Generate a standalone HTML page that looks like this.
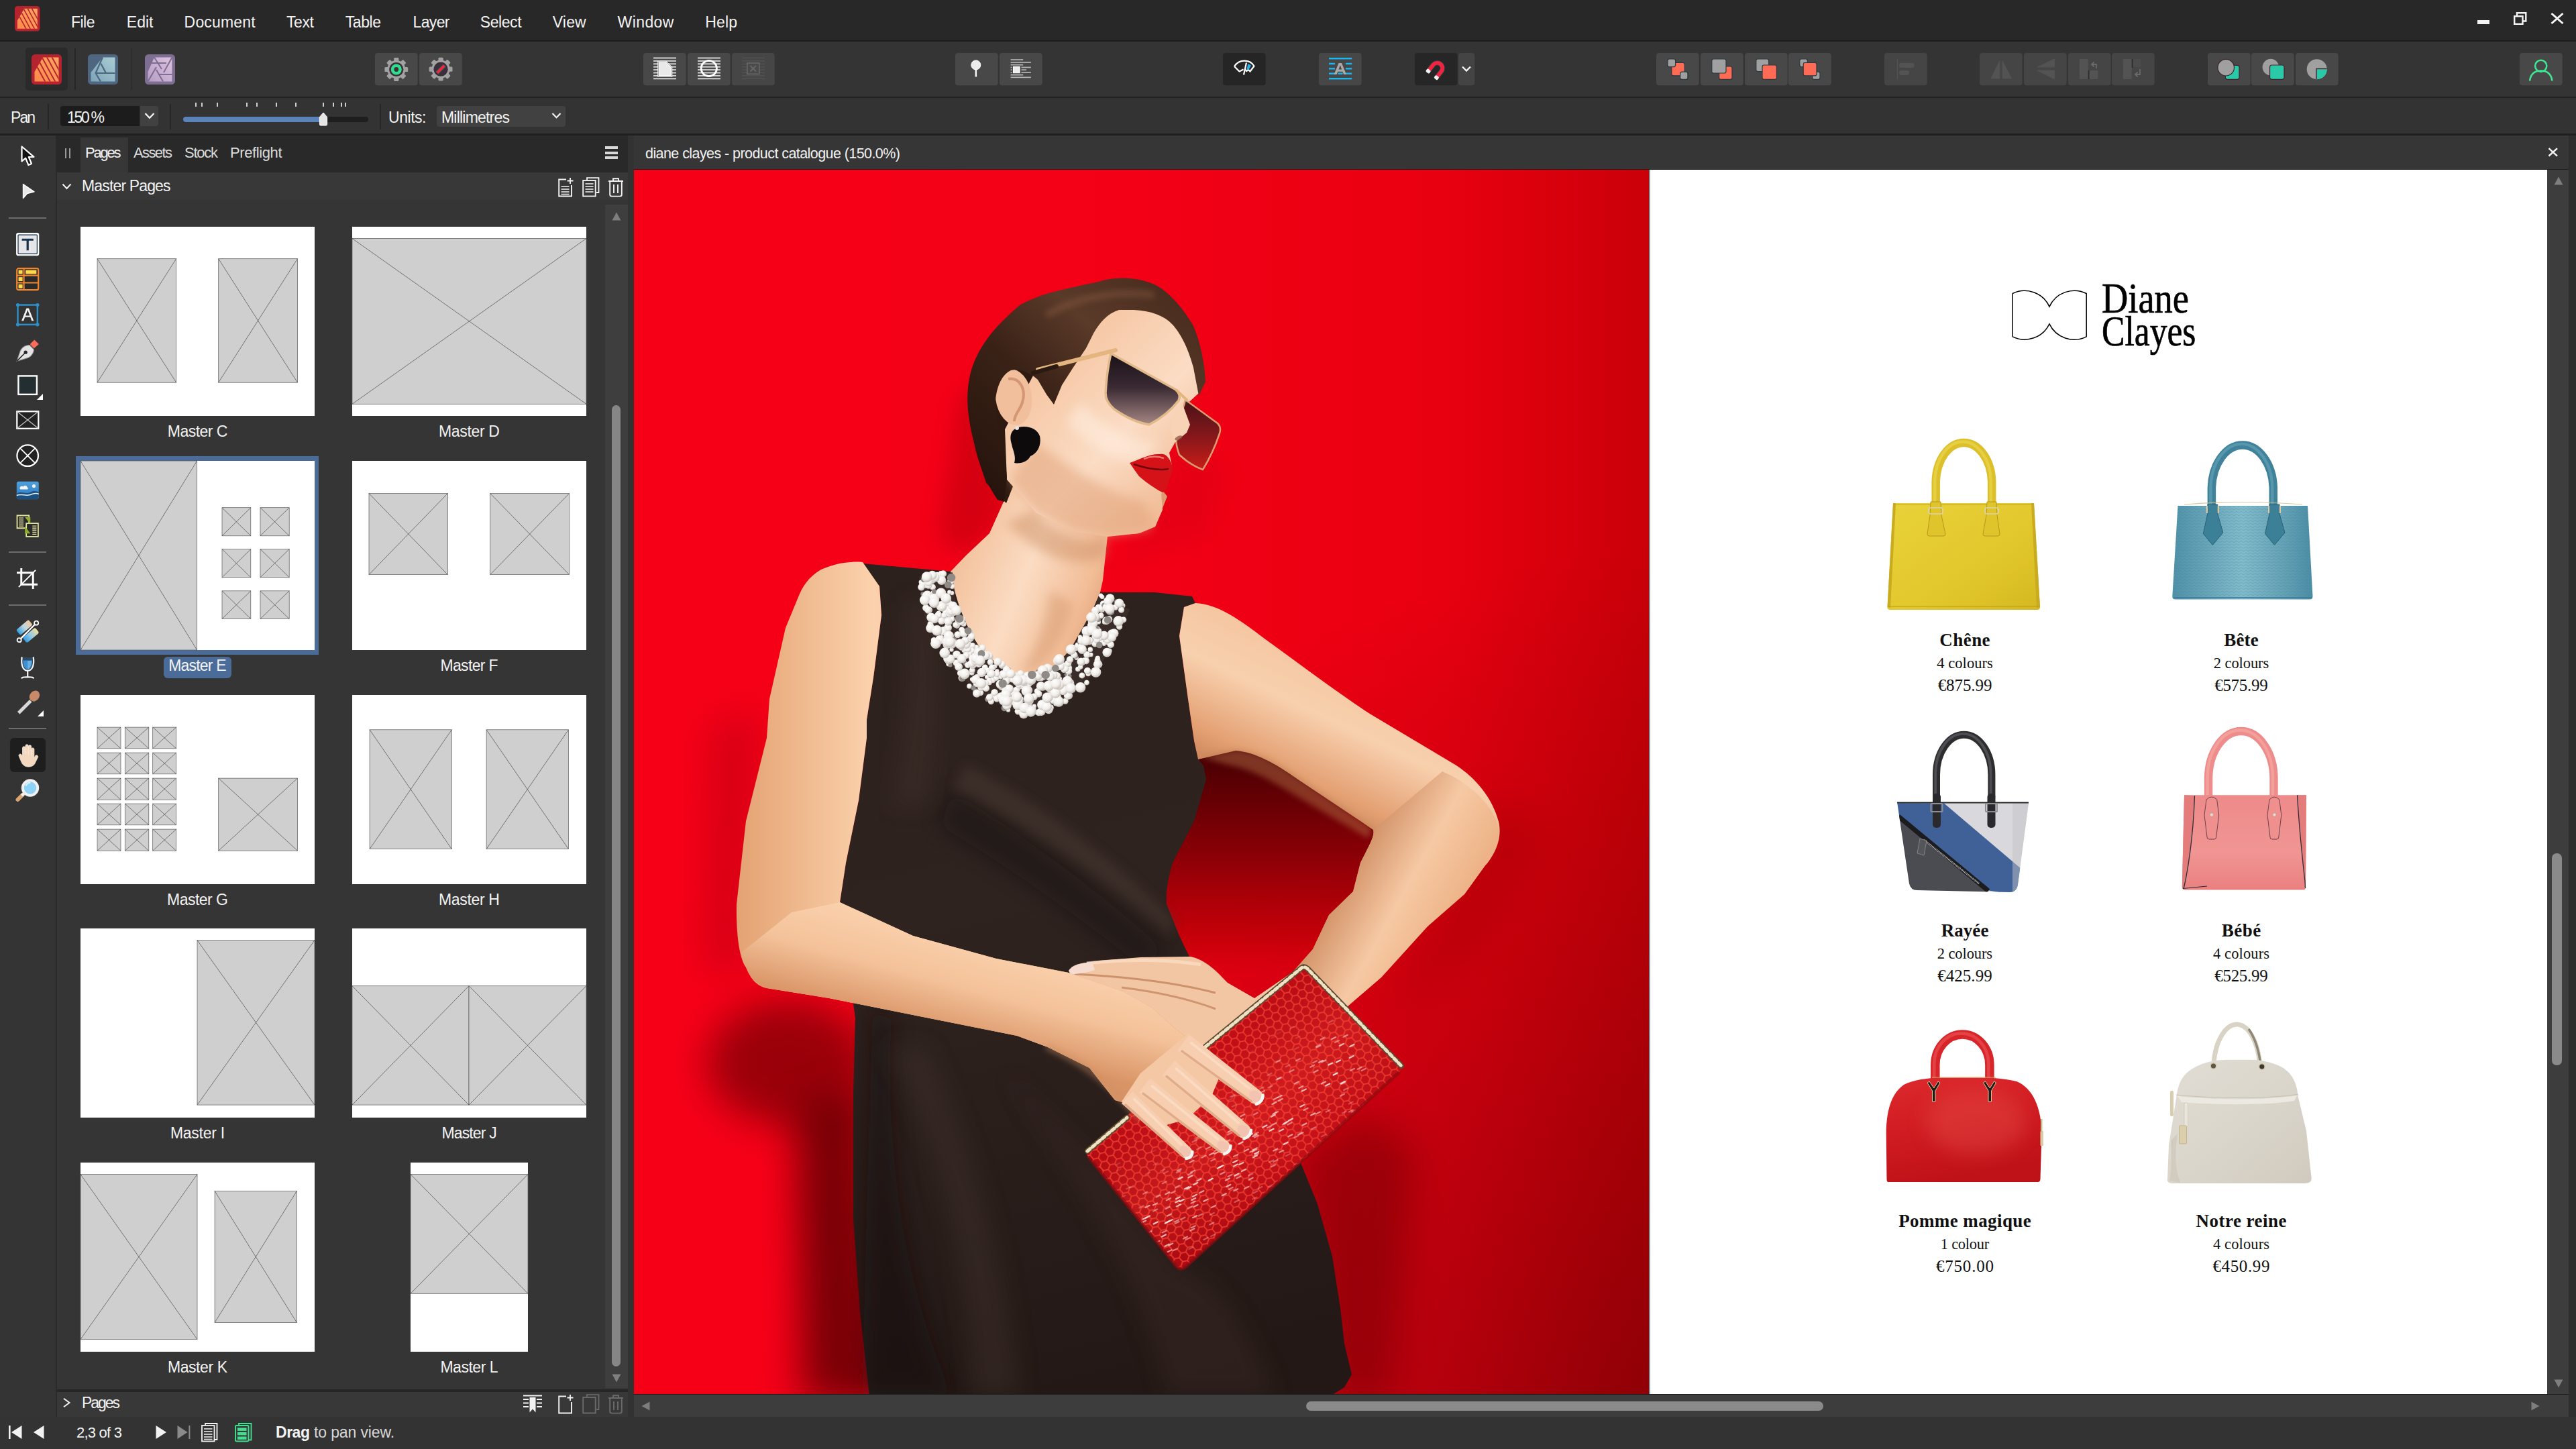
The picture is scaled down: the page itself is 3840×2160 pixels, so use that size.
<!DOCTYPE html>
<html><head><meta charset="utf-8"><title>Affinity Publisher</title>
<style>
html,body{margin:0;padding:0;background:#333;}
body{width:3840px;height:2160px;position:relative;overflow:hidden;font-family:"Liberation Sans",sans-serif;}
.a{position:absolute;}
.t{position:absolute;white-space:nowrap;}
svg{position:absolute;overflow:visible;}
</style></head><body>
<div class="a" style="left:0px;top:0px;width:3840px;height:60px;background:#282828;"></div>
<div class="a" style="left:0px;top:60px;width:3840px;height:2px;background:#1d1d1d;"></div>
<div class="a" style="left:0px;top:62px;width:3840px;height:82px;background:#343434;"></div>
<div class="a" style="left:0px;top:144px;width:3840px;height:2px;background:#202020;"></div>
<div class="a" style="left:0px;top:146px;width:3840px;height:53px;background:#333333;"></div>
<div class="a" style="left:0px;top:199px;width:3840px;height:3px;background:#1f1f1f;"></div>
<div class="a" style="left:0px;top:202px;width:83px;height:1910px;background:#343434;"></div>
<div class="a" style="left:83px;top:202px;width:2px;height:1910px;background:#2a2a2a;"></div>
<div class="a" style="left:85px;top:202px;width:851px;height:55px;background:#292929;"></div>
<div class="a" style="left:120px;top:205px;width:71px;height:52px;background:#373737;"></div>
<div class="a" style="left:85px;top:257px;width:851px;height:41px;background:#383838;"></div>
<div class="a" style="left:85px;top:298px;width:851px;height:1773px;background:#353535;"></div>
<div class="a" style="left:902px;top:305px;width:34px;height:1764px;background:#3e3e3e;"></div>
<div class="a" style="left:85px;top:2071px;width:851px;height:4px;background:#262626;"></div>
<div class="a" style="left:85px;top:2075px;width:851px;height:37px;background:#383838;"></div>
<div class="a" style="left:936px;top:202px;width:9px;height:1910px;background:#323232;"></div>
<div class="a" style="left:945px;top:202px;width:2px;height:50px;background:#2a2a2a;"></div>
<div class="a" style="left:945px;top:202px;width:2884px;height:50px;background:#363636;"></div>
<div class="a" style="left:3829px;top:202px;width:11px;height:1910px;background:#2e2e2e;"></div>
<div class="a" style="left:945px;top:252px;width:2884px;height:1px;background:#1a1f1f;"></div>
<div class="a" style="left:3797px;top:253px;width:32px;height:1825px;background:#3d3d3d;"></div>
<div class="a" style="left:945px;top:2078px;width:2884px;height:1px;background:#1c1c1c;"></div>
<div class="a" style="left:945px;top:2079px;width:2884px;height:33px;background:#3d3d3d;"></div>
<div class="a" style="left:1947px;top:2089px;width:771px;height:14px;background:#8a8a8a;border-radius:7px"></div>
<div class="a" style="left:3804px;top:1272px;width:15px;height:316px;background:#8a8a8a;border-radius:7px"></div>
<div class="a" style="left:912px;top:604px;width:13px;height:1433px;background:#868686;border-radius:7px"></div>
<div class="a" style="left:0px;top:2112px;width:3840px;height:48px;background:#333333;"></div>
<div class="t" style="left:106.0px;top:21.5px;font:400 23px/23px 'Liberation Sans',sans-serif;color:#f2f2f2;letter-spacing:-0.52px;">File</div>
<div class="t" style="left:188.8px;top:21.5px;font:400 23px/23px 'Liberation Sans',sans-serif;color:#f2f2f2;letter-spacing:0.02px;">Edit</div>
<div class="t" style="left:274.6px;top:21.5px;font:400 23px/23px 'Liberation Sans',sans-serif;color:#f2f2f2;letter-spacing:0.18px;">Document</div>
<div class="t" style="left:427.0px;top:21.5px;font:400 23px/23px 'Liberation Sans',sans-serif;color:#f2f2f2;letter-spacing:-0.39px;">Text</div>
<div class="t" style="left:514.7px;top:21.5px;font:400 23px/23px 'Liberation Sans',sans-serif;color:#f2f2f2;letter-spacing:-0.42px;">Table</div>
<div class="t" style="left:615.6px;top:21.5px;font:400 23px/23px 'Liberation Sans',sans-serif;color:#f2f2f2;letter-spacing:-0.68px;">Layer</div>
<div class="t" style="left:715.8px;top:21.5px;font:400 23px/23px 'Liberation Sans',sans-serif;color:#f2f2f2;letter-spacing:-0.43px;">Select</div>
<div class="t" style="left:823.8px;top:21.5px;font:400 23px/23px 'Liberation Sans',sans-serif;color:#f2f2f2;letter-spacing:0.15px;">View</div>
<div class="t" style="left:920.6px;top:21.5px;font:400 23px/23px 'Liberation Sans',sans-serif;color:#f2f2f2;letter-spacing:0.40px;">Window</div>
<div class="t" style="left:1051.3px;top:21.5px;font:400 23px/23px 'Liberation Sans',sans-serif;color:#f2f2f2;letter-spacing:0.17px;">Help</div>
<div class="a" style="left:71px;top:155px;width:2px;height:38px;background:#262626;"></div>
<div class="t" style="left:16.0px;top:163.5px;font:400 23px/23px 'Liberation Sans',sans-serif;color:#f2f2f2;letter-spacing:-1.96px;">Pan</div>
<div class="a" style="left:90px;top:158px;width:118px;height:30px;background:#1c1c1c;border-radius:4px 0 0 4px"></div>
<div class="a" style="left:209px;top:158px;width:27px;height:30px;background:#414141;border-radius:0 4px 4px 0"></div>
<div class="t" style="left:100.0px;top:163.5px;font:400 23px/23px 'Liberation Sans',sans-serif;color:#f2f2f2;letter-spacing:-2.30px;">150 %</div>
<div class="a" style="left:253px;top:155px;width:2px;height:38px;background:#262626;"></div>
<div class="a" style="left:273px;top:174px;width:276px;height:8px;background:#1e1e1e;border-radius:4px"></div>
<div class="a" style="left:273px;top:174px;width:209px;height:8px;background:#5b83b8;border-radius:4px 0 0 4px"></div>
<div class="a" style="left:291px;top:153px;width:2px;height:6px;background:#d0d0d0;"></div>
<div class="a" style="left:300px;top:153px;width:2px;height:6px;background:#d0d0d0;"></div>
<div class="a" style="left:323px;top:153px;width:2px;height:6px;background:#d0d0d0;"></div>
<div class="a" style="left:367px;top:153px;width:2px;height:6px;background:#d0d0d0;"></div>
<div class="a" style="left:382px;top:153px;width:2px;height:6px;background:#d0d0d0;"></div>
<div class="a" style="left:411px;top:153px;width:2px;height:6px;background:#d0d0d0;"></div>
<div class="a" style="left:440px;top:153px;width:2px;height:6px;background:#d0d0d0;"></div>
<div class="a" style="left:481px;top:153px;width:2px;height:6px;background:#d0d0d0;"></div>
<div class="a" style="left:496px;top:153px;width:2px;height:6px;background:#d0d0d0;"></div>
<div class="a" style="left:508px;top:153px;width:2px;height:6px;background:#d0d0d0;"></div>
<div class="a" style="left:514px;top:153px;width:2px;height:6px;background:#d0d0d0;"></div>
<div class="a" style="left:566px;top:155px;width:2px;height:38px;background:#262626;"></div>
<div class="t" style="left:579.0px;top:163.5px;font:400 23px/23px 'Liberation Sans',sans-serif;color:#f2f2f2;letter-spacing:-0.46px;">Units:</div>
<div class="a" style="left:651px;top:158px;width:192px;height:31px;background:#414141;border-radius:4px"></div>
<div class="t" style="left:658.0px;top:163.5px;font:400 23px/23px 'Liberation Sans',sans-serif;color:#f2f2f2;letter-spacing:-0.79px;">Millimetres</div>
<div class="t" style="left:127.0px;top:217.4px;font:400 22px/22px 'Liberation Sans',sans-serif;color:#f2f2f2;letter-spacing:-2.22px;">Pages</div>
<div class="t" style="left:199.0px;top:217.4px;font:400 22px/22px 'Liberation Sans',sans-serif;color:#dcdcdc;letter-spacing:-1.60px;">Assets</div>
<div class="t" style="left:275.0px;top:217.4px;font:400 22px/22px 'Liberation Sans',sans-serif;color:#dcdcdc;letter-spacing:-1.26px;">Stock</div>
<div class="t" style="left:343.0px;top:217.4px;font:400 22px/22px 'Liberation Sans',sans-serif;color:#dcdcdc;letter-spacing:-0.40px;">Preflight</div>
<div class="t" style="left:122.0px;top:265.5px;font:400 23px/23px 'Liberation Sans',sans-serif;color:#f2f2f2;letter-spacing:-0.85px;">Master Pages</div>
<div class="t" style="left:122.0px;top:2079.5px;font:400 23px/23px 'Liberation Sans',sans-serif;color:#f2f2f2;letter-spacing:-2.05px;">Pages</div>
<div class="t" style="left:962.0px;top:219.3px;font:400 21.5px/21.5px 'Liberation Sans',sans-serif;color:#f2f2f2;letter-spacing:-0.57px;">diane clayes - product catalogue (150.0%)</div>
<div class="t" style="left:114.0px;top:2124.9px;font:400 22px/22px 'Liberation Sans',sans-serif;color:#f2f2f2;letter-spacing:-0.77px;">2,3 of 3</div>
<div class="t" style="left:411.0px;top:2124.0px;font:700 23px/23px 'Liberation Sans',sans-serif;color:#f2f2f2;letter-spacing:-0.47px;">Drag</div>
<div class="t" style="left:468.0px;top:2124.0px;font:400 23px/23px 'Liberation Sans',sans-serif;color:#d8d8d8;letter-spacing:-0.13px;">to pan view.</div>
<div class="a" style="left:113px;top:680px;width:362px;height:296px;background:#4b6c99;"></div>
<div class="a" style="left:244px;top:979px;width:101px;height:32px;background:#4b6c99;border-radius:6px;"></div>
<svg style="left:120px;top:338px" width="349" height="282" viewBox="0 0 349 282"><rect width="349" height="282" fill="#fff"/><rect x="25.0" y="47.7" width="117.7" height="184.5" fill="#cfcfcf" stroke="#5a5a5a" stroke-width="0.7"/><path d="M25.0,47.7L142.7,232.2M142.7,47.7L25.0,232.2" stroke="#4a4a4a" stroke-width="0.7" fill="none"/><rect x="205.7" y="47.7" width="117.8" height="184.5" fill="#cfcfcf" stroke="#5a5a5a" stroke-width="0.7"/><path d="M205.7,47.7L323.5,232.2M323.5,47.7L205.7,232.2" stroke="#4a4a4a" stroke-width="0.7" fill="none"/></svg>
<svg style="left:525px;top:338px" width="349" height="282" viewBox="0 0 349 282"><rect width="349" height="282" fill="#fff"/><rect x="0.0" y="17.5" width="349.0" height="246.8" fill="#cfcfcf" stroke="#5a5a5a" stroke-width="0.7"/><path d="M0.0,17.5L349.0,264.3M349.0,17.5L0.0,264.3" stroke="#4a4a4a" stroke-width="0.7" fill="none"/></svg>
<div class="t" style="left:249.8px;top:632.2px;font:400 23px/23px 'Liberation Sans',sans-serif;color:#f2f2f2;letter-spacing:-0.54px;">Master C</div>
<div class="t" style="left:654.0px;top:632.2px;font:400 23px/23px 'Liberation Sans',sans-serif;color:#f2f2f2;letter-spacing:-0.34px;">Master D</div>
<svg style="left:120px;top:687px" width="349" height="282" viewBox="0 0 349 282"><rect width="349" height="282" fill="#fff"/><rect x="0.0" y="0.0" width="173.7" height="282.0" fill="#cfcfcf" stroke="#5a5a5a" stroke-width="0.7"/><path d="M0.0,0.0L173.7,282.0M173.7,0.0L0.0,282.0" stroke="#4a4a4a" stroke-width="0.7" fill="none"/><rect x="211.0" y="69.7" width="42.8" height="42.1" fill="#cfcfcf" stroke="#5a5a5a" stroke-width="0.7"/><path d="M211.0,69.7L253.8,111.8M253.8,69.7L211.0,111.8" stroke="#4a4a4a" stroke-width="0.7" fill="none"/><rect x="211.0" y="131.6" width="42.8" height="42.1" fill="#cfcfcf" stroke="#5a5a5a" stroke-width="0.7"/><path d="M211.0,131.6L253.8,173.7M253.8,131.6L211.0,173.7" stroke="#4a4a4a" stroke-width="0.7" fill="none"/><rect x="211.0" y="193.8" width="42.8" height="41.8" fill="#cfcfcf" stroke="#5a5a5a" stroke-width="0.7"/><path d="M211.0,193.8L253.8,235.6M253.8,193.8L211.0,235.6" stroke="#4a4a4a" stroke-width="0.7" fill="none"/><rect x="268.0" y="69.7" width="43.2" height="42.1" fill="#cfcfcf" stroke="#5a5a5a" stroke-width="0.7"/><path d="M268.0,69.7L311.2,111.8M311.2,69.7L268.0,111.8" stroke="#4a4a4a" stroke-width="0.7" fill="none"/><rect x="268.0" y="131.6" width="43.2" height="42.1" fill="#cfcfcf" stroke="#5a5a5a" stroke-width="0.7"/><path d="M268.0,131.6L311.2,173.7M311.2,131.6L268.0,173.7" stroke="#4a4a4a" stroke-width="0.7" fill="none"/><rect x="268.0" y="193.8" width="43.2" height="41.8" fill="#cfcfcf" stroke="#5a5a5a" stroke-width="0.7"/><path d="M268.0,193.8L311.2,235.6M311.2,193.8L268.0,235.6" stroke="#4a4a4a" stroke-width="0.7" fill="none"/></svg>
<svg style="left:525px;top:687px" width="349" height="282" viewBox="0 0 349 282"><rect width="349" height="282" fill="#fff"/><rect x="25.0" y="48.5" width="117.4" height="121.1" fill="#cfcfcf" stroke="#5a5a5a" stroke-width="0.7"/><path d="M25.0,48.5L142.4,169.6M142.4,48.5L25.0,169.6" stroke="#4a4a4a" stroke-width="0.7" fill="none"/><rect x="205.7" y="48.5" width="117.8" height="121.1" fill="#cfcfcf" stroke="#5a5a5a" stroke-width="0.7"/><path d="M205.7,48.5L323.5,169.6M323.5,48.5L205.7,169.6" stroke="#4a4a4a" stroke-width="0.7" fill="none"/></svg>
<div class="t" style="left:251.2px;top:981.2px;font:400 23px/23px 'Liberation Sans',sans-serif;color:#f2f2f2;letter-spacing:-0.79px;">Master E</div>
<div class="t" style="left:656.4px;top:981.2px;font:400 23px/23px 'Liberation Sans',sans-serif;color:#f2f2f2;letter-spacing:-0.65px;">Master F</div>
<svg style="left:120px;top:1036px" width="349" height="282" viewBox="0 0 349 282"><rect width="349" height="282" fill="#fff"/><rect x="25.0" y="48.1" width="35.0" height="31.7" fill="#cfcfcf" stroke="#5a5a5a" stroke-width="0.7"/><path d="M25.0,48.1L60.0,79.8M60.0,48.1L25.0,79.8" stroke="#4a4a4a" stroke-width="0.7" fill="none"/><rect x="25.0" y="86.1" width="35.0" height="31.7" fill="#cfcfcf" stroke="#5a5a5a" stroke-width="0.7"/><path d="M25.0,86.1L60.0,117.8M60.0,86.1L25.0,117.8" stroke="#4a4a4a" stroke-width="0.7" fill="none"/><rect x="25.0" y="124.1" width="35.0" height="32.1" fill="#cfcfcf" stroke="#5a5a5a" stroke-width="0.7"/><path d="M25.0,124.1L60.0,156.2M60.0,124.1L25.0,156.2" stroke="#4a4a4a" stroke-width="0.7" fill="none"/><rect x="25.0" y="162.1" width="35.0" height="31.7" fill="#cfcfcf" stroke="#5a5a5a" stroke-width="0.7"/><path d="M25.0,162.1L60.0,193.8M60.0,162.1L25.0,193.8" stroke="#4a4a4a" stroke-width="0.7" fill="none"/><rect x="25.0" y="200.1" width="35.0" height="32.1" fill="#cfcfcf" stroke="#5a5a5a" stroke-width="0.7"/><path d="M25.0,200.1L60.0,232.2M60.0,200.1L25.0,232.2" stroke="#4a4a4a" stroke-width="0.7" fill="none"/><rect x="66.3" y="48.1" width="35.5" height="31.7" fill="#cfcfcf" stroke="#5a5a5a" stroke-width="0.7"/><path d="M66.3,48.1L101.8,79.8M101.8,48.1L66.3,79.8" stroke="#4a4a4a" stroke-width="0.7" fill="none"/><rect x="66.3" y="86.1" width="35.5" height="31.7" fill="#cfcfcf" stroke="#5a5a5a" stroke-width="0.7"/><path d="M66.3,86.1L101.8,117.8M101.8,86.1L66.3,117.8" stroke="#4a4a4a" stroke-width="0.7" fill="none"/><rect x="66.3" y="124.1" width="35.5" height="32.1" fill="#cfcfcf" stroke="#5a5a5a" stroke-width="0.7"/><path d="M66.3,124.1L101.8,156.2M101.8,124.1L66.3,156.2" stroke="#4a4a4a" stroke-width="0.7" fill="none"/><rect x="66.3" y="162.1" width="35.5" height="31.7" fill="#cfcfcf" stroke="#5a5a5a" stroke-width="0.7"/><path d="M66.3,162.1L101.8,193.8M101.8,162.1L66.3,193.8" stroke="#4a4a4a" stroke-width="0.7" fill="none"/><rect x="66.3" y="200.1" width="35.5" height="32.1" fill="#cfcfcf" stroke="#5a5a5a" stroke-width="0.7"/><path d="M66.3,200.1L101.8,232.2M101.8,200.1L66.3,232.2" stroke="#4a4a4a" stroke-width="0.7" fill="none"/><rect x="107.7" y="48.1" width="35.0" height="31.7" fill="#cfcfcf" stroke="#5a5a5a" stroke-width="0.7"/><path d="M107.7,48.1L142.7,79.8M142.7,48.1L107.7,79.8" stroke="#4a4a4a" stroke-width="0.7" fill="none"/><rect x="107.7" y="86.1" width="35.0" height="31.7" fill="#cfcfcf" stroke="#5a5a5a" stroke-width="0.7"/><path d="M107.7,86.1L142.7,117.8M142.7,86.1L107.7,117.8" stroke="#4a4a4a" stroke-width="0.7" fill="none"/><rect x="107.7" y="124.1" width="35.0" height="32.1" fill="#cfcfcf" stroke="#5a5a5a" stroke-width="0.7"/><path d="M107.7,124.1L142.7,156.2M142.7,124.1L107.7,156.2" stroke="#4a4a4a" stroke-width="0.7" fill="none"/><rect x="107.7" y="162.1" width="35.0" height="31.7" fill="#cfcfcf" stroke="#5a5a5a" stroke-width="0.7"/><path d="M107.7,162.1L142.7,193.8M142.7,162.1L107.7,193.8" stroke="#4a4a4a" stroke-width="0.7" fill="none"/><rect x="107.7" y="200.1" width="35.0" height="32.1" fill="#cfcfcf" stroke="#5a5a5a" stroke-width="0.7"/><path d="M107.7,200.1L142.7,232.2M142.7,200.1L107.7,232.2" stroke="#4a4a4a" stroke-width="0.7" fill="none"/><rect x="205.7" y="124.1" width="117.8" height="108.1" fill="#cfcfcf" stroke="#5a5a5a" stroke-width="0.7"/><path d="M205.7,124.1L323.5,232.2M323.5,124.1L205.7,232.2" stroke="#4a4a4a" stroke-width="0.7" fill="none"/></svg>
<svg style="left:525px;top:1036px" width="349" height="282" viewBox="0 0 349 282"><rect width="349" height="282" fill="#fff"/><rect x="26.1" y="51.8" width="122.2" height="177.8" fill="#cfcfcf" stroke="#5a5a5a" stroke-width="0.7"/><path d="M26.1,51.8L148.3,229.6M148.3,51.8L26.1,229.6" stroke="#4a4a4a" stroke-width="0.7" fill="none"/><rect x="200.1" y="51.8" width="122.3" height="177.8" fill="#cfcfcf" stroke="#5a5a5a" stroke-width="0.7"/><path d="M200.1,51.8L322.4,229.6M322.4,51.8L200.1,229.6" stroke="#4a4a4a" stroke-width="0.7" fill="none"/></svg>
<div class="t" style="left:249.0px;top:1330.2px;font:400 23px/23px 'Liberation Sans',sans-serif;color:#f2f2f2;letter-spacing:-0.51px;">Master G</div>
<div class="t" style="left:654.0px;top:1330.2px;font:400 23px/23px 'Liberation Sans',sans-serif;color:#f2f2f2;letter-spacing:-0.34px;">Master H</div>
<svg style="left:120px;top:1384px" width="349" height="282" viewBox="0 0 349 282"><rect width="349" height="282" fill="#fff"/><rect x="174.0" y="17.5" width="175.0" height="245.6" fill="#cfcfcf" stroke="#5a5a5a" stroke-width="0.7"/><path d="M174.0,17.5L349.0,263.1M349.0,17.5L174.0,263.1" stroke="#4a4a4a" stroke-width="0.7" fill="none"/></svg>
<svg style="left:525px;top:1384px" width="349" height="282" viewBox="0 0 349 282"><rect width="349" height="282" fill="#fff"/><rect x="0.0" y="85.7" width="174.0" height="177.4" fill="#cfcfcf" stroke="#5a5a5a" stroke-width="0.7"/><path d="M0.0,85.7L174.0,263.1M174.0,85.7L0.0,263.1" stroke="#4a4a4a" stroke-width="0.7" fill="none"/><rect x="174.0" y="85.7" width="175.0" height="177.4" fill="#cfcfcf" stroke="#5a5a5a" stroke-width="0.7"/><path d="M174.0,85.7L349.0,263.1M349.0,85.7L174.0,263.1" stroke="#4a4a4a" stroke-width="0.7" fill="none"/></svg>
<div class="t" style="left:253.9px;top:1678.2px;font:400 23px/23px 'Liberation Sans',sans-serif;color:#f2f2f2;letter-spacing:-0.27px;">Master I</div>
<div class="t" style="left:658.4px;top:1678.2px;font:400 23px/23px 'Liberation Sans',sans-serif;color:#f2f2f2;letter-spacing:-0.84px;">Master J</div>
<svg style="left:120px;top:1733px" width="349" height="282" viewBox="0 0 349 282"><rect width="349" height="282" fill="#fff"/><rect x="0.0" y="17.5" width="174.0" height="246.0" fill="#cfcfcf" stroke="#5a5a5a" stroke-width="0.7"/><path d="M0.0,17.5L174.0,263.5M174.0,17.5L0.0,263.5" stroke="#4a4a4a" stroke-width="0.7" fill="none"/><rect x="200.1" y="42.5" width="122.3" height="196.0" fill="#cfcfcf" stroke="#5a5a5a" stroke-width="0.7"/><path d="M200.1,42.5L322.4,238.5M322.4,42.5L200.1,238.5" stroke="#4a4a4a" stroke-width="0.7" fill="none"/></svg>
<svg style="left:612px;top:1733px" width="175" height="282" viewBox="0 0 175 282"><rect width="175" height="282" fill="#fff"/><rect x="0.0" y="17.5" width="175.0" height="177.8" fill="#cfcfcf" stroke="#5a5a5a" stroke-width="0.7"/><path d="M0.0,17.5L175.0,195.3M175.0,17.5L0.0,195.3" stroke="#4a4a4a" stroke-width="0.7" fill="none"/></svg>
<div class="t" style="left:249.9px;top:2027.2px;font:400 23px/23px 'Liberation Sans',sans-serif;color:#f2f2f2;letter-spacing:-0.42px;">Master K</div>
<div class="t" style="left:656.4px;top:2027.2px;font:400 23px/23px 'Liberation Sans',sans-serif;color:#f2f2f2;letter-spacing:-0.47px;">Master L</div>
<svg style="left:559px;top:79px" width="63.7" height="48.3" viewBox="0 0 63.7 48.3"><rect width="63.7" height="48.3" rx="4" fill="#484848"/><rect x="28.2" y="7.100000000000001" width="7.2" height="8" rx="1.5" fill="#a2a2a2" transform="rotate(0 31.8 24.5)"/><rect x="28.2" y="7.100000000000001" width="7.2" height="8" rx="1.5" fill="#a2a2a2" transform="rotate(45 31.8 24.5)"/><rect x="28.2" y="7.100000000000001" width="7.2" height="8" rx="1.5" fill="#a2a2a2" transform="rotate(90 31.8 24.5)"/><rect x="28.2" y="7.100000000000001" width="7.2" height="8" rx="1.5" fill="#a2a2a2" transform="rotate(135 31.8 24.5)"/><rect x="28.2" y="7.100000000000001" width="7.2" height="8" rx="1.5" fill="#a2a2a2" transform="rotate(180 31.8 24.5)"/><rect x="28.2" y="7.100000000000001" width="7.2" height="8" rx="1.5" fill="#a2a2a2" transform="rotate(225 31.8 24.5)"/><rect x="28.2" y="7.100000000000001" width="7.2" height="8" rx="1.5" fill="#a2a2a2" transform="rotate(270 31.8 24.5)"/><rect x="28.2" y="7.100000000000001" width="7.2" height="8" rx="1.5" fill="#a2a2a2" transform="rotate(315 31.8 24.5)"/><circle cx="31.8" cy="24.5" r="13.6" fill="#a2a2a2"/><circle cx="31.8" cy="24.5" r="10.6" fill="#3a2f3a"/><circle cx="31.8" cy="24.5" r="5.7" fill="none" stroke="#2fe08a" stroke-width="4.6"/></svg>
<svg style="left:624.5px;top:79px" width="63.7" height="48.3" viewBox="0 0 63.7 48.3"><rect width="63.7" height="48.3" rx="4" fill="#484848"/><rect x="28.5" y="6.800000000000001" width="7.2" height="8" rx="1.5" fill="#a2a2a2" transform="rotate(0 32.1 24.2)"/><rect x="28.5" y="6.800000000000001" width="7.2" height="8" rx="1.5" fill="#a2a2a2" transform="rotate(45 32.1 24.2)"/><rect x="28.5" y="6.800000000000001" width="7.2" height="8" rx="1.5" fill="#a2a2a2" transform="rotate(90 32.1 24.2)"/><rect x="28.5" y="6.800000000000001" width="7.2" height="8" rx="1.5" fill="#a2a2a2" transform="rotate(135 32.1 24.2)"/><rect x="28.5" y="6.800000000000001" width="7.2" height="8" rx="1.5" fill="#a2a2a2" transform="rotate(180 32.1 24.2)"/><rect x="28.5" y="6.800000000000001" width="7.2" height="8" rx="1.5" fill="#a2a2a2" transform="rotate(225 32.1 24.2)"/><rect x="28.5" y="6.800000000000001" width="7.2" height="8" rx="1.5" fill="#a2a2a2" transform="rotate(270 32.1 24.2)"/><rect x="28.5" y="6.800000000000001" width="7.2" height="8" rx="1.5" fill="#a2a2a2" transform="rotate(315 32.1 24.2)"/><circle cx="32.1" cy="24.2" r="13.6" fill="#a2a2a2"/><circle cx="32.1" cy="24.2" r="10.6" fill="#3a2f3a"/><path d="M26.4,29.8 L37.8,18.6" stroke="#1f5a55" stroke-width="6.2"/><path d="M26.6,29.6 L37.6,18.8" stroke="#f3263f" stroke-width="4"/></svg>
<svg style="left:959px;top:79px" width="63.7" height="48.3" viewBox="0 0 63.7 48.3"><rect width="63.7" height="48.3" rx="4" fill="#484848"/><rect x="15" y="6.5" width="34" height="2" fill="#d0d0d0"/><rect x="15" y="10.9" width="34" height="2" fill="#d0d0d0"/><rect x="15" y="15.3" width="34" height="2" fill="#d0d0d0"/><rect x="15" y="19.7" width="34" height="2" fill="#d0d0d0"/><rect x="15" y="24.1" width="34" height="2" fill="#d0d0d0"/><rect x="15" y="28.5" width="34" height="2" fill="#d0d0d0"/><rect x="15" y="32.9" width="34" height="2" fill="#d0d0d0"/><rect x="15" y="37.3" width="34" height="2" fill="#d0d0d0"/><path d="M22.5,13 L33.5,13 L42,21.5 L42,34.5 L22.5,34.5 Z" fill="#e9e9e9" stroke="#fff" stroke-width="2.6" stroke-linejoin="miter"/><path d="M22.5,13 L33.5,13 L42,21.5 L42,34.5 L22.5,34.5 Z" fill="none" stroke="#2c2c2c" stroke-width="0.8" transform="translate(0,0)" opacity="0.5"/></svg>
<svg style="left:1025px;top:79px" width="63.7" height="48.3" viewBox="0 0 63.7 48.3"><rect width="63.7" height="48.3" rx="4" fill="#484848"/><rect x="15" y="6.5" width="34" height="2" fill="#d0d0d0"/><rect x="15" y="10.9" width="34" height="2" fill="#d0d0d0"/><rect x="15" y="15.3" width="34" height="2" fill="#d0d0d0"/><rect x="15" y="19.7" width="34" height="2" fill="#d0d0d0"/><rect x="15" y="24.1" width="34" height="2" fill="#d0d0d0"/><rect x="15" y="28.5" width="34" height="2" fill="#d0d0d0"/><rect x="15" y="32.9" width="34" height="2" fill="#d0d0d0"/><rect x="15" y="37.3" width="34" height="2" fill="#d0d0d0"/><circle cx="31.8" cy="23" r="11.6" fill="none" stroke="#fff" stroke-width="2.8"/></svg>
<svg style="left:1090.5px;top:79px" width="63.7" height="48.3" viewBox="0 0 63.7 48.3"><rect width="63.7" height="48.3" rx="4" fill="#464646"/><rect x="15" y="6.9" width="34" height="1.2" fill="#555"/><rect x="15" y="11.3" width="34" height="1.2" fill="#555"/><rect x="15" y="15.7" width="34" height="1.2" fill="#555"/><rect x="15" y="20.1" width="34" height="1.2" fill="#555"/><rect x="15" y="24.5" width="34" height="1.2" fill="#555"/><rect x="15" y="28.9" width="34" height="1.2" fill="#555"/><rect x="15" y="33.3" width="34" height="1.2" fill="#555"/><rect x="15" y="37.7" width="34" height="1.2" fill="#555"/><rect x="22.8" y="15" width="18" height="16.4" fill="#4a4a4a" stroke="#686868" stroke-width="1.6"/><path d="M27.5,19 L36,27.5 M36,19 L27.5,27.5" stroke="#686868" stroke-width="1.8"/></svg>
<svg style="left:1424px;top:79px" width="63.7" height="48.3" viewBox="0 0 63.7 48.3"><rect width="63.7" height="48.3" rx="4" fill="#484848"/><rect x="29.5" y="22" width="2.6" height="13.5" fill="#f2f2f2"/><circle cx="30.8" cy="17.9" r="7" fill="#ececec" stroke="#fff" stroke-width="1"/></svg>
<svg style="left:1490px;top:79px" width="63.7" height="48.3" viewBox="0 0 63.7 48.3"><rect width="63.7" height="48.3" rx="4" fill="#484848"/><rect x="16.6" y="9.2" width="18.6" height="1.7" fill="#b4b4b4"/><rect x="16.6" y="13.1" width="30.299999999999997" height="1.7" fill="#b4b4b4"/><rect x="16.6" y="16.8" width="18.6" height="1.7" fill="#b4b4b4"/><rect x="32.5" y="20.599999999999998" width="14.399999999999999" height="1.7" fill="#b4b4b4"/><rect x="16.6" y="20.599999999999998" width="2" height="1.7" fill="#b4b4b4"/><rect x="32.5" y="24.3" width="7.5" height="1.7" fill="#b4b4b4"/><rect x="16.6" y="24.3" width="2" height="1.7" fill="#b4b4b4"/><rect x="32.5" y="28.099999999999998" width="14.399999999999999" height="1.7" fill="#b4b4b4"/><rect x="16.6" y="28.099999999999998" width="2" height="1.7" fill="#b4b4b4"/><rect x="16.6" y="31.8" width="18.6" height="1.7" fill="#b4b4b4"/><rect x="16.6" y="35.5" width="30.299999999999997" height="1.7" fill="#b4b4b4"/><rect x="20.5" y="20.4" width="9.6" height="9.3" fill="#ececec" stroke="#fff" stroke-width="1"/></svg>
<svg style="left:1823.3px;top:79px" width="63.7" height="48.3" viewBox="0 0 63.7 48.3"><rect width="63.7" height="48.3" rx="4" fill="#252525"/><path d="M17,20 C24,9 40,9 46.5,19.5 L40.5,27.5 L38,25 L35,27 L33,24 M17,20 L24.5,27.5 L30.5,24.5" fill="none" stroke="#fff" stroke-width="2.2" stroke-linejoin="round"/><path d="M35,14.5 L31,32.5" stroke="#fff" stroke-width="2.2"/><path d="M37.5,16 L42,18.5 L38.5,25 L35.5,24 Z" fill="#21b6f2"/></svg>
<svg style="left:1966px;top:79px" width="63.7" height="48.3" viewBox="0 0 63.7 48.3"><rect width="63.7" height="48.3" rx="4" fill="#474747"/><rect x="15" y="7.0" width="34.2" height="2.4" fill="#18b8f2"/><rect x="15" y="37.0" width="34.2" height="2.4" fill="#18b8f2"/><rect x="15" y="14.8" width="9" height="2.4" fill="#18b8f2"/><rect x="40" y="14.8" width="9.2" height="2.4" fill="#18b8f2"/><rect x="15" y="22.1" width="9" height="2.4" fill="#18b8f2"/><rect x="40" y="22.1" width="9.2" height="2.4" fill="#18b8f2"/><rect x="15" y="29.5" width="9" height="2.4" fill="#18b8f2"/><rect x="40" y="29.5" width="9.2" height="2.4" fill="#18b8f2"/><rect x="28.5" y="29.5" width="7" height="2.4" fill="#18b8f2"/><path d="M22.6,32 L29.6,15 L34,15 L41,32 L37,32 L35.4,27.8 L28.2,27.8 L26.6,32 Z M29.4,24.6 L34.2,24.6 L31.8,18.2 Z" fill="#a9a9a9" fill-rule="evenodd"/></svg>
<svg style="left:2108.5px;top:79px" width="63.4" height="48.3" viewBox="0 0 63.4 48.3"><rect width="63.4" height="48.3" rx="4" fill="#262626"/><g transform="rotate(38 32 24)"><path d="M24.5,32 L24.5,22 A7.8,7.8 0 0 1 40.1,22 L40.1,32" fill="none" stroke="#1b3a3a" stroke-width="8.4"/><path d="M24.5,32 L24.5,22 A7.8,7.8 0 0 1 40.1,22 L40.1,32" fill="none" stroke="#ef2440" stroke-width="6"/><rect x="21.2" y="31" width="6.6" height="5.5" rx="2" fill="#f2f2f2"/><rect x="36.8" y="31" width="6.6" height="5.5" rx="2" fill="#f2f2f2"/></g></svg>
<svg style="left:2174px;top:79px" width="24.3" height="48.3" viewBox="0 0 24.3 48.3"><rect width="24.3" height="48.3" rx="4" fill="#444444"/><path d="M6,20.5 L12,26.5 L18,20.5" fill="none" stroke="#f2f2f2" stroke-width="2.4"/></svg>
<svg style="left:2469.2px;top:79px" width="63.7" height="48.3" viewBox="0 0 63.7 48.3"><rect width="63.7" height="48.3" rx="4" fill="#484848"/><rect x="16.9" y="9" width="11.7" height="11.6" rx="2.5" fill="#a0a0a0" stroke="#2a3a40" stroke-width="1.2"/><rect x="35.7" y="28.1" width="11.2" height="11.2" rx="2.5" fill="#a0a0a0" stroke="#2a3a40" stroke-width="1.2"/><rect x="22.8" y="14.4" width="19.4" height="19.4" rx="2.5" fill="#ff6b54" stroke="#2a3a40" stroke-width="1.2"/><rect x="16.9" y="9" width="11.7" height="11.6" rx="2.5" fill="#a0a0a0" stroke="#2a3a40" stroke-width="1.2"/><rect x="35.7" y="28.1" width="11.2" height="11.2" rx="2.5" fill="#a0a0a0" stroke="#2a3a40" stroke-width="1.2"/></svg>
<svg style="left:2535px;top:79px" width="63.7" height="48.3" viewBox="0 0 63.7 48.3"><rect width="63.7" height="48.3" rx="4" fill="#484848"/><rect x="27.6" y="19.9" width="19.4" height="19.4" rx="2.5" fill="#ff6b54" stroke="#2a3a40" stroke-width="1.2"/><rect x="16.8" y="9" width="21.2" height="21.0" rx="2.5" fill="#a0a0a0" stroke="#2a3a40" stroke-width="1.2"/></svg>
<svg style="left:2600.7px;top:79px" width="63.7" height="48.3" viewBox="0 0 63.7 48.3"><rect width="63.7" height="48.3" rx="4" fill="#484848"/><rect x="16.8" y="9" width="18.9" height="18.6" rx="2.5" fill="#a0a0a0" stroke="#2a3a40" stroke-width="1.2"/><rect x="26" y="18" width="21.4" height="21.3" rx="2.5" fill="#ff6b54" stroke="#2a3a40" stroke-width="1.2"/></svg>
<svg style="left:2666.3px;top:79px" width="63.7" height="48.3" viewBox="0 0 63.7 48.3"><rect width="63.7" height="48.3" rx="4" fill="#484848"/><rect x="16.8" y="9" width="11.6" height="11.6" rx="2.5" fill="#a0a0a0" stroke="#2a3a40" stroke-width="1.2"/><rect x="35.7" y="28.1" width="11.3" height="11.2" rx="2.5" fill="#a0a0a0" stroke="#2a3a40" stroke-width="1.2"/><rect x="22.2" y="14.4" width="19.8" height="19.5" rx="2.5" fill="#ff6b54" stroke="#2a3a40" stroke-width="1.2"/></svg>
<svg style="left:2809px;top:79px" width="63.7" height="48.3" viewBox="0 0 63.7 48.3"><rect width="63.7" height="48.3" rx="4" fill="#454545"/><rect x="18.8" y="9" width="1.2" height="30" fill="#535353"/><rect x="22" y="15" width="22.5" height="7" rx="3" fill="#535353"/><rect x="22" y="26" width="15" height="7" rx="3" fill="#535353"/></svg>
<svg style="left:2951.2px;top:79px" width="63.7" height="48.3" viewBox="0 0 63.7 48.3"><rect width="63.7" height="48.3" rx="4" fill="#454545"/><path d="M29.8,12 L29.8,38 L17,38 Z M34,12 L34,38 L47.5,38 Z" fill="#535353" stroke="#535353" stroke-width="1" stroke-linejoin="round"/></svg>
<svg style="left:3017px;top:79px" width="63.7" height="48.3" viewBox="0 0 63.7 48.3"><rect width="63.7" height="48.3" rx="4" fill="#454545"/><path d="M45.5,9 L45.5,21 L20,21 Z M45.5,26 L45.5,39 L20,26 Z" fill="#535353" stroke="#535353" stroke-width="1" stroke-linejoin="round"/></svg>
<svg style="left:3082.7px;top:79px" width="63.7" height="48.3" viewBox="0 0 63.7 48.3"><rect width="63.7" height="48.3" rx="4" fill="#454545"/><rect x="16.8" y="9" width="13" height="30" rx="1.5" fill="#535353"/><rect x="31.5" y="26" width="13" height="13" rx="1.5" fill="#535353"/><rect x="29.8" y="26" width="1.6" height="13" fill="#2c2c2c"/><path d="M42,23 L42,17 L36,17 M38.6,13.5 L35,17 L38.6,20.5" fill="none" stroke="#6a6a6a" stroke-width="1.8"/></svg>
<svg style="left:3148.3px;top:79px" width="63.7" height="48.3" viewBox="0 0 63.7 48.3"><rect width="63.7" height="48.3" rx="4" fill="#454545"/><rect x="16.8" y="9" width="13" height="30" rx="1.5" fill="#535353"/><rect x="31.5" y="9" width="12" height="12" rx="1.5" fill="#4b4b4b"/><rect x="29.8" y="9" width="1.6" height="13" fill="#2c2c2c"/><path d="M42,24 L42,32 L35,32 M38.6,28.5 L35,32 L38.6,35.5" fill="none" stroke="#6a6a6a" stroke-width="1.8"/></svg>
<svg style="left:3290.6px;top:79px" width="63.7" height="48.3" viewBox="0 0 63.7 48.3"><rect width="63.7" height="48.3" rx="4" fill="#484848"/><rect x="26.4" y="18.3" width="20.6" height="21.0" rx="3" fill="#2acaa8" stroke="#4a2030" stroke-width="1.2"/><circle cx="27.2" cy="21.7" r="12.3" fill="#a0a0a0" stroke="#3a2530" stroke-width="1.2"/></svg>
<svg style="left:3356.2px;top:79px" width="63.7" height="48.3" viewBox="0 0 63.7 48.3"><rect width="63.7" height="48.3" rx="4" fill="#484848"/><circle cx="28.9" cy="21.1" r="12.3" fill="#a0a0a0"/><rect x="27.6" y="18" width="21.4" height="21.3" rx="3" fill="#2acaa8" stroke="#4a2030" stroke-width="1.2"/></svg>
<svg style="left:3422px;top:79px" width="63.7" height="48.3" viewBox="0 0 63.7 48.3"><rect width="63.7" height="48.3" rx="4" fill="#484848"/><circle cx="31.7" cy="24.2" r="15" fill="#a0a0a0"/><clipPath id="qc"><circle cx="31.7" cy="24.2" r="15"/></clipPath><rect x="31" y="23.5" width="20" height="20" fill="#2acaa8" stroke="#4a2030" stroke-width="1.4" clip-path="url(#qc)"/></svg>
<svg style="left:3756px;top:79px" width="63.7" height="48.3" viewBox="0 0 63.7 48.3"><rect width="63.7" height="48.3" rx="4" fill="#484848"/><circle cx="31.7" cy="19.3" r="8.6" fill="none" stroke="#40e592" stroke-width="2.6"/><path d="M15.2,40.5 C17,30 24,26.5 31.7,26.5 C39.5,26.5 46.5,30 48.3,40.5" fill="none" stroke="#40e592" stroke-width="2.6" stroke-linecap="round"/></svg>
<svg style="left:30px;top:216px" width="24" height="33" viewBox="0 0 24 33"><path d="M2.5,2.5 L2.5,24.5 L8.2,19.6 L12.4,30 L17,28 L12.8,18 L20.5,17.8 Z" fill="#101010" stroke="#fff" stroke-width="2.2" stroke-linejoin="round"/></svg>
<svg style="left:32px;top:273px" width="22" height="26" viewBox="0 0 22 26"><path d="M2.5,1.5 L2.5,22.5 L8.5,15.5 L19,12.8 Z" fill="#e8e8e8" stroke="#fff" stroke-width="1.4" stroke-linejoin="round"/></svg>
<div class="a" style="left:13px;top:324px;width:56px;height:2px;background:#6c6c6c;"></div>
<svg style="left:24px;top:347px" width="34.4" height="34.4" viewBox="0 0 34 34"><rect x="1.2" y="1.2" width="31.6" height="31.6" rx="2" fill="#e6e6e8" stroke="#fff" stroke-width="2.2"/><rect x="3" y="3" width="28" height="28" rx="1" fill="none" stroke="#16324d" stroke-width="1.2"/><path d="M8.5,8.6 L25.5,8.6 L25.5,11.6 L18.6,11.6 L18.6,26 L15.4,26 L15.4,11.6 L8.5,11.6 Z" fill="#16324d"/></svg>
<svg style="left:24px;top:399.4px" width="34.4" height="34.4" viewBox="0 0 34 34"><rect x="1.2" y="1.2" width="31.6" height="31.6" rx="2.5" fill="#2a2a2a" stroke="#f2852c" stroke-width="2.2"/><path d="M1,11.5 L33,11.5 M1,22.3 L33,22.3 M11.5,1 L11.5,33" stroke="#f2852c" stroke-width="2"/><rect x="3.5" y="3.6" width="6" height="5.6" fill="#ffd84a"/><rect x="3.5" y="14" width="6" height="5.8" fill="#ffd84a"/><rect x="3.5" y="24.6" width="6" height="5.8" fill="#ffd84a"/><rect x="14" y="3.6" width="16" height="5.6" fill="#ffd84a"/></svg>
<svg style="left:24px;top:452px" width="34.4" height="34.4" viewBox="0 0 34 34"><rect x="2.5" y="2.5" width="29" height="29" fill="#333" stroke="#2f8fc8" stroke-width="2.4"/><circle cx="2.5" cy="2.5" r="2.6" fill="#2f8fc8"/><circle cx="31.5" cy="2.5" r="2.6" fill="#2f8fc8"/><circle cx="2.5" cy="31.5" r="2.6" fill="#2f8fc8"/><circle cx="31.5" cy="31.5" r="2.6" fill="#2f8fc8"/><path d="M8,26 L15.3,7.5 L18.7,7.5 L26,26 L23,26 L21,20.6 L13,20.6 L11,26 Z M14,18.2 L20,18.2 L17,10 Z" fill="#f2f2f2" fill-rule="evenodd"/></svg>
<svg style="left:24px;top:504.5px" width="34.4" height="34.4" viewBox="0 0 34 34"><path d="M1,33 L6.5,17 C9,12 15,9 20,9.5 L26,15.5 C26.5,20 23,25.5 18,28 Z" fill="#e3e3e3" stroke="#8c8c8c" stroke-width="1"/><path d="M1,33 L13.5,20.5" stroke="#2a2a2a" stroke-width="1.6"/><circle cx="14" cy="20" r="2.6" fill="#2a2a2a"/><path d="M20,9.5 L26.5,3 L33,9.5 L26,15.5 Z" fill="#ff6b5a" transform="translate(0.5,-1.5)"/></svg>
<svg style="left:26px;top:559px" width="40" height="38" viewBox="0 0 40 38"><rect x="1.4" y="1.4" width="27.5" height="27.5" fill="#232e30" stroke="#fff" stroke-width="2.4"/><path d="M38,28 L38,37 L29,37 Z" fill="#fff"/></svg>
<svg style="left:24px;top:612px" width="35" height="29" viewBox="0 0 35 29"><rect x="1.3" y="1.3" width="32" height="25.5" fill="#222" stroke="#fff" stroke-width="2.2"/><path d="M1.5,1.5 L33,26.5 M33,1.5 L1.5,26.5" stroke="#c4c4c4" stroke-width="1.2"/></svg>
<svg style="left:24px;top:662px" width="34.4" height="34.4" viewBox="0 0 34 34"><circle cx="17" cy="17" r="15.6" fill="#222" stroke="#fff" stroke-width="2.2"/><path d="M6,6 L28,28 M28,6 L6,28" stroke="#fff" stroke-width="1.7"/></svg>
<svg style="left:24px;top:717px" width="35" height="29" viewBox="0 0 35 29"><defs><linearGradient id="imgg" x1="0" y1="0" x2="0" y2="1"><stop offset="0" stop-color="#4f9fdc"/><stop offset="1" stop-color="#2b78bd"/></linearGradient></defs><rect x="0.8" y="0.8" width="33" height="26.5" rx="3" fill="url(#imgg)"/><path d="M0.8,19 C8,14 14,21 22,16.5 C27,14 31,15 33.8,17 L33.8,24 Q33.8,27.3 30.5,27.3 L4,27.3 Q0.8,27.3 0.8,24 Z" fill="#1c4f80"/><path d="M0.8,21.5 C9,18 15,24 24,19.5 C28,18 32,18.5 33.8,19.5" fill="none" stroke="#e8f2fa" stroke-width="1.5"/><circle cx="26.5" cy="7.5" r="2.6" fill="#f3f3f3"/><path d="M5.5,11 a3,3 0 0 1 5,-2.6 a3.4,3.4 0 0 1 6.2,1 a2,2 0 0 1 0.5,3.2 L6.5,12.6 a1.8,1.8 0 0 1 -1,-1.6 Z" fill="#f3f3f3"/></svg>
<svg style="left:24px;top:767px" width="34.4" height="34.4" viewBox="0 0 34 34"><path d="M1.5,1.5 L19,1.5 L19,20 L1.5,20 Z" fill="#2a2a2a" stroke="#e4e4a0" stroke-width="1.8"/><path d="M15,13 L32.5,13 L32.5,32.5 L15,32.5 Z" fill="#2a2a2a" stroke="#e4e4a0" stroke-width="1.8"/><path d="M4,5 h7 M4,8 h7 M4,11 h7 M4,14 h7 M4,17 h7" stroke="#e4e4a0" stroke-width="1.3"/><path d="M24,17 h6 M24,20 h6 M24,23 h6 M24,26 h6 M24,29 h6" stroke="#e4e4a0" stroke-width="1.3"/><path d="M13,4 L21,4 L21,14 Z M13,28 L21,28 L13,17 Z" fill="#8fae2e"/></svg>
<div class="a" style="left:13px;top:822px;width:56px;height:2px;background:#6c6c6c;"></div>
<svg style="left:24px;top:845.5px" width="33" height="33" viewBox="0 0 34 34"><path d="M8,1 L8,26 L33,26 M1,8 L26,8 L26,33" fill="none" stroke="#fff" stroke-width="3"/><path d="M4,30 L30,4" stroke="#fff" stroke-width="2"/></svg>
<div class="a" style="left:13px;top:900.5px;width:56px;height:2px;background:#6c6c6c;"></div>
<svg style="left:24px;top:924px" width="34.4" height="34.4" viewBox="0 0 34 34"><defs><linearGradient id="gtg" x1="0" y1="0" x2="1" y2="0"><stop offset="0" stop-color="#2f9be0"/><stop offset="0.45" stop-color="#8fc8e8"/><stop offset="1" stop-color="#f3dfa0"/></linearGradient><linearGradient id="gtg2" x1="0" y1="0" x2="1" y2="0"><stop offset="0" stop-color="#2f9be0"/><stop offset="0.5" stop-color="#bcd8e0"/><stop offset="1" stop-color="#f0c8a0"/></linearGradient></defs><g transform="rotate(-40 17 17)"><rect x="5" y="4.5" width="24" height="10" rx="2.5" fill="url(#gtg2)"/><rect x="5" y="19.5" width="24" height="10" rx="2.5" fill="url(#gtg)"/></g><path d="M5,29.5 L29.5,5" stroke="#fff" stroke-width="2.2"/><circle cx="4.6" cy="29.8" r="3" fill="#333" stroke="#fff" stroke-width="1.8"/><circle cx="29.8" cy="4.6" r="3" fill="#333" stroke="#fff" stroke-width="1.8"/></svg>
<svg style="left:24px;top:977.5px" width="34.4" height="34.4" viewBox="0 0 34 34"><path d="M8.5,2 C7,13 10,21.5 17,21.5 C24,21.5 27,13 25.5,2" fill="#2c4a66" stroke="#f2f2f2" stroke-width="2.2" stroke-linecap="round"/><path d="M10.3,6.5 L23.7,6.5 C24,13.5 21.5,19.6 17,19.6 C12.5,19.6 10,13.5 10.3,6.5 Z" fill="#3d8fd0"/><path d="M17,7 L17,19.4 C20,19 22.3,14 22.4,7 Z" fill="#74b6e6" opacity="0.8"/><path d="M17,21.5 L17,31 M8.5,32.2 C11.5,30.4 22.5,30.4 25.5,32.2" fill="none" stroke="#f2f2f2" stroke-width="2.2" stroke-linecap="round"/></svg>
<svg style="left:24px;top:1028px" width="42" height="42" viewBox="0 0 42 42"><path d="M2,33 L20,15 L23.5,18.5 L5.5,36.5 Z" fill="#d8d8d8" stroke="#8a8a8a" stroke-width="0.8"/><path d="M19,11 L27,19 L30,16 L22,8 Z" fill="#555"/><ellipse cx="27.5" cy="9.5" rx="7" ry="8.5" fill="#c98a6a" transform="rotate(40 27.5 9.5)"/><path d="M41,31 L41,40 L32,40 Z" fill="#fff"/></svg>
<div class="a" style="left:13px;top:1084.5px;width:56px;height:2px;background:#6c6c6c;"></div>
<div class="a" style="left:15px;top:1100px;width:53px;height:51px;background:#1e1e1e;border-radius:6px;"></div>
<svg style="left:27px;top:1108px" width="30" height="36" viewBox="0 0 30 36"><path d="M6.5,20 L6.5,7 a2.2,2.2 0 0 1 4.4,0 L10.9,16 L10.9,4 a2.2,2.2 0 0 1 4.4,0 L15.3,16 L15.3,5 a2.2,2.2 0 0 1 4.4,0 L19.7,17.5 L19.7,9 a2.1,2.1 0 0 1 4.2,0 L23.9,22 L25.6,18.6 a2.3,2.3 0 0 1 4,2 L25,30 C23,34 19,35 15,35 C9,35 6,31 4.5,27 L1,18.5 a2.2,2.2 0 0 1 4,-1.5 Z" fill="#f4d8c0" stroke="#f9e8da" stroke-width="0.8"/></svg>
<svg style="left:23px;top:1160px" width="37" height="36" viewBox="0 0 37 36"><path d="M3.5,32 L10.5,25" stroke="#d9a470" stroke-width="6" stroke-linecap="round"/><path d="M9.5,26 L13,22.5" stroke="#f2f2f2" stroke-width="4.5"/><circle cx="22" cy="14.5" r="11.2" fill="#8fd2f8" stroke="#f0f0f0" stroke-width="4"/><path d="M15.5,11.5 a7.5,7.5 0 0 1 7,-4.8" fill="none" stroke="#dbf2ff" stroke-width="2"/></svg>
<svg style="left:22px;top:9px" width="37.5" height="37.5" viewBox="0 0 45 45"><defs><linearGradient id="pubg" x1="1" y1="0" x2="0" y2="1"><stop offset="0" stop-color="#ffa865"/><stop offset="1" stop-color="#ff8647"/></linearGradient><linearGradient id="desg" x1="1" y1="0" x2="0" y2="1"><stop offset="0" stop-color="#a8cdd3"/><stop offset="1" stop-color="#7ea5b8"/></linearGradient><linearGradient id="phog" x1="1" y1="0" x2="0" y2="1"><stop offset="0" stop-color="#dcc3df"/><stop offset="1" stop-color="#b79dc4"/></linearGradient></defs><rect width="45" height="45" rx="5.5" fill="#b5232f"/><clipPath id="pubc22"><path d="M17,4.5 L40.5,4.5 L40.5,40.5 L4.5,40.5 L4.5,26 Z"/></clipPath><g clip-path="url(#pubc22)"><rect width="45" height="45" fill="url(#pubg)"/><path d="M12,-2 L36,42 M19.5,-2 L43.5,42 M27,-2 L51,42 M4.5,-2 L28.5,42 M-3,-2 L21,42" stroke="#b5232f" stroke-width="1.9"/></g></svg>
<div class="a" style="left:38px;top:71px;width:63px;height:64px;background:#2a2a2a;border-radius:5px;"></div>
<svg style="left:47px;top:80.5px" width="45" height="45" viewBox="0 0 45 45"><defs><linearGradient id="pubg" x1="1" y1="0" x2="0" y2="1"><stop offset="0" stop-color="#ffa865"/><stop offset="1" stop-color="#ff8647"/></linearGradient><linearGradient id="desg" x1="1" y1="0" x2="0" y2="1"><stop offset="0" stop-color="#a8cdd3"/><stop offset="1" stop-color="#7ea5b8"/></linearGradient><linearGradient id="phog" x1="1" y1="0" x2="0" y2="1"><stop offset="0" stop-color="#dcc3df"/><stop offset="1" stop-color="#b79dc4"/></linearGradient></defs><rect width="45" height="45" rx="5.5" fill="#b5232f"/><clipPath id="pubc47"><path d="M17,4.5 L40.5,4.5 L40.5,40.5 L4.5,40.5 L4.5,26 Z"/></clipPath><g clip-path="url(#pubc47)"><rect width="45" height="45" fill="url(#pubg)"/><path d="M12,-2 L36,42 M19.5,-2 L43.5,42 M27,-2 L51,42 M4.5,-2 L28.5,42 M-3,-2 L21,42" stroke="#b5232f" stroke-width="1.9"/></g></svg>
<div class="a" style="left:111px;top:72px;width:1.5px;height:62px;background:#262626;"></div>
<svg style="left:131px;top:80.5px" width="45" height="45" viewBox="0 0 45 45"><defs><linearGradient id="pubg" x1="1" y1="0" x2="0" y2="1"><stop offset="0" stop-color="#ffa865"/><stop offset="1" stop-color="#ff8647"/></linearGradient><linearGradient id="desg" x1="1" y1="0" x2="0" y2="1"><stop offset="0" stop-color="#a8cdd3"/><stop offset="1" stop-color="#7ea5b8"/></linearGradient><linearGradient id="phog" x1="1" y1="0" x2="0" y2="1"><stop offset="0" stop-color="#dcc3df"/><stop offset="1" stop-color="#b79dc4"/></linearGradient></defs><rect width="45" height="45" rx="5.5" fill="#4f6680"/><path d="M22,4.5 L40.5,4.5 L40.5,40.5 L4.5,40.5 L4.5,27 Z" fill="url(#desg)"/><path d="M22,4.5 L11.5,28 L19,40.5 M11.5,28 L40.5,28 M19.5,14 L27,28" fill="none" stroke="#4f6680" stroke-width="2.2"/></svg>
<div class="a" style="left:195.5px;top:72px;width:1.5px;height:62px;background:#262626;"></div>
<svg style="left:216px;top:80.5px" width="45" height="45" viewBox="0 0 45 45"><defs><linearGradient id="pubg" x1="1" y1="0" x2="0" y2="1"><stop offset="0" stop-color="#ffa865"/><stop offset="1" stop-color="#ff8647"/></linearGradient><linearGradient id="desg" x1="1" y1="0" x2="0" y2="1"><stop offset="0" stop-color="#a8cdd3"/><stop offset="1" stop-color="#7ea5b8"/></linearGradient><linearGradient id="phog" x1="1" y1="0" x2="0" y2="1"><stop offset="0" stop-color="#dcc3df"/><stop offset="1" stop-color="#b79dc4"/></linearGradient></defs><rect width="45" height="45" rx="5.5" fill="#7d6e92"/><path d="M14,4.5 L40.5,4.5 L40.5,40.5 L4.5,40.5 L4.5,26 Z" fill="url(#phog)"/><path d="M14,4.5 L25,22 M40.5,4.5 L28,27 M40.5,30 L20,30 M27,40.5 L17,23 M4.5,40.5 L17,19 M10,13 L32,13" fill="none" stroke="#7d6e92" stroke-width="2"/></svg>
<div class="a" style="left:3693px;top:30px;width:18px;height:6px;background:#f4f4f4;"></div>
<svg style="left:3747px;top:18px" width="20" height="20" viewBox="0 0 20 20"><path d="M5,5 V1.2 H18.3 V13.5 H14" fill="none" stroke="#f4f4f4" stroke-width="2.4"/><rect x="1.2" y="6.2" width="12.3" height="11.6" fill="none" stroke="#f4f4f4" stroke-width="2.4"/></svg>
<svg style="left:3802px;top:19px" width="20" height="17" viewBox="0 0 20 17"><path d="M1.5,1 L18.5,16 M18.5,1 L1.5,16" stroke="#f4f4f4" stroke-width="3"/></svg>
<svg style="left:3798px;top:220px" width="16" height="14" viewBox="0 0 16 14"><path d="M1.5,1.2 L14,12.5 M14,1.2 L1.5,12.5" stroke="#f4f4f4" stroke-width="2.4"/></svg>
<svg style="left:215px;top:167px" width="16" height="12" viewBox="0 0 16 12"><path d="M1.5,2 L8,8.8 L14.5,2" fill="none" stroke="#f2f2f2" stroke-width="2.3"/></svg>
<svg style="left:822px;top:167px" width="15" height="11" viewBox="0 0 15 11"><path d="M1.5,2 L7.5,8.2 L13.5,2" fill="none" stroke="#f2f2f2" stroke-width="2.2"/></svg>
<svg style="left:475px;top:167px" width="14" height="21" viewBox="0 0 14 21"><path d="M7,1 L12.6,7.5 L12.6,18.5 Q12.6,20 11,20 L3,20 Q1.4,20 1.4,18.5 L1.4,7.5 Z" fill="#e6e6e6" stroke="#fff" stroke-width="1"/></svg>
<div class="a" style="left:97px;top:221px;width:2px;height:15px;background:#9a9a9a;"></div><div class="a" style="left:103px;top:221px;width:2px;height:15px;background:#9a9a9a;"></div>
<div class="a" style="left:902px;top:218.0px;width:19px;height:4px;background:#d8d8d8;"></div>
<div class="a" style="left:902px;top:225.5px;width:19px;height:4px;background:#d8d8d8;"></div>
<div class="a" style="left:902px;top:233.0px;width:19px;height:4px;background:#d8d8d8;"></div>
<svg style="left:92px;top:272px" width="15" height="12" viewBox="0 0 15 12"><path d="M1.5,2.5 L7.5,9 L13.5,2.5" fill="none" stroke="#f2f2f2" stroke-width="2"/></svg>
<svg style="left:93px;top:2083px" width="13" height="16" viewBox="0 0 13 16"><path d="M2,1.8 L10.5,8 L2,14.2" fill="none" stroke="#f2f2f2" stroke-width="2"/></svg>
<svg style="left:832px;top:264px" width="26" height="30" viewBox="0 0 26 30"><path d="M12,3.5 L1.2,3.5 L1.2,28.5 L20,28.5 L20,12" fill="none" stroke="#f2f2f2" stroke-width="1.9"/><path d="M13.5,5.5 h9 M18,1 v9" stroke="#f2f2f2" stroke-width="1.9"/></svg><svg style="left:832px;top:264px" width="26" height="30" viewBox="0 0 26 30"><path d="M4.5,14 h12 M4.5,18 h12 M4.5,22 h12 M4.5,25.5 h12" stroke="#f2f2f2" stroke-width="1.5"/></svg>
<svg style="left:867.5px;top:264px" width="26" height="30" viewBox="0 0 26 30"><path d="M7,4 L7,1.2 L24.5,1.2 L24.5,23 L21,23" fill="none" stroke="#f2f2f2" stroke-width="1.8"/><rect x="1.2" y="5" width="18.5" height="23.5" fill="none" stroke="#f2f2f2" stroke-width="1.9"/><path d="M4.5,10 h12 M4.5,14 h12 M4.5,18 h12 M4.5,22 h12" stroke="#f2f2f2" stroke-width="1.5"/></svg>
<svg style="left:906px;top:264px" width="24" height="30" viewBox="0 0 24 30"><path d="M1,6 h22 M8,5.5 v-3.2 h8 v3.2" fill="none" stroke="#f2f2f2" stroke-width="1.9"/><path d="M3.2,6.5 L3.2,26 Q3.2,28.6 6,28.6 L18,28.6 Q20.8,28.6 20.8,26 L20.8,6.5" fill="none" stroke="#f2f2f2" stroke-width="1.9"/><path d="M9,11 v13 M15,11 v13" stroke="#f2f2f2" stroke-width="1.9"/></svg>
<svg style="left:779px;top:2078px" width="30" height="30" viewBox="0 0 30 30"><path d="M1,2.5 h28 M1,8 h8 M21,8 h8 M1,13.5 h8 M21,13.5 h8 M1,19 h8 M21,19 h8" stroke="#f2f2f2" stroke-width="2"/><path d="M10.5,5 L19.5,5 L19.5,27.5 L15,22.5 L10.5,27.5 Z" fill="#f2f2f2"/></svg>
<svg style="left:832px;top:2078px" width="26" height="30" viewBox="0 0 26 30"><path d="M12,3.5 L1.2,3.5 L1.2,28.5 L20,28.5 L20,12" fill="none" stroke="#f2f2f2" stroke-width="1.9"/><path d="M13.5,5.5 h9 M18,1 v9" stroke="#f2f2f2" stroke-width="1.9"/></svg>
<svg style="left:867.5px;top:2078px" width="26" height="30" viewBox="0 0 26 30"><path d="M7,4 L7,1.2 L24.5,1.2 L24.5,23 L21,23" fill="none" stroke="#6a6a6a" stroke-width="1.8"/><rect x="1.2" y="5" width="18.5" height="23.5" fill="none" stroke="#6a6a6a" stroke-width="1.9"/></svg>
<svg style="left:906px;top:2078px" width="24" height="30" viewBox="0 0 24 30"><path d="M1,6 h22 M8,5.5 v-3.2 h8 v3.2" fill="none" stroke="#6a6a6a" stroke-width="1.9"/><path d="M3.2,6.5 L3.2,26 Q3.2,28.6 6,28.6 L18,28.6 Q20.8,28.6 20.8,26 L20.8,6.5" fill="none" stroke="#6a6a6a" stroke-width="1.9"/><path d="M9,11 v13 M15,11 v13" stroke="#6a6a6a" stroke-width="1.9"/></svg>
<svg style="left:912px;top:316px" width="14" height="13" viewBox="0 0 14 13"><path d="M7,0.5 L13.5,12.5 L0.5,12.5 Z" fill="#7e7e7e"/></svg>
<svg style="left:912px;top:2048px" width="14" height="13" viewBox="0 0 14 13"><path d="M7,12.5 L13.5,0.5 L0.5,0.5 Z" fill="#7e7e7e"/></svg>
<svg style="left:3807px;top:263px" width="14" height="13" viewBox="0 0 14 13"><path d="M7,0.5 L13.5,12.5 L0.5,12.5 Z" fill="#7e7e7e"/></svg>
<svg style="left:3807px;top:2056px" width="14" height="13" viewBox="0 0 14 13"><path d="M7,12.5 L13.5,0.5 L0.5,0.5 Z" fill="#7e7e7e"/></svg>
<svg style="left:956px;top:2089px" width="13" height="14" viewBox="0 0 13 14"><path d="M0.5,7 L12.5,0.5 L12.5,13.5 Z" fill="#7e7e7e"/></svg>
<svg style="left:3773px;top:2089px" width="13" height="14" viewBox="0 0 13 14"><path d="M12.5,7 L0.5,0.5 L0.5,13.5 Z" fill="#7e7e7e"/></svg>
<svg style="left:12px;top:2124px" width="22" height="22" viewBox="0 0 22 22"><rect x="1" y="1" width="2.6" height="20" fill="#f2f2f2"/><path d="M20.5,1 L20.5,21 L5,11 Z" fill="#f2f2f2"/></svg>
<svg style="left:49px;top:2124px" width="18" height="22" viewBox="0 0 18 22"><path d="M16.5,1 L16.5,21 L1,11 Z" fill="#f2f2f2"/></svg>
<svg style="left:231px;top:2124px" width="18" height="22" viewBox="0 0 18 22"><path d="M1.5,1 L1.5,21 L17,11 Z" fill="#f2f2f2"/></svg>
<svg style="left:263px;top:2124px" width="22" height="22" viewBox="0 0 22 22"><rect x="18.4" y="1" width="2" height="20" fill="#8a8a8a"/><path d="M1.5,1 L1.5,21 L16.5,11 Z" fill="#8a8a8a"/></svg>
<svg style="left:300px;top:2121px" width="25" height="29" viewBox="0 0 25 29"><path d="M6,3.5 L6,1 L23.5,1 L23.5,25 L20,25" fill="none" stroke="#f2f2f2" stroke-width="1.8"/><rect x="1" y="4" width="18.5" height="23.5" fill="none" stroke="#f2f2f2" stroke-width="1.8"/><path d="M4,9 h12.5 M4,13 h12.5 M4,17 h12.5 M4,21 h12.5 M4,24.5 h12.5" stroke="#f2f2f2" stroke-width="1.6"/></svg>
<svg style="left:350px;top:2121px" width="26" height="29" viewBox="0 0 26 29"><path d="M6,3.5 L6,1 L24.5,1 L24.5,25.5 L21,25.5" fill="none" stroke="#3fe08f" stroke-width="1.8"/><rect x="1" y="4" width="19.5" height="23.5" rx="1.5" fill="#3a3a3a" stroke="#3fe08f" stroke-width="1.9"/><rect x="4" y="7.5" width="13.5" height="4.4" fill="#3fe08f"/><rect x="4" y="14" width="13.5" height="4.4" fill="#3fe08f"/><rect x="4" y="20.5" width="13.5" height="4.4" fill="#3fe08f"/></svg>
<div class="a" style="left:2458px;top:253px;width:2px;height:1825px;background:#8a8f93;"></div>
<div class="a" style="left:2460px;top:253px;width:1337px;height:1825px;background:#fff;"></div>
<svg style="left:2460px;top:253px" width="1337" height="1825" viewBox="2460 253 1337 1825"><path d="M3000.2,437.5 A40.8,40.8 0 0 1 3055,457.1 A40.8,40.8 0 0 1 3110.2,437.5 L3110.2,501.8 A40.8,40.8 0 0 1 3055,482.9 A40.8,40.8 0 0 1 3000.2,501.8 Z" fill="none" stroke="#000" stroke-width="1.5"/><defs>
<linearGradient id="gy" x1="0" y1="0" x2="1" y2="1"><stop offset="0" stop-color="#e9d23a"/><stop offset="0.6" stop-color="#e2c72c"/><stop offset="1" stop-color="#d5b820"/></linearGradient>
<linearGradient id="gb" x1="0" y1="0" x2="1" y2="0"><stop offset="0" stop-color="#4f91a8"/><stop offset="0.22" stop-color="#66a3b7"/><stop offset="0.5" stop-color="#82bccb"/><stop offset="0.78" stop-color="#66a3b7"/><stop offset="1" stop-color="#4b8da5"/></linearGradient>
<linearGradient id="gp" x1="0" y1="0" x2="0" y2="1"><stop offset="0" stop-color="#ee8a8a"/><stop offset="0.6" stop-color="#f09593"/><stop offset="1" stop-color="#ea8080"/></linearGradient>
<linearGradient id="gr" x1="0" y1="0" x2="0.3" y2="1"><stop offset="0" stop-color="#dd2a2e"/><stop offset="0.5" stop-color="#d01c22"/><stop offset="1" stop-color="#bf1218"/></linearGradient>
<linearGradient id="gbe" x1="0" y1="0" x2="1" y2="1"><stop offset="0" stop-color="#e2ddd4"/><stop offset="0.5" stop-color="#dbd6cc"/><stop offset="1" stop-color="#d0cabe"/></linearGradient>
<filter id="bblur" x="-40%" y="-40%" width="180%" height="180%"><feGaussianBlur stdDeviation="14"/></filter><pattern id="snake" width="7" height="4.4" patternUnits="userSpaceOnUse"><path d="M0,2.2 Q1.75,0 3.5,2.2 T7,2.2" stroke="#3f7f96" stroke-width="0.7" fill="none" opacity="0.55"/></pattern>
</defs>
<path d="M2885.7,752.0 L2885.7,717.5 A41.8,60.5 0 0 1 2969.2,717.5 L2969.2,752.0" fill="none" stroke="#dcc02a" stroke-width="12.5" stroke-linecap="butt"/><path d="M2885.7,752.0 L2885.7,717.5 A41.8,60.5 0 0 1 2969.2,717.5 L2969.2,752.0" fill="none" stroke="#efdc55" stroke-width="4.4" stroke-linecap="butt" opacity="0.55" transform="translate(-1.5,-1.5)"/>
<path d="M2822,750 L3032,750 L3041,905 Q3041,909 3037,909 L2818,909 Q2813,909 2813.5,905 Z" fill="url(#gy)"/>
<path d="M2822,750 L2826,750 L2818,906 L2813.5,905 Z" fill="#c9ab1f"/><path d="M3028,750 L3032,750 L3041,905 L3036,906 Z" fill="#c9ab1f"/>
<path d="M2815,904 L3039,904" stroke="#b89a18" stroke-width="1"/><path d="M2823,752.5 L3031,752.5" stroke="#bfa21c" stroke-width="0.8"/>
<path d="M2878,748 L2893,748 L2894,768 L2900,796 Q2900,799 2897,799 L2876,799 Q2873,799 2873,796 L2877,768 Z" fill="#e0c42b" stroke="#a88c14" stroke-width="0.8"/>
<rect x="2875" y="757" width="21" height="9" rx="3" fill="none" stroke="#d9d4b0" stroke-width="1.6"/>
<path d="M2962,748 L2976,748 L2977,768 L2981,796 Q2981,799 2978,799 L2959,799 Q2956,799 2956,796 L2961,768 Z" fill="#e0c42b" stroke="#a88c14" stroke-width="0.8"/>
<rect x="2959" y="757" width="20" height="9" rx="3" fill="none" stroke="#d9d4b0" stroke-width="1.6"/>
<path d="M3296.9,756.0 L3296.9,726.9 A46.0,66.6 0 0 1 3388.8,726.9 L3388.8,756.0" fill="none" stroke="#3f8299" stroke-width="12.5" stroke-linecap="butt"/><path d="M3296.9,756.0 L3296.9,726.9 A46.0,66.6 0 0 1 3388.8,726.9 L3388.8,756.0" fill="none" stroke="#6aa9bd" stroke-width="4.4" stroke-linecap="butt" opacity="0.55" transform="translate(-1.5,-1.5)"/>
<path d="M3246.5,754 L3440,754 L3447.5,889 Q3447.5,893.5 3443,893.5 L3243,893.5 Q3238,893.5 3238.3,889 Z" fill="url(#gb)"/>
<path d="M3246.5,754 L3440,754 L3447.5,889 Q3447.5,893.5 3443,893.5 L3243,893.5 Q3238,893.5 3238.3,889 Z" fill="url(#snake)"/>
<path d="M3256,752 Q3343,745 3432,752" fill="none" stroke="#cdb98a" stroke-width="1.2" opacity="0.8"/>
<path d="M3240,891 L3446,891" stroke="#3a7a92" stroke-width="1.5"/>
<path d="M3290.8,752 L3305.8,752 L3305.8,766 L3313.8,794 L3298.3,812.5 L3284.3,795.5 L3290.8,766 Z" fill="#3c8098" stroke="#2a6076" stroke-width="1"/>
<rect x="3288.8" y="754" width="2.2" height="11" fill="#d8c9a0"/><rect x="3305.6000000000004" y="754" width="2.2" height="11" fill="#d8c9a0"/>
<path d="M3383.0,752 L3398.0,752 L3398.0,766 L3406.0,794 L3390.5,812.5 L3376.5,795.5 L3383.0,766 Z" fill="#3c8098" stroke="#2a6076" stroke-width="1"/>
<rect x="3381.0" y="754" width="2.2" height="11" fill="#d8c9a0"/><rect x="3397.8" y="754" width="2.2" height="11" fill="#d8c9a0"/>
<path d="M2886.5,1188.0 L2886.5,1154.9 A41.2,59.7 0 0 1 2968.9,1154.9 L2968.9,1188.0" fill="none" stroke="#2d2d30" stroke-width="11" stroke-linecap="butt"/><path d="M2886.5,1188.0 L2886.5,1154.9 A41.2,59.7 0 0 1 2968.9,1154.9 L2968.9,1188.0" fill="none" stroke="#6a6a70" stroke-width="3.8" stroke-linecap="butt" opacity="0.55" transform="translate(-1.3,-1.3)"/>
<clipPath id="cs"><path d="M2828.3,1197.3 L3024,1197.3 L3008,1318 Q3006.5,1330 2996,1330 L2858,1327 Q2848,1327 2846,1317 Z"/></clipPath>
<g clip-path="url(#cs)"><rect x="2820" y="1190" width="215" height="145" fill="#d9d9dd"/><polygon points="2828,1197 2897.7,1197.3 3014,1296 3010,1335 2961.8,1327 2829,1219" fill="#3f6198"/><polygon points="2829,1219 2961.8,1328 2961.8,1335 2820,1335 2820,1212" fill="#4a4c52"/><path d="M2830,1217 L2964,1328" stroke="#1c1c1e" stroke-width="7"/><path d="M2868,1252 L2950,1317" stroke="#b8b8bc" stroke-width="2.6" stroke-dasharray="1.2 1"/><polygon points="2862,1250 2872,1253 2868,1275 2858,1272" fill="#55565a" stroke="#9a9a9e" stroke-width="0.7"/><rect x="3000" y="1190" width="30" height="145" fill="#c2c2c8" opacity="0.5"/></g>
<path d="M2828,1196.5 L3024,1196.5" stroke="#222" stroke-width="2"/>
<rect x="2881" y="1183" width="12" height="51" rx="5" fill="#2a2a2d"/><rect x="2878.5" y="1198" width="17" height="12" rx="1" fill="none" stroke="#8d8d92" stroke-width="2"/>
<rect x="2962.5" y="1183" width="12" height="51" rx="5" fill="#2a2a2d"/><rect x="2960.0" y="1198" width="17" height="12" rx="1" fill="none" stroke="#8d8d92" stroke-width="2"/>
<path d="M3292.1,1196.0 L3292.1,1160.6 A48.7,70.6 0 0 1 3389.5,1160.6 L3389.5,1196.0" fill="none" stroke="#ee8c8c" stroke-width="12.4" stroke-linecap="butt"/><path d="M3292.1,1196.0 L3292.1,1160.6 A48.7,70.6 0 0 1 3389.5,1160.6 L3389.5,1196.0" fill="none" stroke="#f7b0ac" stroke-width="4.3" stroke-linecap="butt" opacity="0.55" transform="translate(-1.5,-1.5)"/>
<path d="M3256,1185.3 L3438,1185.3 L3437,1323 Q3437,1326.5 3433,1326.5 L3257,1326.5 Q3252.5,1326.5 3252.8,1322 Z" fill="url(#gp)"/>
<path d="M3256,1185.3 L3271.5,1186.3 C3270,1230 3266,1270 3258,1312 L3256,1326 L3252.8,1322 Z" fill="#e57c7c"/>
<path d="M3424.5,1185.3 L3438,1185.3 L3437,1323 L3435,1314 C3431,1270 3427,1230 3424.5,1185.3 Z" fill="#e57c7c"/>
<path d="M3271.5,1186.3 C3270,1230 3266,1270 3258,1312 L3255,1325" stroke="#2c2f38" stroke-width="1.3" fill="none"/>
<path d="M3424.5,1185.3 C3427,1230 3431,1270 3436,1314 L3436.5,1324" stroke="#2c2f38" stroke-width="1.3" fill="none"/>
<path d="M3254,1324.5 L3290,1321" stroke="#2c2f38" stroke-width="1.2"/>
<path d="M3289,1192 Q3296.85,1184 3304.7,1192 L3307.7,1215 L3303.7,1248 Q3303.7,1251 3300.7,1251 L3293,1251 Q3290,1251 3290,1248 L3286,1215 Z" fill="#ef8f8e" stroke="#4a3038" stroke-width="0.8"/>
<circle cx="3296.85" cy="1214.5" r="2.6" fill="#e9d8d0" stroke="#b89088" stroke-width="0.6"/>
<path d="M3383,1192 Q3390.4,1184 3397.8,1192 L3400.8,1215 L3396.8,1248 Q3396.8,1251 3393.8,1251 L3387,1251 Q3384,1251 3384,1248 L3380,1215 Z" fill="#ef8f8e" stroke="#4a3038" stroke-width="0.8"/>
<circle cx="3390.4" cy="1214.5" r="2.6" fill="#e9d8d0" stroke="#b89088" stroke-width="0.6"/>
<path d="M2884.8,1617.0 L2884.8,1587.4 A40.5,45.4 0 0 1 2965.9,1587.4 L2965.9,1617.0" fill="none" stroke="#d8252a" stroke-width="13.5" stroke-linecap="butt"/><path d="M2884.8,1617.0 L2884.8,1587.4 A40.5,45.4 0 0 1 2965.9,1587.4 L2965.9,1617.0" fill="none" stroke="#ec5a58" stroke-width="4.7" stroke-linecap="butt" opacity="0.55" transform="translate(-1.6,-1.6)"/>
<path d="M2815,1762 L3038,1762 Q3041,1762 3041.5,1758 L3043.6,1690 C3043,1650 3030,1622 3006,1612 C2980,1606 2960,1606.5 2935,1606.5 L2895,1606.5 C2870,1607 2852,1610 2838,1617 C2822,1628 2812,1650 2811.7,1690 L2812.5,1758 Q2812.5,1762 2815,1762 Z" fill="url(#gr)"/>
<ellipse cx="2945" cy="1672" rx="75" ry="48" fill="#ea5450" opacity="0.36" filter="url(#bblur)"/>
<path d="M2880,1606 L2975,1606" stroke="#c8a86a" stroke-width="1.2"/>
<path d="M2873,1614 L2880.5,1626 L2880.5,1642 L2885,1642 L2885,1626 L2892,1614 L2889,1612 L2882.8,1622 L2876,1612 Z" fill="#1f1a18" stroke="#d9c79a" stroke-width="1"/>
<path d="M2956.5,1614 L2964.0,1626 L2964.0,1642 L2968.5,1642 L2968.5,1626 L2975.5,1614 L2972.5,1612 L2966.3,1622 L2959.5,1612 Z" fill="#1f1a18" stroke="#d9c79a" stroke-width="1"/>
<rect x="3041.5" y="1686" width="4.5" height="22" rx="1" fill="#d9c9a4"/><rect x="3042" y="1668" width="2.5" height="20" fill="#cdbb90"/>
<path d="M3300,1584 C3303,1550 3318,1527 3334,1527 C3352,1527 3365,1552 3368.5,1584" fill="none" stroke="#d9d3c6" stroke-width="7"/>
<path d="M3352,1534 C3362,1548 3367,1566 3369.5,1584" fill="none" stroke="#8f8776" stroke-width="3.5"/>
<path d="M3231,1757 Q3229,1764 3240,1764 L3436,1764 Q3447,1764 3445.5,1755 L3438,1686 L3425.7,1634.6 C3424,1612 3415,1598 3400,1590 C3385,1583 3372,1580 3355,1579.7 L3320,1579.7 C3300,1580 3285,1584 3270,1592 C3254,1601 3247,1614 3244.5,1634.6 L3233,1707 Z" fill="url(#gbe)"/>
<path d="M3246,1634 C3300,1640 3380,1640 3424,1633 L3420,1641 C3380,1648 3300,1647 3252,1643 Z" fill="#ece9e2"/>
<path d="M3244,1632 C3300,1638 3385,1638 3426,1631" stroke="#c4bdb0" stroke-width="0.9" fill="none"/>
<rect x="3256" y="1644" width="5.5" height="36" rx="2" fill="#e9e5dc" stroke="#c9c2b4" stroke-width="0.6"/>
<rect x="3248.5" y="1678" width="11" height="27" rx="1.2" fill="#dccfae" stroke="#b8a880" stroke-width="0.7"/>
<rect x="3235" y="1626" width="5" height="38" rx="2" fill="#d9cdb0"/>
<circle cx="3299.5" cy="1589" r="4.2" fill="#5c5548" stroke="#cfc4a2" stroke-width="1.3"/><circle cx="3371.8" cy="1590" r="4.2" fill="#3c372f" stroke="#cfc4a2" stroke-width="1.3"/>
<path d="M3236,1700 C3238,1730 3236,1750 3234,1760 L3250,1763 C3242,1740 3242,1720 3246,1690 Z" fill="#c9c3b7" opacity="0.6"/></svg>
<div class="t" style="left:3133px;top:414.2px;font:400 63px/63px 'Liberation Serif',serif;color:#000;-webkit-text-stroke:0.7px #000;transform-origin:0 0;transform:scaleX(0.8642);">Diane</div>
<div class="t" style="left:3133px;top:463.4px;font:400 63px/63px 'Liberation Serif',serif;color:#000;-webkit-text-stroke:0.7px #000;transform-origin:0 0;transform:scaleX(0.8188);">Clayes</div>
<div class="t" style="left:2891.3px;top:940.9px;font:700 27px/27px 'Liberation Serif',serif;color:#111;letter-spacing:0.45px;">Chêne</div>
<div class="t" style="left:2887.2px;top:977.7px;font:400 22.5px/22.5px 'Liberation Serif',serif;color:#111;letter-spacing:0.07px;">4 colours</div>
<div class="t" style="left:2888.7px;top:1008.6px;font:400 25px/25px 'Liberation Serif',serif;color:#111;letter-spacing:-0.09px;">€875.99</div>
<div class="t" style="left:3315.3px;top:940.9px;font:700 27px/27px 'Liberation Serif',serif;color:#111;letter-spacing:0.14px;">Bête</div>
<div class="t" style="left:3299.8px;top:977.7px;font:400 22.5px/22.5px 'Liberation Serif',serif;color:#111;letter-spacing:-0.08px;">2 colours</div>
<div class="t" style="left:3301.2px;top:1008.6px;font:400 25px/25px 'Liberation Serif',serif;color:#111;letter-spacing:-0.29px;">€575.99</div>
<div class="t" style="left:2893.7px;top:1373.9px;font:700 27px/27px 'Liberation Serif',serif;color:#111;letter-spacing:0.06px;">Rayée</div>
<div class="t" style="left:2887.8px;top:1410.7px;font:400 22.5px/22.5px 'Liberation Serif',serif;color:#111;letter-spacing:-0.10px;">2 colours</div>
<div class="t" style="left:2888.2px;top:1441.6px;font:400 25px/25px 'Liberation Serif',serif;color:#111;letter-spacing:0.04px;">€425.99</div>
<div class="t" style="left:3311.8px;top:1373.9px;font:700 27px/27px 'Liberation Serif',serif;color:#111;letter-spacing:0.47px;">Bébé</div>
<div class="t" style="left:3299.0px;top:1410.7px;font:400 22.5px/22.5px 'Liberation Serif',serif;color:#111;letter-spacing:0.11px;">4 colours</div>
<div class="t" style="left:3301.2px;top:1441.6px;font:400 25px/25px 'Liberation Serif',serif;color:#111;letter-spacing:-0.28px;">€525.99</div>
<div class="t" style="left:2830.2px;top:1806.9px;font:700 27px/27px 'Liberation Serif',serif;color:#111;letter-spacing:0.40px;">Pomme magique</div>
<div class="t" style="left:2892.8px;top:1843.7px;font:400 22.5px/22.5px 'Liberation Serif',serif;color:#111;letter-spacing:-0.27px;">1 colour</div>
<div class="t" style="left:2886.1px;top:1874.6px;font:400 25px/25px 'Liberation Serif',serif;color:#111;letter-spacing:0.76px;">€750.00</div>
<div class="t" style="left:3273.5px;top:1806.9px;font:700 27px/27px 'Liberation Serif',serif;color:#111;letter-spacing:0.48px;">Notre reine</div>
<div class="t" style="left:3299.0px;top:1843.7px;font:400 22.5px/22.5px 'Liberation Serif',serif;color:#111;letter-spacing:0.11px;">4 colours</div>
<div class="t" style="left:3298.5px;top:1874.6px;font:400 25px/25px 'Liberation Serif',serif;color:#111;letter-spacing:0.62px;">€450.99</div>
<svg style="left:945px;top:253px" width="1513" height="1825" viewBox="945 253 1513 1825">
<defs>
<linearGradient id="bg" x1="0" y1="0" x2="1" y2="0"><stop offset="0" stop-color="#f60018"/><stop offset="0.5" stop-color="#f30016"/><stop offset="0.8" stop-color="#e80010"/><stop offset="1" stop-color="#ca0008"/></linearGradient>
<radialGradient id="vig" cx="2600" cy="2300" r="1500" gradientUnits="userSpaceOnUse"><stop offset="0" stop-color="#000" stop-opacity="0.36"/><stop offset="0.3" stop-color="#000" stop-opacity="0.24"/><stop offset="0.6" stop-color="#000" stop-opacity="0.13"/><stop offset="0.9" stop-color="#000" stop-opacity="0.04"/><stop offset="1" stop-color="#000" stop-opacity="0"/></radialGradient>
<filter id="b8" x="-30%" y="-30%" width="160%" height="160%"><feGaussianBlur stdDeviation="8"/></filter>
<filter id="b16" x="-30%" y="-30%" width="160%" height="160%"><feGaussianBlur stdDeviation="16"/></filter>
<filter id="b28" x="-40%" y="-40%" width="180%" height="180%"><feGaussianBlur stdDeviation="28"/></filter>
<filter id="b4" x="-30%" y="-30%" width="160%" height="160%"><feGaussianBlur stdDeviation="4"/></filter>
<linearGradient id="skA" x1="0" y1="0" x2="1" y2="0"><stop offset="0" stop-color="#e4a272"/><stop offset="0.3" stop-color="#fbd2ad"/><stop offset="0.68" stop-color="#f1b68a"/><stop offset="1" stop-color="#d28a5a"/></linearGradient>
<linearGradient id="skR" gradientUnits="userSpaceOnUse" x1="2060" y1="1020" x2="1960" y2="1230"><stop offset="0" stop-color="#f4c6a0"/><stop offset="0.35" stop-color="#f8d0ae"/><stop offset="0.75" stop-color="#e4a174"/><stop offset="1" stop-color="#c47f53"/></linearGradient>
<linearGradient id="skRf" gradientUnits="userSpaceOnUse" x1="2160" y1="1400" x2="1980" y2="1300"><stop offset="0" stop-color="#ecb083"/><stop offset="0.45" stop-color="#f6c9a4"/><stop offset="1" stop-color="#c88256"/></linearGradient>
<linearGradient id="skF" gradientUnits="userSpaceOnUse" x1="1400" y1="1380" x2="1360" y2="1530"><stop offset="0" stop-color="#fad2ae"/><stop offset="0.5" stop-color="#f4c29a"/><stop offset="1" stop-color="#d99466"/></linearGradient>
<linearGradient id="skN" gradientUnits="userSpaceOnUse" x1="1440" y1="800" x2="1680" y2="900"><stop offset="0" stop-color="#f3c19c"/><stop offset="0.4" stop-color="#fbdcc3"/><stop offset="0.75" stop-color="#f2bd97"/><stop offset="1" stop-color="#d9976a"/></linearGradient>
<linearGradient id="skH" gradientUnits="userSpaceOnUse" x1="1560" y1="560" x2="1760" y2="760"><stop offset="0" stop-color="#f6c8a6"/><stop offset="0.5" stop-color="#fbdcc4"/><stop offset="1" stop-color="#f0b892"/></linearGradient>
<linearGradient id="hair" gradientUnits="userSpaceOnUse" x1="1740" y1="430" x2="1470" y2="720"><stop offset="0" stop-color="#4a2d1f"/><stop offset="0.3" stop-color="#5a3a29"/><stop offset="0.6" stop-color="#3a2217"/><stop offset="1" stop-color="#27150d"/></linearGradient>
<linearGradient id="dress" gradientUnits="userSpaceOnUse" x1="1400" y1="850" x2="1700" y2="2077"><stop offset="0" stop-color="#2d211d"/><stop offset="0.4" stop-color="#2f2320"/><stop offset="1" stop-color="#231815"/></linearGradient>
<linearGradient id="lens1" gradientUnits="userSpaceOnUse" x1="1700" y1="530" x2="1700" y2="635"><stop offset="0" stop-color="#1c1218"/><stop offset="0.45" stop-color="#3a2a33"/><stop offset="1" stop-color="#a88a86"/></linearGradient>
<linearGradient id="lens2" gradientUnits="userSpaceOnUse" x1="1790" y1="596" x2="1790" y2="700"><stop offset="0" stop-color="#3a1418"/><stop offset="0.5" stop-color="#7a1a1c"/><stop offset="1" stop-color="#c82018"/></linearGradient>
<radialGradient id="pearl" cx="0.38" cy="0.32" r="0.75"><stop offset="0" stop-color="#ffffff"/><stop offset="0.55" stop-color="#f1eeea"/><stop offset="1" stop-color="#b9b2ac"/></radialGradient>
<linearGradient id="clg" gradientUnits="userSpaceOnUse" x1="1944" y1="1443" x2="1760" y2="1893"><stop offset="0" stop-color="#b90d16"/><stop offset="0.5" stop-color="#c40f18"/><stop offset="1" stop-color="#a90a12"/></linearGradient>
<linearGradient id="clhl" gradientUnits="userSpaceOnUse" x1="1830" y1="1560" x2="1960" y2="1710"><stop offset="0" stop-color="#ff4a3a" stop-opacity="0"/><stop offset="0.5" stop-color="#ff4a3a" stop-opacity="0.22"/><stop offset="1" stop-color="#ff4a3a" stop-opacity="0"/></linearGradient>
<pattern id="hex" width="13" height="22.5" patternUnits="userSpaceOnUse" patternTransform="translate(1760,1600) rotate(-41)">
<path d="M0,3.75 L6.5,0 L13,3.75 M0,3.75 L0,11.25 L6.5,15 L13,11.25 L13,3.75 M6.5,15 L6.5,22.5" fill="none" stroke="#ee3b2e" stroke-width="1.7"/></pattern>
<linearGradient id="shR" gradientUnits="userSpaceOnUse" x1="1850" y1="1140" x2="1850" y2="1475"><stop offset="0" stop-color="#4e0003"/><stop offset="0.38" stop-color="#860006"/><stop offset="0.8" stop-color="#c80009" stop-opacity="0.9"/><stop offset="1" stop-color="#e2000e" stop-opacity="0"/></linearGradient>
</defs>
<clipPath id="pc"><rect x="945" y="253" width="1513" height="1825"/></clipPath><g clip-path="url(#pc)">
<rect x="945" y="253" width="1513" height="1825" fill="url(#bg)"/>
<rect x="945" y="253" width="1513" height="1825" fill="url(#vig)"/>
<path d="M1780,1120 L1850,1100 L1960,1150 L2070,1235 L2040,1330 L1975,1418 L1940,1475 L1760,1475 L1720,1350 L1735,1285 L1770,1224 Z" fill="url(#shR)"/>
<ellipse cx="1175" cy="1585" rx="120" ry="92" fill="#5a0006" opacity="0.58" filter="url(#b28)"/>
<path d="M1185,1650 L1290,1620 L1310,2090 L1200,2090 Z" fill="#4a0004" opacity="0.7" filter="url(#b28)"/>
<path d="M1060,1080 L1130,1060 L1110,1460 L1050,1440 Z" fill="#9a0008" opacity="0.35" filter="url(#b28)"/>
<path d="M1930,1720 L2040,1660 L2110,1720 L2070,2090 L1990,2090 Z" fill="#5a0004" opacity="0.38" filter="url(#b28)"/>
<path d="M1430,600 L1470,560 L1500,760 L1440,830 L1400,800 Z" fill="#7a0006" opacity="0.25" filter="url(#b16)"/>
<path d="M1760,640 L1830,700 L1800,800 L1700,830 L1660,880 L1700,760 Z" fill="#8a0008" opacity="0.1" filter="url(#b16)"/>
<path d="M2230,1180 L2300,1250 L2200,1420 L2080,1520 L2120,1400 Z" fill="#8a0006" opacity="0.25" filter="url(#b28)"/>
<path d="M1501,690 L1496,748 L1475,795 L1440,828 L1417,852 L1400,870 L1440,1025 L1610,1025 L1665,890 L1640,883 L1644,865 L1649,818 L1651,799 L1698,795 L1722,785 L1740,740 L1700,690 Z" fill="url(#skN)"/>
<path d="M1540,760 C1580,800 1620,812 1652,800 L1648,830 C1600,850 1550,830 1500,780 Z" fill="#c98a5e" opacity="0.45" filter="url(#b8)"/>
<path d="M1600,900 C1590,940 1570,980 1540,1000 L1520,1005 C1545,970 1560,930 1565,880 Z" fill="#d59a70" opacity="0.5" filter="url(#b8)"/>
<path d="M1286,840 L1417,852 C1425,900 1445,950 1473,980 C1490,996 1505,1004 1519,1004 C1540,1006 1555,1003 1566,998 C1585,985 1596,968 1603,955 L1628,911 L1640,883 L1721,883 L1777,889 L1782,899 L1765,905 L1758,948 L1771,1042 L1780,1104 L1786,1132 L1794,1141 L1798,1162 L1780,1224 L1748,1286 C1738,1320 1738,1340 1739,1348 L1758,1395 L1773,1426 L1790,1480 L1850,1600 L1940,1736 L1964,1795 L1986,1873 L1998,1950 L2004,2003 L2015,2049 L2004,2068 L1985,2080 L1296,2080 L1282,1956 L1272,1816 L1272,1630 L1275,1518 L1252,1345 L1261,1286 L1280,1193 L1292,1100 L1292,1073 L1302,1010 L1314,917 L1311,874 Z" fill="url(#dress)"/>
<path d="M1300,1500 L1285,2080 L1420,2080 C1340,1900 1320,1700 1330,1520 Z" fill="#140c0a" opacity="0.55" filter="url(#b16)"/>
<path d="M1420,1180 C1520,1240 1640,1330 1740,1420 L1700,1440 C1600,1360 1500,1290 1400,1230 Z" fill="#100a08" opacity="0.4" filter="url(#b16)"/>
<path d="M1350,900 C1360,1000 1350,1100 1330,1200 L1380,1200 C1400,1100 1400,1000 1390,900 Z" fill="#3f302a" opacity="0.5" filter="url(#b16)"/>
<path d="M1500,1600 C1600,1750 1700,1900 1740,2080 L1900,2080 C1850,1950 1800,1900 1760,1893 L1640,1740 Z" fill="#3a2b26" opacity="0.45" filter="url(#b16)"/>
<path d="M1440,1140 C1540,1190 1660,1280 1750,1370 L1745,1395 C1650,1310 1530,1230 1420,1175 Z" fill="#4a3a32" opacity="0.5" filter="url(#b8)"/>
<path d="M1320,1560 C1400,1700 1440,1900 1450,2080 L1520,2080 C1500,1880 1450,1700 1380,1560 Z" fill="#40312a" opacity="0.45" filter="url(#b16)"/>
<path d="M1395.0,856.0 L1395.4,859.7 L1395.9,864.4 L1396.4,870.0 L1396.9,876.3 L1397.6,883.1 L1398.5,890.1 L1399.5,897.2 L1400.7,904.2 L1402.2,910.9 L1404.0,917.0 L1406.1,922.8 L1408.6,928.8 L1411.4,934.7 L1414.4,940.5 L1417.6,946.3 L1420.9,951.9 L1424.3,957.4 L1427.6,962.6 L1430.9,967.5 L1434.0,972.0 L1437.0,976.2 L1440.0,980.0 L1443.0,983.5 L1446.0,986.8 L1449.0,989.9 L1452.0,992.8 L1455.1,995.6 L1458.3,998.4 L1461.6,1001.2 L1465.0,1004.0 L1468.6,1006.9 L1472.3,1009.8 L1476.3,1012.6 L1480.2,1015.4 L1484.3,1018.1 L1488.3,1020.7 L1492.3,1023.1 L1496.2,1025.3 L1499.9,1027.3 L1503.5,1029.0 L1506.8,1030.5 L1509.9,1031.7 L1512.9,1032.8 L1515.8,1033.7 L1518.6,1034.4 L1521.4,1035.0 L1524.3,1035.3 L1527.4,1035.4 L1530.6,1035.3 L1534.0,1035.0 L1537.7,1034.5 L1541.6,1033.8 L1545.7,1032.9 L1549.8,1031.8 L1554.1,1030.5 L1558.4,1029.0 L1562.7,1027.3 L1566.9,1025.4 L1571.0,1023.3 L1575.0,1021.0 L1578.9,1018.4 L1582.8,1015.6 L1586.7,1012.4 L1590.6,1009.1 L1594.4,1005.6 L1598.2,1001.9 L1601.8,998.2 L1605.4,994.4 L1608.8,990.7 L1612.0,987.0 L1615.1,983.4 L1617.9,979.7 L1620.6,976.1 L1623.2,972.4 L1625.8,968.7 L1628.2,964.8 L1630.6,960.9 L1633.0,956.8 L1635.5,952.5 L1638.0,948.0 L1640.7,943.0 L1643.5,937.4 L1646.4,931.5 L1649.3,925.3 L1652.1,919.1 L1654.8,913.1 L1657.4,907.4 L1659.6,902.4 L1661.5,898.2" fill="none" stroke="#3a2c28" stroke-width="50" stroke-linecap="butt" stroke-linejoin="round"/>
<circle cx="1415.0" cy="925.9" r="2.6" fill="#8f8a86"/>
<circle cx="1404.9" cy="926.8" r="3.2" fill="url(#pearl)"/>
<circle cx="1645.0" cy="948.6" r="3.2" fill="url(#pearl)"/>
<circle cx="1626.4" cy="976.0" r="3.2" fill="url(#pearl)"/>
<circle cx="1668.5" cy="901.4" r="3.2" fill="url(#pearl)"/>
<circle cx="1642.4" cy="956.4" r="3.2" fill="url(#pearl)"/>
<circle cx="1610.0" cy="949.8" r="3.2" fill="url(#pearl)"/>
<circle cx="1452.7" cy="992.1" r="3.2" fill="url(#pearl)"/>
<circle cx="1614.0" cy="988.7" r="3.2" fill="url(#pearl)"/>
<circle cx="1591.6" cy="1004.5" r="2.6" fill="#8f8a86"/>
<circle cx="1416.8" cy="917.1" r="3.2" fill="url(#pearl)"/>
<circle cx="1372.8" cy="867.7" r="3.2" fill="url(#pearl)"/>
<circle cx="1546.0" cy="1062.7" r="3.2" fill="url(#pearl)"/>
<circle cx="1604.7" cy="980.7" r="3.2" fill="url(#pearl)"/>
<circle cx="1471.2" cy="1009.3" r="3.2" fill="url(#pearl)"/>
<circle cx="1433.0" cy="960.8" r="3.2" fill="url(#pearl)"/>
<circle cx="1634.5" cy="987.7" r="3.2" fill="url(#pearl)"/>
<circle cx="1639.8" cy="952.0" r="3.2" fill="url(#pearl)"/>
<circle cx="1531.4" cy="1006.7" r="2.6" fill="#8f8a86"/>
<circle cx="1409.1" cy="888.7" r="3.2" fill="url(#pearl)"/>
<circle cx="1563.8" cy="1055.6" r="3.2" fill="url(#pearl)"/>
<circle cx="1403.1" cy="922.3" r="3.2" fill="url(#pearl)"/>
<circle cx="1449.1" cy="1012.6" r="3.2" fill="url(#pearl)"/>
<circle cx="1637.8" cy="927.4" r="3.2" fill="url(#pearl)"/>
<circle cx="1526.0" cy="1019.0" r="3.2" fill="url(#pearl)"/>
<circle cx="1579.9" cy="1011.8" r="3.2" fill="url(#pearl)"/>
<circle cx="1539.4" cy="1007.0" r="3.2" fill="url(#pearl)"/>
<circle cx="1649.8" cy="954.6" r="2.6" fill="#8f8a86"/>
<circle cx="1503.0" cy="1058.4" r="3.2" fill="url(#pearl)"/>
<circle cx="1473.7" cy="1004.0" r="3.2" fill="url(#pearl)"/>
<circle cx="1646.2" cy="927.6" r="3.2" fill="url(#pearl)"/>
<circle cx="1573.5" cy="1049.2" r="3.2" fill="url(#pearl)"/>
<circle cx="1502.1" cy="1010.4" r="3.2" fill="url(#pearl)"/>
<circle cx="1566.1" cy="1032.4" r="3.2" fill="url(#pearl)"/>
<circle cx="1457.6" cy="982.6" r="3.2" fill="url(#pearl)"/>
<circle cx="1379.3" cy="886.9" r="3.2" fill="url(#pearl)"/>
<circle cx="1589.2" cy="1005.6" r="2.6" fill="#8f8a86"/>
<circle cx="1592.9" cy="1007.8" r="3.2" fill="url(#pearl)"/>
<circle cx="1403.6" cy="950.3" r="3.2" fill="url(#pearl)"/>
<circle cx="1645.8" cy="959.8" r="3.2" fill="url(#pearl)"/>
<circle cx="1546.9" cy="1033.4" r="3.2" fill="url(#pearl)"/>
<circle cx="1424.0" cy="955.7" r="3.2" fill="url(#pearl)"/>
<circle cx="1541.7" cy="1052.7" r="3.2" fill="url(#pearl)"/>
<circle cx="1483.2" cy="993.4" r="3.2" fill="url(#pearl)"/>
<circle cx="1419.2" cy="884.1" r="3.2" fill="url(#pearl)"/>
<circle cx="1410.5" cy="902.3" r="2.6" fill="#8f8a86"/>
<circle cx="1586.0" cy="1028.7" r="3.2" fill="url(#pearl)"/>
<circle cx="1486.4" cy="1000.5" r="3.2" fill="url(#pearl)"/>
<circle cx="1387.4" cy="928.3" r="3.2" fill="url(#pearl)"/>
<circle cx="1641.1" cy="887.8" r="3.2" fill="url(#pearl)"/>
<circle cx="1418.5" cy="968.5" r="3.2" fill="url(#pearl)"/>
<circle cx="1415.3" cy="882.8" r="3.2" fill="url(#pearl)"/>
<circle cx="1643.2" cy="889.9" r="3.2" fill="url(#pearl)"/>
<circle cx="1589.3" cy="1036.0" r="3.2" fill="url(#pearl)"/>
<circle cx="1417.2" cy="928.3" r="2.6" fill="#8f8a86"/>
<circle cx="1483.3" cy="1035.9" r="3.2" fill="url(#pearl)"/>
<circle cx="1409.9" cy="921.4" r="3.2" fill="url(#pearl)"/>
<circle cx="1559.9" cy="1004.5" r="3.2" fill="url(#pearl)"/>
<circle cx="1630.9" cy="939.6" r="3.2" fill="url(#pearl)"/>
<circle cx="1582.4" cy="994.6" r="3.8" fill="url(#pearl)"/>
<circle cx="1526.7" cy="1011.2" r="3.8" fill="url(#pearl)"/>
<circle cx="1673.7" cy="902.7" r="3.8" fill="url(#pearl)"/>
<circle cx="1653.9" cy="970.4" r="3.8" fill="url(#pearl)"/>
<circle cx="1375.4" cy="885.5" r="3.0" fill="#8f8a86"/>
<circle cx="1636.3" cy="981.4" r="3.8" fill="url(#pearl)"/>
<circle cx="1604.2" cy="966.6" r="3.8" fill="url(#pearl)"/>
<circle cx="1522.1" cy="1041.9" r="3.8" fill="url(#pearl)"/>
<circle cx="1624.5" cy="957.2" r="3.8" fill="url(#pearl)"/>
<circle cx="1579.3" cy="1017.0" r="3.8" fill="url(#pearl)"/>
<circle cx="1525.6" cy="1010.1" r="3.8" fill="url(#pearl)"/>
<circle cx="1625.6" cy="926.9" r="3.8" fill="url(#pearl)"/>
<circle cx="1569.2" cy="1017.7" r="3.8" fill="url(#pearl)"/>
<circle cx="1381.8" cy="864.4" r="3.0" fill="#8f8a86"/>
<circle cx="1455.5" cy="967.4" r="3.8" fill="url(#pearl)"/>
<circle cx="1606.8" cy="997.5" r="3.8" fill="url(#pearl)"/>
<circle cx="1500.0" cy="996.0" r="3.8" fill="url(#pearl)"/>
<circle cx="1555.2" cy="1007.3" r="3.8" fill="url(#pearl)"/>
<circle cx="1533.6" cy="1031.6" r="3.8" fill="url(#pearl)"/>
<circle cx="1642.8" cy="909.4" r="3.8" fill="url(#pearl)"/>
<circle cx="1448.7" cy="1002.9" r="3.8" fill="url(#pearl)"/>
<circle cx="1565.7" cy="1007.6" r="3.8" fill="url(#pearl)"/>
<circle cx="1614.5" cy="1022.4" r="3.0" fill="#8f8a86"/>
<circle cx="1445.0" cy="1022.9" r="3.8" fill="url(#pearl)"/>
<circle cx="1412.9" cy="905.0" r="3.8" fill="url(#pearl)"/>
<circle cx="1547.9" cy="1011.6" r="3.8" fill="url(#pearl)"/>
<circle cx="1402.5" cy="854.9" r="3.8" fill="url(#pearl)"/>
<circle cx="1418.5" cy="921.1" r="3.8" fill="url(#pearl)"/>
<circle cx="1635.8" cy="937.2" r="3.8" fill="url(#pearl)"/>
<circle cx="1397.1" cy="856.5" r="3.8" fill="url(#pearl)"/>
<circle cx="1606.8" cy="1025.0" r="3.8" fill="url(#pearl)"/>
<circle cx="1599.4" cy="1027.6" r="3.0" fill="#8f8a86"/>
<circle cx="1457.9" cy="983.6" r="3.8" fill="url(#pearl)"/>
<circle cx="1517.8" cy="1026.6" r="3.8" fill="url(#pearl)"/>
<circle cx="1536.1" cy="1064.8" r="3.8" fill="url(#pearl)"/>
<circle cx="1616.4" cy="986.0" r="3.8" fill="url(#pearl)"/>
<circle cx="1625.3" cy="968.4" r="3.8" fill="url(#pearl)"/>
<circle cx="1620.0" cy="1017.6" r="3.8" fill="url(#pearl)"/>
<circle cx="1638.5" cy="940.3" r="3.8" fill="url(#pearl)"/>
<circle cx="1455.6" cy="964.7" r="3.8" fill="url(#pearl)"/>
<circle cx="1527.5" cy="1007.5" r="3.0" fill="#8f8a86"/>
<circle cx="1412.3" cy="900.3" r="3.8" fill="url(#pearl)"/>
<circle cx="1491.8" cy="1008.7" r="3.8" fill="url(#pearl)"/>
<circle cx="1381.0" cy="871.3" r="3.8" fill="url(#pearl)"/>
<circle cx="1520.0" cy="1051.9" r="3.8" fill="url(#pearl)"/>
<circle cx="1414.1" cy="989.7" r="3.8" fill="url(#pearl)"/>
<circle cx="1413.7" cy="907.9" r="3.8" fill="url(#pearl)"/>
<circle cx="1622.2" cy="1004.5" r="3.8" fill="url(#pearl)"/>
<circle cx="1609.5" cy="963.0" r="3.8" fill="url(#pearl)"/>
<circle cx="1594.5" cy="1007.5" r="3.0" fill="#8f8a86"/>
<circle cx="1427.0" cy="975.3" r="3.8" fill="url(#pearl)"/>
<circle cx="1437.4" cy="969.6" r="3.8" fill="url(#pearl)"/>
<circle cx="1439.2" cy="968.3" r="3.8" fill="url(#pearl)"/>
<circle cx="1667.7" cy="924.3" r="3.8" fill="url(#pearl)"/>
<circle cx="1391.1" cy="883.8" r="3.8" fill="url(#pearl)"/>
<circle cx="1379.6" cy="873.0" r="3.8" fill="url(#pearl)"/>
<circle cx="1616.0" cy="984.1" r="3.8" fill="url(#pearl)"/>
<circle cx="1433.1" cy="965.9" r="3.8" fill="url(#pearl)"/>
<circle cx="1379.7" cy="902.3" r="3.0" fill="#8f8a86"/>
<circle cx="1452.5" cy="971.1" r="3.8" fill="url(#pearl)"/>
<circle cx="1534.8" cy="1042.3" r="3.8" fill="url(#pearl)"/>
<circle cx="1419.5" cy="874.2" r="3.8" fill="url(#pearl)"/>
<circle cx="1436.8" cy="930.3" r="3.8" fill="url(#pearl)"/>
<circle cx="1610.7" cy="994.1" r="3.8" fill="url(#pearl)"/>
<circle cx="1402.2" cy="856.8" r="3.8" fill="url(#pearl)"/>
<circle cx="1577.1" cy="995.6" r="3.8" fill="url(#pearl)"/>
<circle cx="1455.9" cy="977.5" r="3.8" fill="url(#pearl)"/>
<circle cx="1416.6" cy="991.6" r="3.0" fill="#8f8a86"/>
<circle cx="1494.1" cy="1003.1" r="3.8" fill="url(#pearl)"/>
<circle cx="1642.9" cy="902.6" r="3.8" fill="url(#pearl)"/>
<circle cx="1554.6" cy="1025.2" r="4.5" fill="url(#pearl)"/>
<circle cx="1602.4" cy="966.5" r="4.5" fill="url(#pearl)"/>
<circle cx="1476.0" cy="979.2" r="4.5" fill="url(#pearl)"/>
<circle cx="1644.2" cy="899.9" r="4.5" fill="url(#pearl)"/>
<circle cx="1599.0" cy="965.2" r="4.5" fill="url(#pearl)"/>
<circle cx="1523.7" cy="1023.1" r="4.5" fill="url(#pearl)"/>
<circle cx="1603.5" cy="978.2" r="3.6" fill="#8f8a86"/>
<circle cx="1476.2" cy="987.0" r="4.5" fill="url(#pearl)"/>
<circle cx="1443.8" cy="960.3" r="4.5" fill="url(#pearl)"/>
<circle cx="1396.4" cy="861.8" r="4.5" fill="url(#pearl)"/>
<circle cx="1485.6" cy="1003.5" r="4.5" fill="url(#pearl)"/>
<circle cx="1415.5" cy="899.7" r="4.5" fill="url(#pearl)"/>
<circle cx="1449.2" cy="999.1" r="4.5" fill="url(#pearl)"/>
<circle cx="1480.0" cy="1013.7" r="4.5" fill="url(#pearl)"/>
<circle cx="1593.8" cy="995.7" r="4.5" fill="url(#pearl)"/>
<circle cx="1629.0" cy="935.4" r="3.6" fill="#8f8a86"/>
<circle cx="1455.2" cy="1019.9" r="4.5" fill="url(#pearl)"/>
<circle cx="1533.7" cy="1052.0" r="4.5" fill="url(#pearl)"/>
<circle cx="1449.6" cy="962.5" r="4.5" fill="url(#pearl)"/>
<circle cx="1668.7" cy="934.3" r="4.5" fill="url(#pearl)"/>
<circle cx="1612.9" cy="1006.9" r="4.5" fill="url(#pearl)"/>
<circle cx="1565.7" cy="1056.9" r="4.5" fill="url(#pearl)"/>
<circle cx="1473.1" cy="975.4" r="4.5" fill="url(#pearl)"/>
<circle cx="1474.7" cy="1014.7" r="4.5" fill="url(#pearl)"/>
<circle cx="1439.2" cy="988.4" r="3.6" fill="#8f8a86"/>
<circle cx="1597.6" cy="966.6" r="4.5" fill="url(#pearl)"/>
<circle cx="1461.8" cy="1032.8" r="4.5" fill="url(#pearl)"/>
<circle cx="1439.6" cy="956.4" r="4.5" fill="url(#pearl)"/>
<circle cx="1540.1" cy="1057.4" r="4.5" fill="url(#pearl)"/>
<circle cx="1667.4" cy="924.2" r="4.5" fill="url(#pearl)"/>
<circle cx="1452.7" cy="975.0" r="4.5" fill="url(#pearl)"/>
<circle cx="1417.2" cy="920.0" r="4.5" fill="url(#pearl)"/>
<circle cx="1399.8" cy="921.8" r="4.5" fill="url(#pearl)"/>
<circle cx="1450.8" cy="1025.3" r="3.6" fill="#8f8a86"/>
<circle cx="1493.5" cy="992.4" r="4.5" fill="url(#pearl)"/>
<circle cx="1586.0" cy="998.5" r="4.5" fill="url(#pearl)"/>
<circle cx="1468.2" cy="994.9" r="4.5" fill="url(#pearl)"/>
<circle cx="1674.8" cy="923.9" r="4.5" fill="url(#pearl)"/>
<circle cx="1509.0" cy="1013.0" r="4.5" fill="url(#pearl)"/>
<circle cx="1570.8" cy="1008.5" r="4.5" fill="url(#pearl)"/>
<circle cx="1440.6" cy="960.8" r="4.5" fill="url(#pearl)"/>
<circle cx="1662.7" cy="905.2" r="4.5" fill="url(#pearl)"/>
<circle cx="1428.0" cy="912.8" r="3.6" fill="#8f8a86"/>
<circle cx="1456.5" cy="1014.3" r="4.5" fill="url(#pearl)"/>
<circle cx="1392.6" cy="889.0" r="4.5" fill="url(#pearl)"/>
<circle cx="1637.3" cy="905.2" r="4.5" fill="url(#pearl)"/>
<circle cx="1485.0" cy="1010.6" r="4.5" fill="url(#pearl)"/>
<circle cx="1399.1" cy="915.2" r="4.5" fill="url(#pearl)"/>
<circle cx="1533.5" cy="1012.2" r="4.5" fill="url(#pearl)"/>
<circle cx="1641.2" cy="917.8" r="4.5" fill="url(#pearl)"/>
<circle cx="1567.6" cy="1032.5" r="4.5" fill="url(#pearl)"/>
<circle cx="1637.2" cy="923.4" r="3.6" fill="#8f8a86"/>
<circle cx="1433.7" cy="938.9" r="4.5" fill="url(#pearl)"/>
<circle cx="1457.8" cy="978.3" r="4.5" fill="url(#pearl)"/>
<circle cx="1471.6" cy="999.4" r="4.5" fill="url(#pearl)"/>
<circle cx="1652.3" cy="952.5" r="4.5" fill="url(#pearl)"/>
<circle cx="1418.8" cy="922.6" r="4.5" fill="url(#pearl)"/>
<circle cx="1588.1" cy="1045.2" r="4.5" fill="url(#pearl)"/>
<circle cx="1426.5" cy="932.4" r="4.5" fill="url(#pearl)"/>
<circle cx="1382.2" cy="857.9" r="4.5" fill="url(#pearl)"/>
<circle cx="1471.7" cy="1042.3" r="3.6" fill="#8f8a86"/>
<circle cx="1520.8" cy="1045.9" r="4.5" fill="url(#pearl)"/>
<circle cx="1415.8" cy="904.4" r="4.5" fill="url(#pearl)"/>
<circle cx="1495.9" cy="1043.0" r="4.5" fill="url(#pearl)"/>
<circle cx="1619.1" cy="948.7" r="4.5" fill="url(#pearl)"/>
<circle cx="1413.2" cy="893.3" r="4.5" fill="url(#pearl)"/>
<circle cx="1392.2" cy="954.5" r="4.5" fill="url(#pearl)"/>
<circle cx="1417.3" cy="952.2" r="4.5" fill="url(#pearl)"/>
<circle cx="1390.5" cy="875.2" r="4.5" fill="url(#pearl)"/>
<circle cx="1672.2" cy="905.5" r="3.6" fill="#8f8a86"/>
<circle cx="1584.4" cy="991.5" r="4.5" fill="url(#pearl)"/>
<circle cx="1555.2" cy="1009.6" r="4.5" fill="url(#pearl)"/>
<circle cx="1546.1" cy="1030.4" r="4.5" fill="url(#pearl)"/>
<circle cx="1452.1" cy="988.2" r="4.5" fill="url(#pearl)"/>
<circle cx="1533.8" cy="1020.1" r="4.5" fill="url(#pearl)"/>
<circle cx="1434.6" cy="923.2" r="4.5" fill="url(#pearl)"/>
<circle cx="1442.6" cy="991.5" r="4.5" fill="url(#pearl)"/>
<circle cx="1409.3" cy="912.2" r="4.5" fill="url(#pearl)"/>
<circle cx="1392.7" cy="881.8" r="3.6" fill="#8f8a86"/>
<circle cx="1577.4" cy="1038.0" r="4.5" fill="url(#pearl)"/>
<circle cx="1416.7" cy="861.2" r="4.5" fill="url(#pearl)"/>
<circle cx="1499.8" cy="1004.2" r="4.5" fill="url(#pearl)"/>
<circle cx="1386.9" cy="930.5" r="4.5" fill="url(#pearl)"/>
<circle cx="1655.5" cy="945.3" r="4.5" fill="url(#pearl)"/>
<circle cx="1631.9" cy="949.0" r="4.5" fill="url(#pearl)"/>
<circle cx="1566.9" cy="1004.4" r="4.5" fill="url(#pearl)"/>
<circle cx="1442.3" cy="959.7" r="4.5" fill="url(#pearl)"/>
<circle cx="1528.2" cy="1044.5" r="3.6" fill="#8f8a86"/>
<circle cx="1477.4" cy="1045.8" r="4.5" fill="url(#pearl)"/>
<circle cx="1671.5" cy="909.2" r="4.5" fill="url(#pearl)"/>
<circle cx="1526.9" cy="1007.6" r="4.5" fill="url(#pearl)"/>
<circle cx="1407.3" cy="917.5" r="4.5" fill="url(#pearl)"/>
<circle cx="1383.8" cy="857.7" r="4.5" fill="url(#pearl)"/>
<circle cx="1652.0" cy="957.3" r="4.5" fill="url(#pearl)"/>
<circle cx="1446.4" cy="943.4" r="4.5" fill="url(#pearl)"/>
<circle cx="1537.1" cy="1015.6" r="4.5" fill="url(#pearl)"/>
<circle cx="1390.4" cy="862.4" r="3.6" fill="#8f8a86"/>
<circle cx="1486.1" cy="1004.8" r="4.5" fill="url(#pearl)"/>
<circle cx="1449.0" cy="969.9" r="4.5" fill="url(#pearl)"/>
<circle cx="1566.4" cy="1054.7" r="4.5" fill="url(#pearl)"/>
<circle cx="1637.4" cy="988.3" r="4.5" fill="url(#pearl)"/>
<circle cx="1636.3" cy="992.3" r="4.5" fill="url(#pearl)"/>
<circle cx="1424.7" cy="931.5" r="4.5" fill="url(#pearl)"/>
<circle cx="1427.9" cy="924.9" r="4.5" fill="url(#pearl)"/>
<circle cx="1636.0" cy="984.2" r="4.5" fill="url(#pearl)"/>
<circle cx="1547.3" cy="1001.7" r="3.6" fill="#8f8a86"/>
<circle cx="1592.9" cy="1021.9" r="4.5" fill="url(#pearl)"/>
<circle cx="1474.6" cy="1017.1" r="4.5" fill="url(#pearl)"/>
<circle cx="1479.5" cy="1037.3" r="4.5" fill="url(#pearl)"/>
<circle cx="1444.5" cy="974.9" r="4.5" fill="url(#pearl)"/>
<circle cx="1575.0" cy="1030.6" r="4.5" fill="url(#pearl)"/>
<circle cx="1620.1" cy="943.8" r="4.5" fill="url(#pearl)"/>
<circle cx="1453.6" cy="985.2" r="4.5" fill="url(#pearl)"/>
<circle cx="1456.2" cy="1009.4" r="4.5" fill="url(#pearl)"/>
<circle cx="1511.1" cy="1046.7" r="4.2" fill="#8f8a86"/>
<circle cx="1593.1" cy="1000.4" r="5.2" fill="url(#pearl)"/>
<circle cx="1618.9" cy="985.0" r="5.2" fill="url(#pearl)"/>
<circle cx="1482.6" cy="1032.3" r="5.2" fill="url(#pearl)"/>
<circle cx="1375.5" cy="870.3" r="5.2" fill="url(#pearl)"/>
<circle cx="1413.8" cy="898.3" r="5.2" fill="url(#pearl)"/>
<circle cx="1560.8" cy="1051.0" r="5.2" fill="url(#pearl)"/>
<circle cx="1548.3" cy="1034.4" r="5.2" fill="url(#pearl)"/>
<circle cx="1552.3" cy="1010.0" r="5.2" fill="url(#pearl)"/>
<circle cx="1629.6" cy="937.3" r="4.2" fill="#8f8a86"/>
<circle cx="1446.4" cy="951.9" r="5.2" fill="url(#pearl)"/>
<circle cx="1384.3" cy="872.6" r="5.2" fill="url(#pearl)"/>
<circle cx="1660.4" cy="943.9" r="5.2" fill="url(#pearl)"/>
<circle cx="1621.1" cy="1000.0" r="5.2" fill="url(#pearl)"/>
<circle cx="1449.8" cy="992.1" r="5.2" fill="url(#pearl)"/>
<circle cx="1373.4" cy="875.2" r="5.2" fill="url(#pearl)"/>
<circle cx="1568.5" cy="1008.6" r="5.2" fill="url(#pearl)"/>
<circle cx="1569.7" cy="1044.0" r="5.2" fill="url(#pearl)"/>
<circle cx="1462.7" cy="999.9" r="4.2" fill="#8f8a86"/>
<circle cx="1593.6" cy="1037.0" r="5.2" fill="url(#pearl)"/>
<circle cx="1493.3" cy="1023.7" r="5.2" fill="url(#pearl)"/>
<circle cx="1380.3" cy="906.2" r="5.2" fill="url(#pearl)"/>
<circle cx="1632.4" cy="959.2" r="5.2" fill="url(#pearl)"/>
<circle cx="1413.4" cy="984.7" r="5.2" fill="url(#pearl)"/>
<circle cx="1515.1" cy="1028.6" r="5.2" fill="url(#pearl)"/>
<circle cx="1515.7" cy="1007.7" r="5.2" fill="url(#pearl)"/>
<circle cx="1510.3" cy="1033.0" r="5.2" fill="url(#pearl)"/>
<circle cx="1555.5" cy="1051.7" r="4.2" fill="#8f8a86"/>
<circle cx="1620.4" cy="975.9" r="5.2" fill="url(#pearl)"/>
<circle cx="1557.5" cy="1054.0" r="5.2" fill="url(#pearl)"/>
<circle cx="1389.6" cy="865.0" r="5.2" fill="url(#pearl)"/>
<circle cx="1552.9" cy="1057.2" r="5.2" fill="url(#pearl)"/>
<circle cx="1640.8" cy="906.7" r="5.2" fill="url(#pearl)"/>
<circle cx="1444.8" cy="941.0" r="5.2" fill="url(#pearl)"/>
<circle cx="1405.9" cy="855.4" r="5.2" fill="url(#pearl)"/>
<circle cx="1531.4" cy="1006.6" r="5.2" fill="url(#pearl)"/>
<circle cx="1646.3" cy="902.5" r="4.2" fill="#8f8a86"/>
<circle cx="1462.5" cy="1025.0" r="5.2" fill="url(#pearl)"/>
<circle cx="1593.7" cy="1037.0" r="5.2" fill="url(#pearl)"/>
<circle cx="1398.7" cy="917.0" r="5.2" fill="url(#pearl)"/>
<circle cx="1469.0" cy="1018.4" r="5.2" fill="url(#pearl)"/>
<circle cx="1565.9" cy="996.6" r="5.2" fill="url(#pearl)"/>
<circle cx="1592.2" cy="989.0" r="5.2" fill="url(#pearl)"/>
<circle cx="1475.1" cy="1039.5" r="5.2" fill="url(#pearl)"/>
<circle cx="1521.3" cy="1004.1" r="5.2" fill="url(#pearl)"/>
<circle cx="1377.0" cy="863.7" r="4.2" fill="#8f8a86"/>
<circle cx="1517.8" cy="1060.2" r="5.2" fill="url(#pearl)"/>
<circle cx="1588.1" cy="997.1" r="5.2" fill="url(#pearl)"/>
<circle cx="1518.8" cy="1021.0" r="5.2" fill="url(#pearl)"/>
<circle cx="1601.1" cy="976.1" r="5.2" fill="url(#pearl)"/>
<circle cx="1514.1" cy="1036.7" r="5.2" fill="url(#pearl)"/>
<circle cx="1459.1" cy="989.7" r="5.2" fill="url(#pearl)"/>
<circle cx="1400.5" cy="902.5" r="5.2" fill="url(#pearl)"/>
<circle cx="1638.2" cy="990.5" r="5.2" fill="url(#pearl)"/>
<circle cx="1610.9" cy="961.4" r="4.2" fill="#8f8a86"/>
<circle cx="1464.6" cy="1001.0" r="5.2" fill="url(#pearl)"/>
<circle cx="1448.9" cy="981.1" r="5.2" fill="url(#pearl)"/>
<circle cx="1528.7" cy="1026.8" r="5.2" fill="url(#pearl)"/>
<circle cx="1624.6" cy="954.6" r="5.2" fill="url(#pearl)"/>
<circle cx="1469.9" cy="1025.9" r="5.2" fill="url(#pearl)"/>
<circle cx="1464.3" cy="966.0" r="5.2" fill="url(#pearl)"/>
<circle cx="1582.7" cy="1019.5" r="5.2" fill="url(#pearl)"/>
<circle cx="1500.3" cy="1013.6" r="5.2" fill="url(#pearl)"/>
<circle cx="1526.4" cy="1020.6" r="4.2" fill="#8f8a86"/>
<circle cx="1479.0" cy="995.4" r="5.2" fill="url(#pearl)"/>
<circle cx="1406.5" cy="940.9" r="5.2" fill="url(#pearl)"/>
<circle cx="1474.9" cy="977.6" r="5.2" fill="url(#pearl)"/>
<circle cx="1448.3" cy="949.0" r="5.2" fill="url(#pearl)"/>
<circle cx="1651.2" cy="906.3" r="5.2" fill="url(#pearl)"/>
<circle cx="1632.9" cy="921.3" r="5.2" fill="url(#pearl)"/>
<circle cx="1548.6" cy="1062.0" r="5.2" fill="url(#pearl)"/>
<circle cx="1553.3" cy="1058.8" r="5.2" fill="url(#pearl)"/>
<circle cx="1539.7" cy="1004.9" r="4.2" fill="#8f8a86"/>
<circle cx="1541.5" cy="1038.5" r="5.2" fill="url(#pearl)"/>
<circle cx="1403.3" cy="925.7" r="5.2" fill="url(#pearl)"/>
<circle cx="1579.9" cy="993.6" r="5.2" fill="url(#pearl)"/>
<circle cx="1433.1" cy="927.3" r="5.2" fill="url(#pearl)"/>
<circle cx="1384.8" cy="909.3" r="5.2" fill="url(#pearl)"/>
<circle cx="1442.7" cy="967.4" r="5.2" fill="url(#pearl)"/>
<circle cx="1570.1" cy="1004.0" r="5.2" fill="url(#pearl)"/>
<circle cx="1635.1" cy="953.7" r="5.2" fill="url(#pearl)"/>
<circle cx="1536.1" cy="1014.3" r="4.2" fill="#8f8a86"/>
<circle cx="1425.7" cy="988.1" r="5.2" fill="url(#pearl)"/>
<circle cx="1526.4" cy="1021.3" r="5.2" fill="url(#pearl)"/>
<circle cx="1607.1" cy="962.5" r="5.2" fill="url(#pearl)"/>
<circle cx="1485.9" cy="1041.4" r="5.2" fill="url(#pearl)"/>
<circle cx="1498.2" cy="1035.7" r="5.2" fill="url(#pearl)"/>
<circle cx="1417.3" cy="866.7" r="5.2" fill="url(#pearl)"/>
<circle cx="1509.8" cy="1006.0" r="5.2" fill="url(#pearl)"/>
<circle cx="1594.9" cy="983.2" r="5.2" fill="url(#pearl)"/>
<circle cx="1610.1" cy="957.2" r="4.2" fill="#8f8a86"/>
<circle cx="1626.1" cy="932.3" r="5.2" fill="url(#pearl)"/>
<circle cx="1619.1" cy="947.4" r="5.2" fill="url(#pearl)"/>
<circle cx="1427.6" cy="946.1" r="5.2" fill="url(#pearl)"/>
<circle cx="1433.8" cy="1010.5" r="5.2" fill="url(#pearl)"/>
<circle cx="1432.1" cy="1003.4" r="5.2" fill="url(#pearl)"/>
<circle cx="1655.8" cy="960.9" r="5.2" fill="url(#pearl)"/>
<circle cx="1383.6" cy="909.6" r="5.2" fill="url(#pearl)"/>
<circle cx="1493.6" cy="990.3" r="5.2" fill="url(#pearl)"/>
<circle cx="1502.5" cy="998.0" r="4.2" fill="#8f8a86"/>
<circle cx="1406.2" cy="939.1" r="5.2" fill="url(#pearl)"/>
<circle cx="1526.5" cy="1017.7" r="5.2" fill="url(#pearl)"/>
<circle cx="1653.1" cy="923.2" r="5.2" fill="url(#pearl)"/>
<circle cx="1440.1" cy="976.9" r="5.2" fill="url(#pearl)"/>
<circle cx="1611.4" cy="964.3" r="5.2" fill="url(#pearl)"/>
<circle cx="1581.5" cy="993.7" r="5.2" fill="url(#pearl)"/>
<circle cx="1522.2" cy="1014.4" r="5.2" fill="url(#pearl)"/>
<circle cx="1565.2" cy="1021.8" r="5.2" fill="url(#pearl)"/>
<circle cx="1497.3" cy="1055.5" r="4.8" fill="#8f8a86"/>
<circle cx="1595.4" cy="1018.6" r="6.0" fill="url(#pearl)"/>
<circle cx="1412.1" cy="982.0" r="6.0" fill="url(#pearl)"/>
<circle cx="1411.7" cy="961.4" r="6.0" fill="url(#pearl)"/>
<circle cx="1420.5" cy="912.8" r="6.0" fill="url(#pearl)"/>
<circle cx="1552.5" cy="1061.0" r="6.0" fill="url(#pearl)"/>
<circle cx="1533.3" cy="1028.9" r="6.0" fill="url(#pearl)"/>
<circle cx="1413.0" cy="935.7" r="6.0" fill="url(#pearl)"/>
<circle cx="1591.8" cy="1036.9" r="6.0" fill="url(#pearl)"/>
<circle cx="1633.9" cy="937.9" r="4.8" fill="#8f8a86"/>
<circle cx="1563.2" cy="1058.3" r="6.0" fill="url(#pearl)"/>
<circle cx="1563.8" cy="1039.8" r="6.0" fill="url(#pearl)"/>
<circle cx="1405.5" cy="941.4" r="6.0" fill="url(#pearl)"/>
<circle cx="1649.1" cy="925.2" r="6.0" fill="url(#pearl)"/>
<circle cx="1426.1" cy="975.8" r="6.0" fill="url(#pearl)"/>
<circle cx="1592.4" cy="1021.3" r="6.0" fill="url(#pearl)"/>
<circle cx="1491.8" cy="1038.3" r="6.0" fill="url(#pearl)"/>
<circle cx="1477.8" cy="1004.5" r="6.0" fill="url(#pearl)"/>
<circle cx="1454.7" cy="1031.0" r="4.8" fill="#8f8a86"/>
<circle cx="1559.9" cy="1052.5" r="6.0" fill="url(#pearl)"/>
<circle cx="1377.6" cy="894.7" r="6.0" fill="url(#pearl)"/>
<circle cx="1436.8" cy="944.2" r="6.0" fill="url(#pearl)"/>
<circle cx="1498.6" cy="1025.5" r="6.0" fill="url(#pearl)"/>
<circle cx="1384.4" cy="868.1" r="6.0" fill="url(#pearl)"/>
<circle cx="1487.2" cy="986.5" r="6.0" fill="url(#pearl)"/>
<circle cx="1448.3" cy="989.1" r="6.0" fill="url(#pearl)"/>
<circle cx="1416.2" cy="914.4" r="6.0" fill="url(#pearl)"/>
<circle cx="1654.7" cy="895.1" r="4.8" fill="#8f8a86"/>
<circle cx="1612.4" cy="955.0" r="6.0" fill="url(#pearl)"/>
<circle cx="1560.1" cy="998.2" r="6.0" fill="url(#pearl)"/>
<circle cx="1500.6" cy="999.1" r="6.0" fill="url(#pearl)"/>
<circle cx="1532.6" cy="1052.5" r="6.0" fill="url(#pearl)"/>
<circle cx="1380.8" cy="862.2" r="6.0" fill="url(#pearl)"/>
<circle cx="1611.3" cy="986.4" r="6.0" fill="url(#pearl)"/>
<circle cx="1635.9" cy="990.3" r="6.0" fill="url(#pearl)"/>
<circle cx="1630.6" cy="929.4" r="6.0" fill="url(#pearl)"/>
<circle cx="1434.8" cy="1011.2" r="4.8" fill="#8f8a86"/>
<circle cx="1657.2" cy="944.2" r="6.0" fill="url(#pearl)"/>
<circle cx="1575.4" cy="1007.8" r="6.0" fill="url(#pearl)"/>
<circle cx="1651.0" cy="953.6" r="6.0" fill="url(#pearl)"/>
<circle cx="1498.7" cy="1032.2" r="6.0" fill="url(#pearl)"/>
<circle cx="1429.1" cy="994.0" r="6.0" fill="url(#pearl)"/>
<circle cx="1649.3" cy="905.4" r="6.0" fill="url(#pearl)"/>
<circle cx="1456.1" cy="1033.7" r="6.0" fill="url(#pearl)"/>
<circle cx="1440.3" cy="961.0" r="6.0" fill="url(#pearl)"/>
<circle cx="1638.8" cy="961.5" r="4.8" fill="#8f8a86"/>
<circle cx="1633.0" cy="910.3" r="6.0" fill="url(#pearl)"/>
<circle cx="1499.6" cy="1014.9" r="6.0" fill="url(#pearl)"/>
<circle cx="1413.3" cy="926.7" r="6.0" fill="url(#pearl)"/>
<circle cx="1491.6" cy="1038.7" r="6.0" fill="url(#pearl)"/>
<circle cx="1496.6" cy="1005.4" r="6.0" fill="url(#pearl)"/>
<circle cx="1558.8" cy="999.0" r="6.0" fill="url(#pearl)"/>
<circle cx="1438.6" cy="955.3" r="6.0" fill="url(#pearl)"/>
<circle cx="1384.2" cy="859.0" r="6.0" fill="url(#pearl)"/>
<circle cx="1665.4" cy="897.9" r="4.8" fill="#8f8a86"/>
<circle cx="1504.3" cy="1027.1" r="6.8" fill="url(#pearl)"/>
<circle cx="1613.2" cy="968.1" r="6.8" fill="url(#pearl)"/>
<circle cx="1510.8" cy="1044.5" r="6.8" fill="url(#pearl)"/>
<circle cx="1387.0" cy="936.4" r="6.8" fill="url(#pearl)"/>
<circle cx="1654.7" cy="892.0" r="6.8" fill="url(#pearl)"/>
<circle cx="1433.7" cy="981.9" r="6.8" fill="url(#pearl)"/>
<circle cx="1536.8" cy="1059.8" r="6.8" fill="url(#pearl)"/>
<circle cx="1400.7" cy="953.9" r="6.8" fill="url(#pearl)"/>
<circle cx="1413.2" cy="871.6" r="5.4" fill="#8f8a86"/>
<circle cx="1632.8" cy="919.5" r="6.8" fill="url(#pearl)"/>
<circle cx="1576.5" cy="985.0" r="6.8" fill="url(#pearl)"/>
<circle cx="1566.0" cy="1026.3" r="6.8" fill="url(#pearl)"/>
<circle cx="1403.6" cy="865.1" r="6.8" fill="url(#pearl)"/>
<circle cx="1569.7" cy="1006.9" r="6.8" fill="url(#pearl)"/>
<circle cx="1651.8" cy="896.2" r="6.8" fill="url(#pearl)"/>
<circle cx="1458.7" cy="972.2" r="6.8" fill="url(#pearl)"/>
<circle cx="1503.4" cy="1043.4" r="6.8" fill="url(#pearl)"/>
<circle cx="1651.1" cy="924.2" r="5.4" fill="#8f8a86"/>
<circle cx="1454.4" cy="1013.3" r="6.8" fill="url(#pearl)"/>
<circle cx="1491.4" cy="1020.1" r="6.8" fill="url(#pearl)"/>
<circle cx="1561.6" cy="996.4" r="6.8" fill="url(#pearl)"/>
<circle cx="1388.1" cy="920.4" r="6.8" fill="url(#pearl)"/>
<circle cx="1463.4" cy="1002.5" r="6.8" fill="url(#pearl)"/>
<circle cx="1660.7" cy="944.0" r="6.8" fill="url(#pearl)"/>
<circle cx="1417.2" cy="909.9" r="6.8" fill="url(#pearl)"/>
<circle cx="1530.2" cy="1029.3" r="6.8" fill="url(#pearl)"/>
<circle cx="1443.1" cy="940.3" r="5.4" fill="#8f8a86"/>
<circle cx="1668.5" cy="899.3" r="6.8" fill="url(#pearl)"/>
<circle cx="1393.8" cy="860.9" r="6.8" fill="url(#pearl)"/>
<circle cx="1506.6" cy="1004.5" r="6.8" fill="url(#pearl)"/>
<circle cx="1526.0" cy="1064.4" r="6.8" fill="url(#pearl)"/>
<circle cx="1547.4" cy="1007.1" r="6.8" fill="url(#pearl)"/>
<circle cx="1454.1" cy="984.8" r="6.8" fill="url(#pearl)"/>
<circle cx="1454.6" cy="981.4" r="6.8" fill="url(#pearl)"/>
<circle cx="1584.9" cy="1029.4" r="6.8" fill="url(#pearl)"/>
<circle cx="1573.3" cy="996.3" r="5.4" fill="#8f8a86"/>
<circle cx="1501.1" cy="1051.5" r="6.8" fill="url(#pearl)"/>
<circle cx="1469.1" cy="977.2" r="6.8" fill="url(#pearl)"/>
<circle cx="1417.9" cy="911.0" r="6.8" fill="url(#pearl)"/>
<circle cx="1420.5" cy="903.3" r="6.8" fill="url(#pearl)"/>
<circle cx="1534.1" cy="1044.5" r="6.8" fill="url(#pearl)"/>
<circle cx="1389.7" cy="857.5" r="6.8" fill="url(#pearl)"/>
<circle cx="1565.3" cy="1008.8" r="6.8" fill="url(#pearl)"/>
<circle cx="1551.6" cy="1022.9" r="6.8" fill="url(#pearl)"/>
<circle cx="1463.0" cy="974.4" r="5.4" fill="#8f8a86"/>
<circle cx="1657.4" cy="949.9" r="6.8" fill="url(#pearl)"/>
<circle cx="1516.6" cy="1039.8" r="6.8" fill="url(#pearl)"/>
<circle cx="1650.2" cy="972.6" r="6.8" fill="url(#pearl)"/>
<circle cx="1527.3" cy="1056.0" r="6.8" fill="url(#pearl)"/>
<circle cx="1392.9" cy="922.5" r="6.8" fill="url(#pearl)"/>
<circle cx="1645.9" cy="947.4" r="6.8" fill="url(#pearl)"/>
<circle cx="1416.6" cy="982.4" r="6.8" fill="url(#pearl)"/>
<circle cx="1627.0" cy="920.4" r="7.8" fill="url(#pearl)"/>
<circle cx="1494.7" cy="1019.0" r="6.2" fill="#8f8a86"/>
<circle cx="1414.4" cy="948.2" r="7.8" fill="url(#pearl)"/>
<circle cx="1412.2" cy="957.2" r="7.8" fill="url(#pearl)"/>
<circle cx="1578.3" cy="1045.9" r="7.8" fill="url(#pearl)"/>
<circle cx="1579.2" cy="982.9" r="7.8" fill="url(#pearl)"/>
<circle cx="1524.8" cy="1014.0" r="7.8" fill="url(#pearl)"/>
<circle cx="1517.1" cy="1050.8" r="7.8" fill="url(#pearl)"/>
<circle cx="1573.3" cy="1032.8" r="7.8" fill="url(#pearl)"/>
<circle cx="1553.9" cy="1050.8" r="7.8" fill="url(#pearl)"/>
<circle cx="1421.1" cy="955.6" r="6.2" fill="#8f8a86"/>
<circle cx="1596.5" cy="968.2" r="7.8" fill="url(#pearl)"/>
<circle cx="1403.5" cy="903.7" r="7.8" fill="url(#pearl)"/>
<circle cx="1610.6" cy="1024.8" r="7.8" fill="url(#pearl)"/>
<circle cx="1536.7" cy="1013.5" r="7.8" fill="url(#pearl)"/>
<circle cx="1554.5" cy="999.6" r="7.8" fill="url(#pearl)"/>
<circle cx="1620.2" cy="941.0" r="7.8" fill="url(#pearl)"/>
<circle cx="1499.4" cy="1035.6" r="7.8" fill="url(#pearl)"/>
<circle cx="1460.9" cy="984.7" r="7.8" fill="url(#pearl)"/>
<circle cx="1418.2" cy="861.1" r="6.2" fill="#8f8a86"/>
<circle cx="1633.6" cy="1002.0" r="7.8" fill="url(#pearl)"/>
<circle cx="1667.2" cy="925.9" r="7.8" fill="url(#pearl)"/>
<circle cx="1627.4" cy="939.2" r="7.8" fill="url(#pearl)"/>
<circle cx="1382.3" cy="888.4" r="7.8" fill="url(#pearl)"/>
<circle cx="1635.5" cy="945.1" r="7.8" fill="url(#pearl)"/>
<circle cx="1408.2" cy="973.4" r="7.8" fill="url(#pearl)"/>
<circle cx="1527.3" cy="1055.5" r="7.8" fill="url(#pearl)"/>
<circle cx="1392.5" cy="892.7" r="7.8" fill="url(#pearl)"/>
<circle cx="1655.0" cy="911.4" r="6.2" fill="#8f8a86"/>
<circle cx="1394.9" cy="959.2" r="7.8" fill="url(#pearl)"/>
<circle cx="1418.7" cy="959.0" r="7.8" fill="url(#pearl)"/>
<circle cx="1378.7" cy="894.6" r="7.8" fill="url(#pearl)"/>
<circle cx="1563.0" cy="1022.5" r="7.8" fill="url(#pearl)"/>
<circle cx="1530.3" cy="1030.1" r="7.8" fill="url(#pearl)"/>
<circle cx="1412.4" cy="957.1" r="7.8" fill="url(#pearl)"/>
<circle cx="1536.9" cy="1060.6" r="7.8" fill="url(#pearl)"/>
<circle cx="1416.0" cy="956.8" r="7.8" fill="url(#pearl)"/>
<circle cx="1430.2" cy="922.2" r="6.2" fill="#8f8a86"/>
<circle cx="1578.8" cy="1020.4" r="7.8" fill="url(#pearl)"/>
<circle cx="1381.6" cy="860.1" r="7.8" fill="url(#pearl)"/>
<circle cx="1516.7" cy="1014.5" r="7.8" fill="url(#pearl)"/>
<circle cx="1396.8" cy="939.9" r="7.8" fill="url(#pearl)"/>
<circle cx="1402.7" cy="884.3" r="7.8" fill="url(#pearl)"/>
<circle cx="1533.7" cy="1041.0" r="7.8" fill="url(#pearl)"/>
<circle cx="1496.7" cy="1044.1" r="7.8" fill="url(#pearl)"/>
<circle cx="1425.5" cy="909.8" r="7.8" fill="url(#pearl)"/>
<circle cx="1558.7" cy="1006.2" r="6.2" fill="#8f8a86"/>
<circle cx="1392.4" cy="898.3" r="7.8" fill="url(#pearl)"/>
<circle cx="1431.5" cy="960.0" r="7.8" fill="url(#pearl)"/>
<circle cx="1410.3" cy="892.0" r="7.8" fill="url(#pearl)"/>
<circle cx="1654.0" cy="907.6" r="7.8" fill="url(#pearl)"/>
<circle cx="1618.4" cy="954.8" r="7.8" fill="url(#pearl)"/>
<circle cx="1574.2" cy="1019.6" r="7.8" fill="url(#pearl)"/>
<circle cx="1438.0" cy="1004.4" r="7.8" fill="url(#pearl)"/>
<circle cx="1500.5" cy="1045.3" r="7.8" fill="url(#pearl)"/>
<circle cx="1538.3" cy="1006.0" r="6.2" fill="#8f8a86"/>
<circle cx="1591.1" cy="1015.6" r="7.8" fill="url(#pearl)"/>
<circle cx="1596.2" cy="1026.0" r="7.8" fill="url(#pearl)"/>
<circle cx="1560.2" cy="1053.5" r="7.8" fill="url(#pearl)"/>
<circle cx="1516.0" cy="1038.9" r="7.8" fill="url(#pearl)"/>
<circle cx="1462.5" cy="1018.7" r="7.8" fill="url(#pearl)"/>
<circle cx="1561.2" cy="1040.1" r="7.8" fill="url(#pearl)"/>
<path d="M1782,899 C1815,900 1850,925 1885,952 C1935,988 1990,1030 2042,1064 L2171,1141 C2200,1160 2225,1190 2234,1225 C2240,1250 2228,1275 2214,1290 L2183,1333 L2128,1381 L2059,1457 L2009,1500 L1990,1530 L1900,1480 L1927,1449 L1957,1415 L1981,1364 L2017,1329 L2028,1286 C2040,1262 2050,1246 2047,1237 L2028,1224 L1935,1162 C1900,1137 1870,1121 1842,1119 L1786,1132 L1780,1104 L1771,1042 L1758,948 L1765,905 Z" fill="url(#skR)"/>
<path d="M2150,1150 C2200,1170 2235,1215 2234,1240 C2232,1265 2220,1285 2214,1290 L2183,1333 L2128,1381 L2059,1457 L2009,1500 L1990,1530 L1900,1480 L1927,1449 L1957,1415 L1981,1364 L2017,1329 L2028,1286 C2040,1262 2050,1246 2047,1237 Z" fill="url(#skRf)"/>
<path d="M1790,1128 L1842,1117 C1880,1120 1910,1140 1940,1162 L2045,1234 L2040,1250 L1930,1185 C1890,1160 1860,1145 1830,1140 Z" fill="#b8744a" opacity="0.45" filter="url(#b4)"/>
<path d="M1593,1447 C1600,1438 1620,1434 1640,1432 L1700,1427 L1775,1426 C1800,1432 1815,1450 1830,1465 L1870,1488 L1927,1449 L1990,1530 L1900,1560 L1800,1575 L1760,1560 L1720,1520 L1680,1492 L1640,1472 L1600,1460 Z" fill="#f3c6a3"/>
<path d="M1602,1452 C1680,1456 1750,1464 1812,1480" fill="none" stroke="#c0805a" stroke-width="3" opacity="0.75"/>
<path d="M1672,1472 C1720,1478 1770,1488 1812,1504" fill="none" stroke="#c0805a" stroke-width="3" opacity="0.7"/>
<path d="M1620,1436 C1680,1430 1740,1430 1790,1438" fill="none" stroke="#fbe0c8" stroke-width="5" opacity="0.7"/>
<path d="M1593,1447 C1598,1438 1612,1435 1628,1434 L1632,1446 C1620,1450 1605,1452 1596,1452 Z" fill="#f6dcd0"/>
<path d="M1470,720 C1450,660 1440,600 1452,550 C1470,500 1520,455 1600,440 L1640,520 L1560,600 L1520,700 L1500,750 Z" fill="#2e1a11"/>
<path d="M1560,520 L1600,470 L1660,450 L1720,452 L1760,475 L1782,520 L1787,586 L1764,607 L1774,633 L1769,645 L1752,659 L1743,675 L1747,694 L1740,722 L1731,736 L1733,760 L1722,785 L1698,795 L1651,800 L1600,792 L1545,765 L1501,715 L1498,640 L1540,560 Z" fill="url(#skH)"/>
<path d="M1545,660 C1600,700 1660,740 1700,745 C1715,760 1720,775 1715,790 L1651,800 L1600,792 L1545,765 L1505,715 Z" fill="#e2a47c" opacity="0.55" filter="url(#b8)"/>
<path d="M1610,600 C1650,640 1690,660 1730,660 L1700,690 C1660,690 1620,660 1590,630 Z" fill="#fff0e2" opacity="0.55" filter="url(#b8)"/>
<ellipse cx="1511" cy="592" rx="27" ry="42" fill="#f2bf9c" transform="rotate(-8 1511 592)"/>
<path d="M1503,565 C1520,562 1530,580 1524,600 C1520,612 1512,618 1512,628" fill="none" stroke="#c98462" stroke-width="4" opacity="0.7"/>
<path d="M1487,745 C1470,720 1458,690 1452,660 C1443,625 1438,590 1447,555 C1458,515 1485,485 1520,455 C1560,432 1610,428 1648,417 C1672,412 1700,414 1723,425 C1745,437 1765,462 1778,484 C1790,510 1796,545 1797,569 L1787,590 L1779,548 C1770,515 1758,495 1748,484 C1735,470 1715,463 1690,462 L1668,462 C1650,468 1640,480 1630,497 L1619,519 L1599,549 L1583,574 L1571,603 L1560,588 L1547,566 C1535,555 1520,549 1507,552 C1494,558 1486,575 1484,597 L1487,640 L1498,680 L1501,712 L1497,748 Z" fill="url(#hair)"/>
<path d="M1560,470 C1600,445 1660,432 1720,440" fill="none" stroke="#8a5d44" stroke-width="10" opacity="0.45" filter="url(#b4)"/>
<path d="M1512,640 C1525,632 1545,636 1550,650 C1553,664 1546,676 1536,680 C1532,688 1522,692 1512,690 C1515,680 1510,672 1508,662 C1505,652 1506,645 1512,640 Z" fill="#0d0b0b"/>
<circle cx="1516" cy="638" r="3" fill="#e8e4e0"/>
<path d="M1547,551 L1663,522" stroke="#e4b57e" stroke-width="6" stroke-linecap="round"/>
<path d="M1540,556 L1575,546" stroke="#2a1a12" stroke-width="6" stroke-linecap="round"/>
<path d="M1656,527 L1753,581 Q1761,588 1757,597 Q1740,619 1713,633 Q1688,629 1661,610 Q1648,599 1648,586 Q1650,552 1656,527 Z" fill="url(#lens1)" stroke="#e2b98a" stroke-width="3.5" stroke-linejoin="round"/>
<path d="M1767,596 L1815,631 Q1821,637 1818,646 Q1808,676 1793,700 Q1774,693 1758,678 Q1752,662 1753,648 Z" fill="url(#lens2)" stroke="#d9a878" stroke-width="2.5" stroke-linejoin="round" opacity="0.92"/>
<path d="M1753,581 L1770,597" stroke="#e4b57e" stroke-width="4"/>
<path d="M1764,606 L1774,633 L1769,645 L1752,659 L1745,640 L1752,615 Z" fill="#f8d3b6"/>
<ellipse cx="1757" cy="653" rx="6" ry="3" fill="#8a4a3a" opacity="0.7" transform="rotate(-25 1757 653)"/>
<path d="M1684,690 C1700,684 1715,676 1729,677 C1737,676 1742,680 1747,693 C1750,700 1746,708 1741,722 C1739,730 1736,734 1733,734 C1720,728 1705,716 1698,710 C1692,702 1688,696 1684,690 Z" fill="#d41217"/>
<path d="M1690,692 C1705,697 1725,702 1742,699" fill="none" stroke="#6e080c" stroke-width="2.5"/>
<path d="M1705,684 C1715,680 1725,680 1735,683" fill="none" stroke="#f6a09a" stroke-width="2.5" opacity="0.7"/>
<clipPath id="cclip"><path d="M1938,1446 Q1944,1440 1950,1446 L2086,1586 Q2092,1592 2086,1598 L1768,1888 Q1760,1895 1753,1887 L1622,1724 Q1616,1717 1623,1711 Z"/></clipPath>
<g clip-path="url(#cclip)">
<rect x="1600" y="1430" width="500" height="480" fill="url(#clg)"/>
<rect x="1600" y="1430" width="500" height="480" fill="url(#hex)"/>
<rect x="1600" y="1430" width="500" height="480" fill="url(#clhl)"/>
<path d="M1754.7,1745.6l6,-3" stroke="#ffe9e4" stroke-width="2.2" stroke-linecap="round" opacity="0.45"/>
<path d="M1897.1,1661.2l6,-3" stroke="#ffe9e4" stroke-width="2.2" stroke-linecap="round" opacity="0.47"/>
<path d="M1722.7,1852.7l6,-3" stroke="#ffe9e4" stroke-width="2.2" stroke-linecap="round" opacity="0.50"/>
<path d="M2002.7,1545.8l6,-3" stroke="#ffe9e4" stroke-width="2.2" stroke-linecap="round" opacity="0.51"/>
<path d="M1930.0,1564.1l6,-3" stroke="#ffe9e4" stroke-width="2.2" stroke-linecap="round" opacity="0.19"/>
<path d="M1914.0,1674.8l6,-3" stroke="#ffe9e4" stroke-width="2.2" stroke-linecap="round" opacity="0.84"/>
<path d="M1870.0,1695.6l6,-3" stroke="#ffe9e4" stroke-width="2.2" stroke-linecap="round" opacity="0.51"/>
<path d="M1902.9,1583.0l6,-3" stroke="#ffe9e4" stroke-width="2.2" stroke-linecap="round" opacity="0.23"/>
<path d="M1867.9,1725.5l6,-3" stroke="#ffe9e4" stroke-width="2.2" stroke-linecap="round" opacity="0.70"/>
<path d="M1970.3,1583.3l6,-3" stroke="#ffe9e4" stroke-width="2.2" stroke-linecap="round" opacity="0.53"/>
<path d="M1895.6,1547.3l6,-3" stroke="#ffe9e4" stroke-width="2.2" stroke-linecap="round" opacity="0.11"/>
<path d="M2012.8,1595.9l6,-3" stroke="#ffe9e4" stroke-width="2.2" stroke-linecap="round" opacity="0.48"/>
<path d="M1766.1,1772.2l6,-3" stroke="#ffe9e4" stroke-width="2.2" stroke-linecap="round" opacity="0.84"/>
<path d="M1827.3,1702.3l6,-3" stroke="#ffe9e4" stroke-width="2.2" stroke-linecap="round" opacity="0.54"/>
<path d="M1811.0,1715.7l6,-3" stroke="#ffe9e4" stroke-width="2.2" stroke-linecap="round" opacity="0.48"/>
<path d="M1836.8,1617.9l6,-3" stroke="#ffe9e4" stroke-width="2.2" stroke-linecap="round" opacity="0.13"/>
<path d="M1968.7,1549.5l6,-3" stroke="#ffe9e4" stroke-width="2.2" stroke-linecap="round" opacity="0.45"/>
<path d="M2012.3,1559.9l6,-3" stroke="#ffe9e4" stroke-width="2.2" stroke-linecap="round" opacity="0.81"/>
<path d="M1996.8,1558.9l6,-3" stroke="#ffe9e4" stroke-width="2.2" stroke-linecap="round" opacity="0.72"/>
<path d="M1882.4,1680.5l6,-3" stroke="#ffe9e4" stroke-width="2.2" stroke-linecap="round" opacity="0.85"/>
<path d="M1868.6,1661.7l6,-3" stroke="#ffe9e4" stroke-width="2.2" stroke-linecap="round" opacity="0.44"/>
<path d="M1663.6,1736.5l6,-3" stroke="#ffe9e4" stroke-width="2.2" stroke-linecap="round" opacity="0.14"/>
<path d="M1851.1,1746.0l6,-3" stroke="#ffe9e4" stroke-width="2.2" stroke-linecap="round" opacity="0.68"/>
<path d="M2003.2,1625.1l6,-3" stroke="#ffe9e4" stroke-width="2.2" stroke-linecap="round" opacity="0.35"/>
<path d="M1946.5,1725.2l6,-3" stroke="#ffe9e4" stroke-width="2.2" stroke-linecap="round" opacity="0.18"/>
<path d="M1998.9,1614.9l6,-3" stroke="#ffe9e4" stroke-width="2.2" stroke-linecap="round" opacity="0.78"/>
<path d="M1892.2,1732.5l6,-3" stroke="#ffe9e4" stroke-width="2.2" stroke-linecap="round" opacity="0.32"/>
<path d="M1896.4,1677.0l6,-3" stroke="#ffe9e4" stroke-width="2.2" stroke-linecap="round" opacity="0.51"/>
<path d="M1735.2,1749.1l6,-3" stroke="#ffe9e4" stroke-width="2.2" stroke-linecap="round" opacity="0.26"/>
<path d="M1742.2,1856.4l6,-3" stroke="#ffe9e4" stroke-width="2.2" stroke-linecap="round" opacity="0.60"/>
<path d="M1810.2,1719.9l6,-3" stroke="#ffe9e4" stroke-width="2.2" stroke-linecap="round" opacity="0.54"/>
<path d="M1846.9,1671.0l6,-3" stroke="#ffe9e4" stroke-width="2.2" stroke-linecap="round" opacity="0.47"/>
<path d="M1871.9,1635.8l6,-3" stroke="#ffe9e4" stroke-width="2.2" stroke-linecap="round" opacity="0.48"/>
<path d="M1824.5,1653.6l6,-3" stroke="#ffe9e4" stroke-width="2.2" stroke-linecap="round" opacity="0.19"/>
<path d="M1821.8,1782.3l6,-3" stroke="#ffe9e4" stroke-width="2.2" stroke-linecap="round" opacity="0.68"/>
<path d="M1867.5,1694.1l6,-3" stroke="#ffe9e4" stroke-width="2.2" stroke-linecap="round" opacity="0.66"/>
<path d="M1889.1,1681.2l6,-3" stroke="#ffe9e4" stroke-width="2.2" stroke-linecap="round" opacity="0.50"/>
<path d="M1894.8,1664.8l6,-3" stroke="#ffe9e4" stroke-width="2.2" stroke-linecap="round" opacity="0.72"/>
<path d="M1846.7,1705.3l6,-3" stroke="#ffe9e4" stroke-width="2.2" stroke-linecap="round" opacity="0.74"/>
<path d="M1805.4,1730.6l6,-3" stroke="#ffe9e4" stroke-width="2.2" stroke-linecap="round" opacity="0.41"/>
<path d="M1679.2,1772.3l6,-3" stroke="#ffe9e4" stroke-width="2.2" stroke-linecap="round" opacity="0.21"/>
<path d="M2011.7,1576.9l6,-3" stroke="#ffe9e4" stroke-width="2.2" stroke-linecap="round" opacity="0.79"/>
<path d="M1840.6,1791.9l6,-3" stroke="#ffe9e4" stroke-width="2.2" stroke-linecap="round" opacity="0.33"/>
<path d="M1778.6,1725.3l6,-3" stroke="#ffe9e4" stroke-width="2.2" stroke-linecap="round" opacity="0.37"/>
<path d="M1855.2,1772.1l6,-3" stroke="#ffe9e4" stroke-width="2.2" stroke-linecap="round" opacity="0.47"/>
<path d="M1671.5,1784.9l6,-3" stroke="#ffe9e4" stroke-width="2.2" stroke-linecap="round" opacity="0.20"/>
<path d="M1756.8,1757.9l6,-3" stroke="#ffe9e4" stroke-width="2.2" stroke-linecap="round" opacity="0.61"/>
<path d="M1794.3,1790.7l6,-3" stroke="#ffe9e4" stroke-width="2.2" stroke-linecap="round" opacity="0.68"/>
<path d="M1768.0,1848.0l6,-3" stroke="#ffe9e4" stroke-width="2.2" stroke-linecap="round" opacity="0.35"/>
<path d="M1828.3,1768.9l6,-3" stroke="#ffe9e4" stroke-width="2.2" stroke-linecap="round" opacity="0.69"/>
<path d="M1732.8,1764.3l6,-3" stroke="#ffe9e4" stroke-width="2.2" stroke-linecap="round" opacity="0.37"/>
<path d="M1936.9,1691.3l6,-3" stroke="#ffe9e4" stroke-width="2.2" stroke-linecap="round" opacity="0.37"/>
<path d="M1723.5,1784.6l6,-3" stroke="#ffe9e4" stroke-width="2.2" stroke-linecap="round" opacity="0.50"/>
<path d="M1786.7,1812.6l6,-3" stroke="#ffe9e4" stroke-width="2.2" stroke-linecap="round" opacity="0.40"/>
<path d="M1742.1,1705.0l6,-3" stroke="#ffe9e4" stroke-width="2.2" stroke-linecap="round" opacity="0.14"/>
<path d="M1919.5,1676.5l6,-3" stroke="#ffe9e4" stroke-width="2.2" stroke-linecap="round" opacity="0.48"/>
<path d="M1773.6,1732.8l6,-3" stroke="#ffe9e4" stroke-width="2.2" stroke-linecap="round" opacity="0.53"/>
<path d="M1775.1,1747.8l6,-3" stroke="#ffe9e4" stroke-width="2.2" stroke-linecap="round" opacity="0.51"/>
<path d="M1861.6,1758.7l6,-3" stroke="#ffe9e4" stroke-width="2.2" stroke-linecap="round" opacity="0.57"/>
<path d="M1987.6,1602.5l6,-3" stroke="#ffe9e4" stroke-width="2.2" stroke-linecap="round" opacity="0.96"/>
<path d="M1756.1,1757.4l6,-3" stroke="#ffe9e4" stroke-width="2.2" stroke-linecap="round" opacity="0.58"/>
<path d="M1953.2,1590.7l6,-3" stroke="#ffe9e4" stroke-width="2.2" stroke-linecap="round" opacity="0.45"/>
<path d="M1784.2,1713.5l6,-3" stroke="#ffe9e4" stroke-width="2.2" stroke-linecap="round" opacity="0.31"/>
<path d="M1707.5,1800.1l6,-3" stroke="#ffe9e4" stroke-width="2.2" stroke-linecap="round" opacity="0.61"/>
<path d="M1708.0,1815.4l6,-3" stroke="#ffe9e4" stroke-width="2.2" stroke-linecap="round" opacity="0.76"/>
<path d="M1962.8,1561.4l6,-3" stroke="#ffe9e4" stroke-width="2.2" stroke-linecap="round" opacity="0.42"/>
<path d="M1710.2,1838.3l6,-3" stroke="#ffe9e4" stroke-width="2.2" stroke-linecap="round" opacity="0.64"/>
<path d="M1898.6,1639.1l6,-3" stroke="#ffe9e4" stroke-width="2.2" stroke-linecap="round" opacity="0.54"/>
<path d="M1875.4,1771.9l6,-3" stroke="#ffe9e4" stroke-width="2.2" stroke-linecap="round" opacity="0.27"/>
<path d="M1771.4,1755.5l6,-3" stroke="#ffe9e4" stroke-width="2.2" stroke-linecap="round" opacity="0.70"/>
<path d="M1863.4,1717.5l6,-3" stroke="#ffe9e4" stroke-width="2.2" stroke-linecap="round" opacity="0.55"/>
<path d="M1849.1,1664.3l6,-3" stroke="#ffe9e4" stroke-width="2.2" stroke-linecap="round" opacity="0.52"/>
<path d="M1778.1,1815.2l6,-3" stroke="#ffe9e4" stroke-width="2.2" stroke-linecap="round" opacity="0.65"/>
<path d="M1903.2,1541.6l6,-3" stroke="#ffe9e4" stroke-width="2.2" stroke-linecap="round" opacity="0.08"/>
<path d="M1912.0,1676.4l6,-3" stroke="#ffe9e4" stroke-width="2.2" stroke-linecap="round" opacity="0.57"/>
<path d="M1784.5,1760.3l6,-3" stroke="#ffe9e4" stroke-width="2.2" stroke-linecap="round" opacity="0.68"/>
<path d="M1790.3,1668.1l6,-3" stroke="#ffe9e4" stroke-width="2.2" stroke-linecap="round" opacity="0.10"/>
<path d="M1732.6,1837.4l6,-3" stroke="#ffe9e4" stroke-width="2.2" stroke-linecap="round" opacity="0.49"/>
<path d="M2010.8,1645.5l6,-3" stroke="#ffe9e4" stroke-width="2.2" stroke-linecap="round" opacity="0.25"/>
<path d="M1855.4,1692.3l6,-3" stroke="#ffe9e4" stroke-width="2.2" stroke-linecap="round" opacity="0.56"/>
<path d="M1935.1,1691.3l6,-3" stroke="#ffe9e4" stroke-width="2.2" stroke-linecap="round" opacity="0.49"/>
<path d="M1830.5,1754.1l6,-3" stroke="#ffe9e4" stroke-width="2.2" stroke-linecap="round" opacity="0.48"/>
<path d="M1907.2,1717.8l6,-3" stroke="#ffe9e4" stroke-width="2.2" stroke-linecap="round" opacity="0.52"/>
<path d="M1843.3,1756.5l6,-3" stroke="#ffe9e4" stroke-width="2.2" stroke-linecap="round" opacity="0.51"/>
<path d="M1907.1,1686.3l6,-3" stroke="#ffe9e4" stroke-width="2.2" stroke-linecap="round" opacity="0.76"/>
<path d="M1840.1,1752.8l6,-3" stroke="#ffe9e4" stroke-width="2.2" stroke-linecap="round" opacity="0.57"/>
<path d="M1785.5,1694.9l6,-3" stroke="#ffe9e4" stroke-width="2.2" stroke-linecap="round" opacity="0.28"/>
<path d="M1889.5,1603.0l6,-3" stroke="#ffe9e4" stroke-width="2.2" stroke-linecap="round" opacity="0.26"/>
<path d="M1806.0,1800.1l6,-3" stroke="#ffe9e4" stroke-width="2.2" stroke-linecap="round" opacity="0.50"/>
<path d="M1954.9,1683.2l6,-3" stroke="#ffe9e4" stroke-width="2.2" stroke-linecap="round" opacity="0.39"/>
<path d="M1998.9,1615.7l6,-3" stroke="#ffe9e4" stroke-width="2.2" stroke-linecap="round" opacity="0.76"/>
<path d="M1867.0,1787.6l6,-3" stroke="#ffe9e4" stroke-width="2.2" stroke-linecap="round" opacity="0.21"/>
<path d="M1822.4,1678.7l6,-3" stroke="#ffe9e4" stroke-width="2.2" stroke-linecap="round" opacity="0.28"/>
<path d="M1932.0,1581.3l6,-3" stroke="#ffe9e4" stroke-width="2.2" stroke-linecap="round" opacity="0.43"/>
<path d="M1865.6,1598.2l6,-3" stroke="#ffe9e4" stroke-width="2.2" stroke-linecap="round" opacity="0.14"/>
<path d="M1916.6,1723.2l6,-3" stroke="#ffe9e4" stroke-width="2.2" stroke-linecap="round" opacity="0.25"/>
<path d="M1775.8,1830.3l6,-3" stroke="#ffe9e4" stroke-width="2.2" stroke-linecap="round" opacity="0.55"/>
<path d="M1731.9,1843.4l6,-3" stroke="#ffe9e4" stroke-width="2.2" stroke-linecap="round" opacity="0.77"/>
<path d="M1770.7,1801.7l6,-3" stroke="#ffe9e4" stroke-width="2.2" stroke-linecap="round" opacity="0.45"/>
<path d="M2014.5,1658.0l6,-3" stroke="#ffe9e4" stroke-width="2.2" stroke-linecap="round" opacity="0.28"/>
<path d="M2010.9,1657.4l6,-3" stroke="#ffe9e4" stroke-width="2.2" stroke-linecap="round" opacity="0.36"/>
<path d="M1892.5,1685.8l6,-3" stroke="#ffe9e4" stroke-width="2.2" stroke-linecap="round" opacity="0.85"/>
<path d="M1861.0,1692.9l6,-3" stroke="#ffe9e4" stroke-width="2.2" stroke-linecap="round" opacity="0.75"/>
<path d="M1740.0,1812.6l6,-3" stroke="#ffe9e4" stroke-width="2.2" stroke-linecap="round" opacity="0.53"/>
<path d="M1740.4,1673.9l6,-3" stroke="#ffe9e4" stroke-width="2.2" stroke-linecap="round" opacity="0.12"/>
<path d="M1970.0,1615.5l6,-3" stroke="#ffe9e4" stroke-width="2.2" stroke-linecap="round" opacity="0.62"/>
<path d="M1920.4,1694.2l6,-3" stroke="#ffe9e4" stroke-width="2.2" stroke-linecap="round" opacity="0.62"/>
<path d="M1811.4,1711.1l6,-3" stroke="#ffe9e4" stroke-width="2.2" stroke-linecap="round" opacity="0.46"/>
<path d="M1861.1,1752.6l6,-3" stroke="#ffe9e4" stroke-width="2.2" stroke-linecap="round" opacity="0.35"/>
<path d="M1895.2,1739.3l6,-3" stroke="#ffe9e4" stroke-width="2.2" stroke-linecap="round" opacity="0.45"/>
<path d="M1752.3,1792.4l6,-3" stroke="#ffe9e4" stroke-width="2.2" stroke-linecap="round" opacity="0.78"/>
<path d="M1929.8,1615.4l6,-3" stroke="#ffe9e4" stroke-width="2.2" stroke-linecap="round" opacity="0.55"/>
<path d="M1878.7,1629.0l6,-3" stroke="#ffe9e4" stroke-width="2.2" stroke-linecap="round" opacity="0.47"/>
<path d="M1794.3,1847.9l6,-3" stroke="#ffe9e4" stroke-width="2.2" stroke-linecap="round" opacity="0.34"/>
<path d="M1898.3,1732.0l6,-3" stroke="#ffe9e4" stroke-width="2.2" stroke-linecap="round" opacity="0.40"/>
<path d="M1943.5,1654.9l6,-3" stroke="#ffe9e4" stroke-width="2.2" stroke-linecap="round" opacity="0.51"/>
<path d="M1913.6,1705.9l6,-3" stroke="#ffe9e4" stroke-width="2.2" stroke-linecap="round" opacity="0.43"/>
<path d="M1753.8,1748.2l6,-3" stroke="#ffe9e4" stroke-width="2.2" stroke-linecap="round" opacity="0.37"/>
<path d="M1862.0,1569.8l6,-3" stroke="#ffe9e4" stroke-width="2.2" stroke-linecap="round" opacity="0.11"/>
<path d="M1957.1,1584.3l6,-3" stroke="#ffe9e4" stroke-width="2.2" stroke-linecap="round" opacity="0.41"/>
<path d="M1702.1,1822.6l6,-3" stroke="#ffe9e4" stroke-width="2.2" stroke-linecap="round" opacity="0.60"/>
<path d="M1841.0,1752.2l6,-3" stroke="#ffe9e4" stroke-width="2.2" stroke-linecap="round" opacity="0.52"/>
<path d="M1976.6,1657.6l6,-3" stroke="#ffe9e4" stroke-width="2.2" stroke-linecap="round" opacity="0.35"/>
<path d="M1981.2,1523.9l6,-3" stroke="#ffe9e4" stroke-width="2.2" stroke-linecap="round" opacity="0.27"/>
<path d="M1976.2,1618.5l6,-3" stroke="#ffe9e4" stroke-width="2.2" stroke-linecap="round" opacity="0.84"/>
<path d="M1836.3,1635.2l6,-3" stroke="#ffe9e4" stroke-width="2.2" stroke-linecap="round" opacity="0.23"/>
<path d="M1839.0,1738.6l6,-3" stroke="#ffe9e4" stroke-width="2.2" stroke-linecap="round" opacity="0.79"/>
<path d="M1990.1,1554.0l6,-3" stroke="#ffe9e4" stroke-width="2.2" stroke-linecap="round" opacity="0.41"/>
<path d="M1938.4,1649.8l6,-3" stroke="#ffe9e4" stroke-width="2.2" stroke-linecap="round" opacity="0.78"/>
<path d="M2023.8,1593.8l6,-3" stroke="#ffe9e4" stroke-width="2.2" stroke-linecap="round" opacity="0.47"/>
<path d="M1771.1,1751.2l6,-3" stroke="#ffe9e4" stroke-width="2.2" stroke-linecap="round" opacity="0.43"/>
<path d="M1969.9,1694.3l6,-3" stroke="#ffe9e4" stroke-width="2.2" stroke-linecap="round" opacity="0.23"/>
<path d="M1931.6,1547.7l6,-3" stroke="#ffe9e4" stroke-width="2.2" stroke-linecap="round" opacity="0.14"/>
<path d="M1839.1,1724.0l6,-3" stroke="#ffe9e4" stroke-width="2.2" stroke-linecap="round" opacity="0.53"/>
<path d="M1958.5,1598.5l6,-3" stroke="#ffe9e4" stroke-width="2.2" stroke-linecap="round" opacity="0.52"/>
<path d="M1780.8,1699.7l6,-3" stroke="#ffe9e4" stroke-width="2.2" stroke-linecap="round" opacity="0.19"/>
<path d="M1791.3,1725.7l6,-3" stroke="#ffe9e4" stroke-width="2.2" stroke-linecap="round" opacity="0.47"/>
<path d="M1870.3,1719.9l6,-3" stroke="#ffe9e4" stroke-width="2.2" stroke-linecap="round" opacity="0.83"/>
<path d="M1868.4,1778.5l6,-3" stroke="#ffe9e4" stroke-width="2.2" stroke-linecap="round" opacity="0.30"/>
<path d="M1737.6,1801.9l6,-3" stroke="#ffe9e4" stroke-width="2.2" stroke-linecap="round" opacity="0.50"/>
<path d="M2030.9,1647.8l6,-3" stroke="#ffe9e4" stroke-width="2.2" stroke-linecap="round" opacity="0.29"/>
<path d="M1763.9,1846.5l6,-3" stroke="#ffe9e4" stroke-width="2.2" stroke-linecap="round" opacity="0.51"/>
<path d="M1936.3,1622.0l6,-3" stroke="#ffe9e4" stroke-width="2.2" stroke-linecap="round" opacity="0.54"/>
<path d="M1890.5,1621.5l6,-3" stroke="#ffe9e4" stroke-width="2.2" stroke-linecap="round" opacity="0.33"/>
<path d="M1901.6,1584.1l6,-3" stroke="#ffe9e4" stroke-width="2.2" stroke-linecap="round" opacity="0.29"/>
<path d="M1905.7,1640.9l6,-3" stroke="#ffe9e4" stroke-width="2.2" stroke-linecap="round" opacity="0.58"/>
<path d="M1814.9,1741.8l6,-3" stroke="#ffe9e4" stroke-width="2.2" stroke-linecap="round" opacity="0.81"/>
<path d="M1904.5,1635.9l6,-3" stroke="#ffe9e4" stroke-width="2.2" stroke-linecap="round" opacity="0.60"/>
<path d="M1899.0,1660.0l6,-3" stroke="#ffe9e4" stroke-width="2.2" stroke-linecap="round" opacity="0.52"/>
<path d="M1980.2,1587.6l6,-3" stroke="#ffe9e4" stroke-width="2.2" stroke-linecap="round" opacity="0.83"/>
<path d="M1738.8,1789.2l6,-3" stroke="#ffe9e4" stroke-width="2.2" stroke-linecap="round" opacity="0.53"/>
<path d="M1904.2,1608.7l6,-3" stroke="#ffe9e4" stroke-width="2.2" stroke-linecap="round" opacity="0.42"/>
<path d="M1830.1,1691.6l6,-3" stroke="#ffe9e4" stroke-width="2.2" stroke-linecap="round" opacity="0.43"/>
<path d="M1805.0,1842.9l6,-3" stroke="#ffe9e4" stroke-width="2.2" stroke-linecap="round" opacity="0.28"/>
<path d="M1898.3,1715.4l6,-3" stroke="#ffe9e4" stroke-width="2.2" stroke-linecap="round" opacity="0.60"/>
<path d="M1817.5,1740.3l6,-3" stroke="#ffe9e4" stroke-width="2.2" stroke-linecap="round" opacity="0.89"/>
<path d="M1748.8,1864.2l6,-3" stroke="#ffe9e4" stroke-width="2.2" stroke-linecap="round" opacity="0.40"/>
<path d="M1788.2,1778.2l6,-3" stroke="#ffe9e4" stroke-width="2.2" stroke-linecap="round" opacity="0.63"/>
<path d="M1807.0,1699.9l6,-3" stroke="#ffe9e4" stroke-width="2.2" stroke-linecap="round" opacity="0.43"/>
<path d="M1916.7,1590.3l6,-3" stroke="#ffe9e4" stroke-width="2.2" stroke-linecap="round" opacity="0.25"/>
<path d="M1838.0,1820.6l6,-3" stroke="#ffe9e4" stroke-width="2.2" stroke-linecap="round" opacity="0.15"/>
<path d="M1750.9,1821.4l6,-3" stroke="#ffe9e4" stroke-width="2.2" stroke-linecap="round" opacity="0.51"/>
<path d="M1719.7,1736.6l6,-3" stroke="#ffe9e4" stroke-width="2.2" stroke-linecap="round" opacity="0.18"/>
<path d="M1961.9,1660.4l6,-3" stroke="#ffe9e4" stroke-width="2.2" stroke-linecap="round" opacity="0.54"/>
<path d="M1708.1,1750.5l6,-3" stroke="#ffe9e4" stroke-width="2.2" stroke-linecap="round" opacity="0.20"/>
<path d="M1730.3,1745.8l6,-3" stroke="#ffe9e4" stroke-width="2.2" stroke-linecap="round" opacity="0.24"/>
<path d="M1779.3,1766.0l6,-3" stroke="#ffe9e4" stroke-width="2.2" stroke-linecap="round" opacity="0.80"/>
<path d="M1736.5,1857.7l6,-3" stroke="#ffe9e4" stroke-width="2.2" stroke-linecap="round" opacity="0.66"/>
<path d="M1769.3,1669.4l6,-3" stroke="#ffe9e4" stroke-width="2.2" stroke-linecap="round" opacity="0.12"/>
<path d="M1837.2,1619.6l6,-3" stroke="#ffe9e4" stroke-width="2.2" stroke-linecap="round" opacity="0.13"/>
<path d="M1741.1,1690.6l6,-3" stroke="#ffe9e4" stroke-width="2.2" stroke-linecap="round" opacity="0.14"/>
<path d="M1821.8,1665.2l6,-3" stroke="#ffe9e4" stroke-width="2.2" stroke-linecap="round" opacity="0.19"/>
<path d="M1922.5,1597.7l6,-3" stroke="#ffe9e4" stroke-width="2.2" stroke-linecap="round" opacity="0.45"/>
<path d="M1830.0,1669.7l6,-3" stroke="#ffe9e4" stroke-width="2.2" stroke-linecap="round" opacity="0.29"/>
<path d="M1869.6,1691.1l6,-3" stroke="#ffe9e4" stroke-width="2.2" stroke-linecap="round" opacity="0.48"/>
<path d="M1845.7,1682.3l6,-3" stroke="#ffe9e4" stroke-width="2.2" stroke-linecap="round" opacity="0.54"/>
<path d="M1985.2,1549.1l6,-3" stroke="#ffe9e4" stroke-width="2.2" stroke-linecap="round" opacity="0.56"/>
<path d="M1760.4,1817.7l6,-3" stroke="#ffe9e4" stroke-width="2.2" stroke-linecap="round" opacity="0.43"/>
<path d="M1780.8,1697.6l6,-3" stroke="#ffe9e4" stroke-width="2.2" stroke-linecap="round" opacity="0.22"/>
<path d="M1665.2,1745.2l6,-3" stroke="#ffe9e4" stroke-width="2.2" stroke-linecap="round" opacity="0.10"/>
<path d="M1966.0,1583.8l6,-3" stroke="#ffe9e4" stroke-width="2.2" stroke-linecap="round" opacity="0.62"/>
<path d="M1774.3,1834.5l6,-3" stroke="#ffe9e4" stroke-width="2.2" stroke-linecap="round" opacity="0.57"/>
<path d="M1902.4,1609.5l6,-3" stroke="#ffe9e4" stroke-width="2.2" stroke-linecap="round" opacity="0.44"/>
<path d="M1839.3,1775.3l6,-3" stroke="#ffe9e4" stroke-width="2.2" stroke-linecap="round" opacity="0.57"/>
<path d="M1781.0,1648.4l6,-3" stroke="#ffe9e4" stroke-width="2.2" stroke-linecap="round" opacity="0.13"/>
<path d="M1867.1,1716.7l6,-3" stroke="#ffe9e4" stroke-width="2.2" stroke-linecap="round" opacity="0.48"/>
<path d="M1775.6,1793.7l6,-3" stroke="#ffe9e4" stroke-width="2.2" stroke-linecap="round" opacity="0.53"/>
<path d="M1852.7,1692.4l6,-3" stroke="#ffe9e4" stroke-width="2.2" stroke-linecap="round" opacity="0.58"/>
<path d="M1877.5,1623.6l6,-3" stroke="#ffe9e4" stroke-width="2.2" stroke-linecap="round" opacity="0.29"/>
<path d="M1855.1,1716.1l6,-3" stroke="#ffe9e4" stroke-width="2.2" stroke-linecap="round" opacity="0.58"/>
<path d="M1961.8,1560.4l6,-3" stroke="#ffe9e4" stroke-width="2.2" stroke-linecap="round" opacity="0.45"/>
<path d="M1797.9,1712.7l6,-3" stroke="#ffe9e4" stroke-width="2.2" stroke-linecap="round" opacity="0.48"/>
<path d="M1803.8,1811.1l6,-3" stroke="#ffe9e4" stroke-width="2.2" stroke-linecap="round" opacity="0.29"/>
<path d="M1776.2,1788.9l6,-3" stroke="#ffe9e4" stroke-width="2.2" stroke-linecap="round" opacity="0.69"/>
<path d="M1752.4,1770.3l6,-3" stroke="#ffe9e4" stroke-width="2.2" stroke-linecap="round" opacity="0.45"/>
<path d="M1746.0,1778.6l6,-3" stroke="#ffe9e4" stroke-width="2.2" stroke-linecap="round" opacity="0.39"/>
<path d="M1751.6,1824.0l6,-3" stroke="#ffe9e4" stroke-width="2.2" stroke-linecap="round" opacity="0.49"/>
<path d="M1867.8,1714.2l6,-3" stroke="#ffe9e4" stroke-width="2.2" stroke-linecap="round" opacity="0.66"/>
<path d="M1838.1,1732.9l6,-3" stroke="#ffe9e4" stroke-width="2.2" stroke-linecap="round" opacity="0.82"/>
<path d="M1698.4,1800.5l6,-3" stroke="#ffe9e4" stroke-width="2.2" stroke-linecap="round" opacity="0.31"/>
<path d="M2029.6,1596.0l6,-3" stroke="#ffe9e4" stroke-width="2.2" stroke-linecap="round" opacity="0.44"/>
<path d="M1719.0,1796.5l6,-3" stroke="#ffe9e4" stroke-width="2.2" stroke-linecap="round" opacity="0.58"/>
<path d="M1819.2,1750.4l6,-3" stroke="#ffe9e4" stroke-width="2.2" stroke-linecap="round" opacity="0.54"/>
<path d="M1719.7,1824.5l6,-3" stroke="#ffe9e4" stroke-width="2.2" stroke-linecap="round" opacity="0.85"/>
<path d="M1830.6,1687.4l6,-3" stroke="#ffe9e4" stroke-width="2.2" stroke-linecap="round" opacity="0.60"/>
<path d="M1801.8,1759.8l6,-3" stroke="#ffe9e4" stroke-width="2.2" stroke-linecap="round" opacity="0.91"/>
<path d="M1929.2,1695.9l6,-3" stroke="#ffe9e4" stroke-width="2.2" stroke-linecap="round" opacity="0.42"/>
<path d="M1704.2,1779.8l6,-3" stroke="#ffe9e4" stroke-width="2.2" stroke-linecap="round" opacity="0.39"/>
<path d="M1636.7,1759.9l6,-3" stroke="#ffe9e4" stroke-width="2.2" stroke-linecap="round" opacity="0.08"/>
<path d="M1739.1,1822.1l6,-3" stroke="#ffe9e4" stroke-width="2.2" stroke-linecap="round" opacity="0.49"/>
<path d="M1921.0,1670.4l6,-3" stroke="#ffe9e4" stroke-width="2.2" stroke-linecap="round" opacity="0.84"/>
<path d="M1803.3,1825.4l6,-3" stroke="#ffe9e4" stroke-width="2.2" stroke-linecap="round" opacity="0.42"/>
<path d="M1991.9,1583.5l6,-3" stroke="#ffe9e4" stroke-width="2.2" stroke-linecap="round" opacity="0.88"/>
<path d="M1703.8,1817.5l6,-3" stroke="#ffe9e4" stroke-width="2.2" stroke-linecap="round" opacity="0.76"/>
<path d="M1772.4,1862.1l6,-3" stroke="#ffe9e4" stroke-width="2.2" stroke-linecap="round" opacity="0.25"/>
<path d="M1998.0,1633.7l6,-3" stroke="#ffe9e4" stroke-width="2.2" stroke-linecap="round" opacity="0.43"/>
<path d="M1941.5,1677.5l6,-3" stroke="#ffe9e4" stroke-width="2.2" stroke-linecap="round" opacity="0.66"/>
<path d="M1758.8,1790.9l6,-3" stroke="#ffe9e4" stroke-width="2.2" stroke-linecap="round" opacity="0.87"/>
<path d="M1834.0,1634.9l6,-3" stroke="#ffe9e4" stroke-width="2.2" stroke-linecap="round" opacity="0.22"/>
<path d="M1803.2,1721.5l6,-3" stroke="#ffe9e4" stroke-width="2.2" stroke-linecap="round" opacity="0.63"/>
<path d="M1869.8,1722.7l6,-3" stroke="#ffe9e4" stroke-width="2.2" stroke-linecap="round" opacity="0.52"/>
<path d="M1753.0,1787.3l6,-3" stroke="#ffe9e4" stroke-width="2.2" stroke-linecap="round" opacity="0.75"/>
<path d="M1789.6,1690.4l6,-3" stroke="#ffe9e4" stroke-width="2.2" stroke-linecap="round" opacity="0.27"/>
<path d="M1753.8,1798.4l6,-3" stroke="#ffe9e4" stroke-width="2.2" stroke-linecap="round" opacity="0.72"/>
<path d="M1940.8,1626.5l6,-3" stroke="#ffe9e4" stroke-width="2.2" stroke-linecap="round" opacity="0.76"/>
<path d="M1741.9,1821.1l6,-3" stroke="#ffe9e4" stroke-width="2.2" stroke-linecap="round" opacity="0.76"/>
<path d="M1923.2,1533.4l6,-3" stroke="#ffe9e4" stroke-width="2.2" stroke-linecap="round" opacity="0.13"/>
<path d="M1831.8,1773.0l6,-3" stroke="#ffe9e4" stroke-width="2.2" stroke-linecap="round" opacity="0.47"/>
<path d="M1670.0,1754.3l6,-3" stroke="#ffe9e4" stroke-width="2.2" stroke-linecap="round" opacity="0.08"/>
<path d="M1930.5,1735.9l6,-3" stroke="#ffe9e4" stroke-width="2.2" stroke-linecap="round" opacity="0.17"/>
<path d="M1719.2,1805.4l6,-3" stroke="#ffe9e4" stroke-width="2.2" stroke-linecap="round" opacity="0.42"/>
<path d="M1737.3,1780.2l6,-3" stroke="#ffe9e4" stroke-width="2.2" stroke-linecap="round" opacity="0.59"/>
<path d="M1913.5,1705.7l6,-3" stroke="#ffe9e4" stroke-width="2.2" stroke-linecap="round" opacity="0.65"/>
<path d="M1777.9,1783.7l6,-3" stroke="#ffe9e4" stroke-width="2.2" stroke-linecap="round" opacity="0.76"/>
<path d="M1847.4,1735.9l6,-3" stroke="#ffe9e4" stroke-width="2.2" stroke-linecap="round" opacity="0.78"/>
<path d="M1836.8,1649.7l6,-3" stroke="#ffe9e4" stroke-width="2.2" stroke-linecap="round" opacity="0.22"/>
<path d="M1811.4,1849.4l6,-3" stroke="#ffe9e4" stroke-width="2.2" stroke-linecap="round" opacity="0.12"/>
<path d="M1740.5,1866.2l6,-3" stroke="#ffe9e4" stroke-width="2.2" stroke-linecap="round" opacity="0.57"/>
<path d="M1779.5,1798.9l6,-3" stroke="#ffe9e4" stroke-width="2.2" stroke-linecap="round" opacity="0.62"/>
<path d="M1769.4,1772.3l6,-3" stroke="#ffe9e4" stroke-width="2.2" stroke-linecap="round" opacity="0.80"/>
<path d="M1870.2,1636.8l6,-3" stroke="#ffe9e4" stroke-width="2.2" stroke-linecap="round" opacity="0.46"/>
<path d="M1777.4,1702.5l6,-3" stroke="#ffe9e4" stroke-width="2.2" stroke-linecap="round" opacity="0.30"/>
<path d="M1890.8,1769.2l6,-3" stroke="#ffe9e4" stroke-width="2.2" stroke-linecap="round" opacity="0.25"/>
<path d="M2000.8,1659.5l6,-3" stroke="#ffe9e4" stroke-width="2.2" stroke-linecap="round" opacity="0.25"/>
<path d="M1831.0,1640.6l6,-3" stroke="#ffe9e4" stroke-width="2.2" stroke-linecap="round" opacity="0.14"/>
<path d="M1826.9,1759.4l6,-3" stroke="#ffe9e4" stroke-width="2.2" stroke-linecap="round" opacity="0.62"/>
<path d="M1683.7,1770.5l6,-3" stroke="#ffe9e4" stroke-width="2.2" stroke-linecap="round" opacity="0.19"/>
<path d="M1896.4,1645.9l6,-3" stroke="#ffe9e4" stroke-width="2.2" stroke-linecap="round" opacity="0.60"/>
<path d="M1716.8,1717.3l6,-3" stroke="#ffe9e4" stroke-width="2.2" stroke-linecap="round" opacity="0.10"/>
<path d="M1736.8,1823.5l6,-3" stroke="#ffe9e4" stroke-width="2.2" stroke-linecap="round" opacity="0.91"/>
<path d="M1954.2,1662.4l6,-3" stroke="#ffe9e4" stroke-width="2.2" stroke-linecap="round" opacity="0.68"/>
</g>
<path d="M2086,1598 L1768,1888 Q1760,1895 1753,1887 L1622,1724" fill="none" stroke="#8e0a10" stroke-width="5" opacity="0.7"/>
<path d="M1621,1716 L1680,1666 M1790,1566 L1940,1443 Q1944,1440 1949,1444 L2089,1589" fill="none" stroke="#5e4a30" stroke-width="8.5" stroke-linecap="round"/>
<path d="M1621,1716 L1680,1666 M1790,1566 L1940,1443 Q1944,1440 1949,1444 L2089,1589" fill="none" stroke="#efe2c4" stroke-width="5" stroke-dasharray="5 4.5" stroke-linecap="round"/>
<path d="M1286,838 C1260,836 1240,842 1224,849 C1205,860 1196,875 1190,890 L1171,936 L1147,1042 L1143,1100 L1112,1224 L1098,1348 C1097,1400 1104,1432 1112,1442 C1120,1462 1130,1470 1143,1473 L1236,1488 L1361,1513 L1516,1544 L1562,1561 L1624,1592 L1662,1640 L1690,1648 L1722,1628 L1756,1596 L1776,1552 L1748,1530 L1717,1502 L1674,1478 L1593,1450 L1485,1429 L1361,1395 L1252,1345 L1261,1286 L1280,1193 L1292,1100 L1292,1073 L1302,1010 L1314,917 L1311,874 Z" fill="url(#skA)"/>
<path d="M1252,1345 L1361,1395 L1485,1429 L1593,1450 L1674,1478 L1717,1502 L1748,1530 L1776,1552 L1756,1596 L1722,1628 L1690,1648 L1662,1640 L1624,1592 L1562,1561 L1516,1544 L1361,1513 L1236,1488 L1143,1473 C1125,1468 1112,1450 1105,1420 L1180,1360 Z" fill="url(#skF)"/>
<path d="M1774,1556 C1762,1592 1730,1625 1690,1646" fill="none" stroke="#d49a72" stroke-width="7" opacity="0.5" filter="url(#b4)"/>
<path d="M1560,1560 C1620,1585 1660,1620 1700,1670" fill="none" stroke="#c98c62" stroke-width="10" opacity="0.45" filter="url(#b4)"/>
<path d="M1772,1540 L1826,1586 L1806,1634 L1770,1668 L1722,1682 L1672,1642 L1700,1600 Z" fill="#f4c7a5"/>
<path d="M1755.3,1565.6 L1864.6,1643.2 A11.0,11.0 0 0 0 1877.8,1625.6 L1772.7,1542.4 Z" fill="#f7ceaf"/>
<path d="M1761.8,1566.9 L1865.6,1641.9" stroke="#d29670" stroke-width="3.5" stroke-linecap="round" opacity="0.6"/>
<path d="M1775.9,1554.8 L1862.6,1622.5" stroke="#fde6d2" stroke-width="4" stroke-linecap="round" opacity="0.55"/>
<ellipse cx="1871.2" cy="1634.4" rx="10" ry="7.9" fill="#f2c3b0" transform="rotate(37 1871.2 1634.4)"/>
<path d="M1872.6,1645.8 Q1882.4,1642.8 1882.6,1632.6" fill="none" stroke="#f3f7f3" stroke-width="4.5" stroke-linecap="round"/>
<path d="M1732.7,1603.1 L1846.5,1694.3 A11.0,11.0 0 0 0 1860.7,1677.5 L1751.3,1580.9 Z" fill="#f7ceaf"/>
<path d="M1739.1,1604.7 L1847.5,1693.1" stroke="#d29670" stroke-width="3.5" stroke-linecap="round" opacity="0.6"/>
<path d="M1753.9,1593.4 L1845.7,1673.5" stroke="#fde6d2" stroke-width="4" stroke-linecap="round" opacity="0.55"/>
<ellipse cx="1853.6" cy="1685.9" rx="10" ry="7.9" fill="#f2c3b0" transform="rotate(40 1853.6 1685.9)"/>
<path d="M1854.4,1697.4 Q1864.3,1694.9 1865.0,1684.7" fill="none" stroke="#f3f7f3" stroke-width="4.5" stroke-linecap="round"/>
<path d="M1697.7,1628.7 L1817.6,1717.8 A10.3,10.3 0 0 0 1830.2,1701.6 L1714.3,1607.3 Z" fill="#f7ceaf"/>
<path d="M1704.1,1630.2 L1818.5,1716.6" stroke="#d29670" stroke-width="3.5" stroke-linecap="round" opacity="0.6"/>
<path d="M1717.6,1619.3 L1815.4,1697.9" stroke="#fde6d2" stroke-width="4" stroke-linecap="round" opacity="0.55"/>
<ellipse cx="1823.3" cy="1709.2" rx="10" ry="7.4" fill="#f2c3b0" transform="rotate(38 1823.3 1709.2)"/>
<path d="M1824.9,1720.2 Q1834.4,1717.8 1834.4,1708.1" fill="none" stroke="#f3f7f3" stroke-width="4.5" stroke-linecap="round"/>
<path d="M1671.8,1644.8 L1762.1,1724.5 A9.1,9.1 0 0 0 1774.5,1711.1 L1688.2,1627.2 Z" fill="#f7ceaf"/>
<path d="M1677.9,1647.1 L1763.0,1723.5" stroke="#d29670" stroke-width="3.5" stroke-linecap="round" opacity="0.6"/>
<path d="M1691.0,1638.8 L1760.5,1705.6" stroke="#fde6d2" stroke-width="4" stroke-linecap="round" opacity="0.55"/>
<ellipse cx="1766.9" cy="1716.5" rx="10" ry="6.6" fill="#f2c3b0" transform="rotate(43 1766.9 1716.5)"/>
<path d="M1768.2,1727.0 Q1777.2,1726.0 1777.4,1716.9" fill="none" stroke="#f3f7f3" stroke-width="4.5" stroke-linecap="round"/>
</g></svg>
</body></html>
